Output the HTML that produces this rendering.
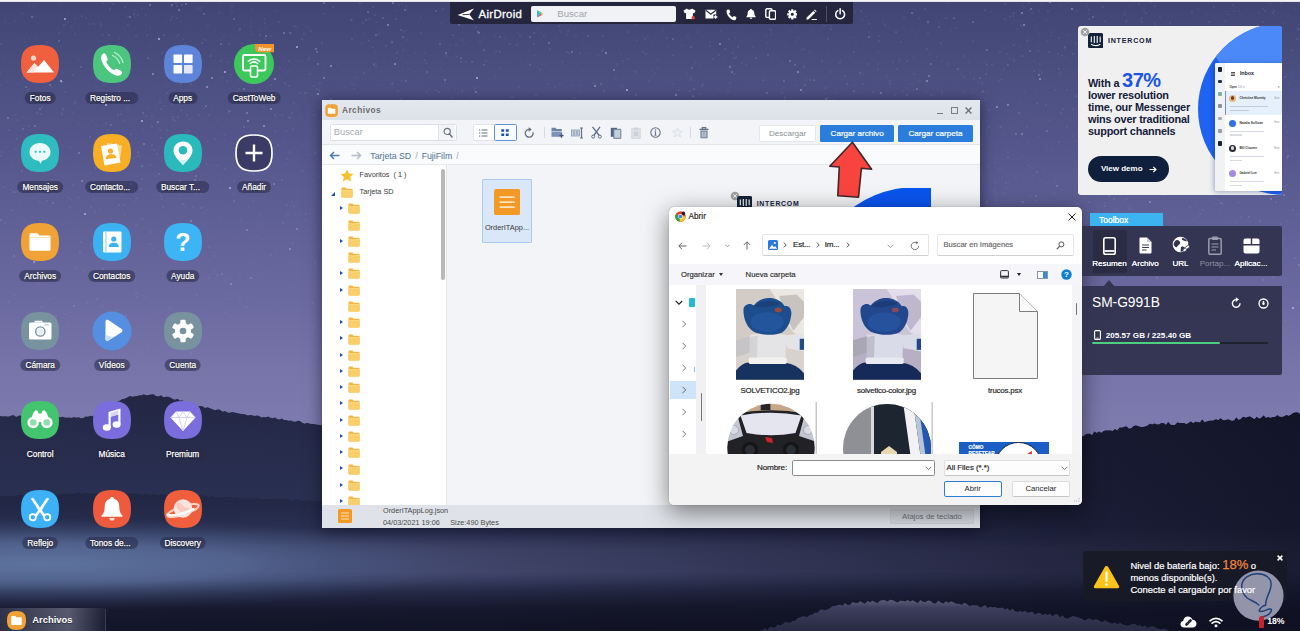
<!DOCTYPE html>
<html lang="es">
<head>
<meta charset="utf-8">
<title>AirDroid Web</title>
<style>
*{box-sizing:border-box;margin:0;padding:0}
html,body{width:1300px;height:631px;overflow:hidden;background:#3f4270}
body{position:relative;font-family:"Liberation Sans",sans-serif;color:#fff;font-size:8.1px}
.abs{position:absolute}
#bg{position:absolute;left:0;top:0;width:1300px;height:631px;
background:linear-gradient(to bottom,#41457400,#414574 0px,#494d7e 60px,#54568b 140px,#5f6096 220px,#6b6aa0 300px,#7573a8 360px,#7b79ad 410px,#7f7cb0 450px)}
#bgsvg{position:absolute;left:0;top:0}
/* desktop icons */
.ic{position:absolute;width:38px;height:38px}
.ic svg{display:block}
.lb{position:absolute;height:12.5px;line-height:12.5px;padding:0 5px;border-radius:6px;background:rgba(40,42,74,.55);color:#fff;font-size:8.3px;white-space:nowrap;transform:translateX(-50%);text-shadow:0 0 1.500px rgba(0,0,10,.9),0 .5px 1px rgba(0,0,10,.7);-webkit-text-stroke:.25px #fff}
</style>
</head>
<body>
<div id="bg"></div>
<svg id="bgsvg" width="1300" height="631" viewBox="0 0 1300 631">
<defs>
<linearGradient id="mg" gradientUnits="userSpaceOnUse" x1="0" y1="395" x2="0" y2="631">
<stop offset="0" stop-color="#212440"/><stop offset=".2" stop-color="#262a4a"/><stop offset=".45" stop-color="#293051"/><stop offset=".56" stop-color="#2d3457"/><stop offset=".65" stop-color="#42476c"/><stop offset=".75" stop-color="#464b72"/><stop offset=".83" stop-color="#2b3252"/><stop offset=".9" stop-color="#1d2138"/><stop offset="1" stop-color="#131425"/></linearGradient>
<linearGradient id="mgx" gradientUnits="userSpaceOnUse" x1="0" y1="0" x2="1300" y2="0">
<stop offset="0" stop-color="#2a3152" stop-opacity=".3"/><stop offset=".3" stop-color="#2a3152" stop-opacity=".1"/><stop offset=".45" stop-color="#121326" stop-opacity=".2"/><stop offset=".6" stop-color="#111225" stop-opacity=".38"/><stop offset=".8" stop-color="#101124" stop-opacity=".6"/><stop offset="1" stop-color="#0e0f20" stop-opacity=".78"/></linearGradient>
<linearGradient id="rgx" gradientUnits="userSpaceOnUse" x1="0" y1="0" x2="1100" y2="0">
<stop offset="0" stop-color="#1a1e38" stop-opacity=".55"/><stop offset=".5" stop-color="#1a1e38" stop-opacity=".4"/><stop offset="1" stop-color="#1a1e38" stop-opacity="0"/></linearGradient>
<linearGradient id="rmg" gradientUnits="userSpaceOnUse" x1="0" y1="492" x2="0" y2="548">
<stop offset="0" stop-color="#fff"/><stop offset=".35" stop-color="#bbb"/><stop offset="1" stop-color="#000"/></linearGradient>
<mask id="rm"><rect x="0" y="480" width="1300" height="90" fill="url(#rmg)"/></mask>
<radialGradient id="lm" gradientUnits="userSpaceOnUse" cx="0" cy="0" r="1" gradientTransform="translate(40 564) scale(440 46)">
<stop offset="0" stop-color="#5f76a2" stop-opacity=".95"/><stop offset=".45" stop-color="#586d99" stop-opacity=".75"/><stop offset=".75" stop-color="#4c5f8c" stop-opacity=".35"/><stop offset="1" stop-color="#45557f" stop-opacity="0"/></radialGradient>
<linearGradient id="hg" gradientUnits="userSpaceOnUse" x1="0" y1="600" x2="0" y2="631">
<stop offset="0" stop-color="#6a6b88"/><stop offset=".25" stop-color="#48496a"/><stop offset="1" stop-color="#2e2f4a"/></linearGradient>
<linearGradient id="tk" gradientUnits="userSpaceOnUse" x1="0" y1="580" x2="0" y2="631"><stop offset="0" stop-color="#0f1022" stop-opacity="0"/><stop offset=".5" stop-color="#0f1022" stop-opacity=".4"/><stop offset=".6" stop-color="#0f1022" stop-opacity=".55"/><stop offset="1" stop-color="#0f1022" stop-opacity=".6"/></linearGradient>
</defs>
<rect x="0" y="0" width="1300" height="1.900" fill="#fff" opacity=".95"/>
<g fill="#cdd0f2"><g opacity=".17"><circle cx="109" cy="226" r="0.7"/><circle cx="169" cy="75" r="0.6"/><circle cx="806" cy="343" r="0.8"/><circle cx="548" cy="196" r="0.7"/><circle cx="1002" cy="80" r="0.7"/><circle cx="744" cy="252" r="0.5"/><circle cx="1059" cy="69" r="0.8"/><circle cx="878" cy="64" r="0.7"/><circle cx="875" cy="199" r="0.5"/><circle cx="128" cy="17" r="0.7"/><circle cx="1067" cy="127" r="0.7"/><circle cx="284" cy="59" r="0.5"/><circle cx="919" cy="315" r="0.6"/><circle cx="541" cy="11" r="0.5"/><circle cx="251" cy="31" r="0.6"/><circle cx="981" cy="175" r="0.5"/><circle cx="135" cy="202" r="0.6"/><circle cx="329" cy="161" r="0.8"/><circle cx="991" cy="250" r="0.6"/><circle cx="1164" cy="262" r="0.6"/><circle cx="710" cy="163" r="0.5"/><circle cx="1075" cy="43" r="0.7"/><circle cx="215" cy="252" r="0.5"/><circle cx="306" cy="214" r="0.8"/><circle cx="1285" cy="105" r="0.5"/><circle cx="1021" cy="56" r="0.6"/><circle cx="1032" cy="13" r="0.8"/><circle cx="1241" cy="161" r="0.6"/><circle cx="684" cy="115" r="0.5"/><circle cx="294" cy="26" r="0.8"/><circle cx="379" cy="123" r="0.7"/><circle cx="898" cy="147" r="0.6"/><circle cx="653" cy="44" r="0.5"/><circle cx="361" cy="293" r="0.5"/><circle cx="1277" cy="242" r="0.5"/><circle cx="358" cy="139" r="0.5"/><circle cx="234" cy="194" r="0.7"/><circle cx="381" cy="32" r="0.6"/><circle cx="53" cy="47" r="0.5"/><circle cx="1033" cy="20" r="0.5"/><circle cx="425" cy="53" r="0.6"/><circle cx="268" cy="163" r="0.6"/><circle cx="1203" cy="120" r="0.6"/><circle cx="1199" cy="188" r="0.6"/><circle cx="986" cy="204" r="0.8"/><circle cx="550" cy="17" r="0.8"/><circle cx="1070" cy="225" r="0.6"/><circle cx="1242" cy="15" r="0.6"/><circle cx="518" cy="141" r="0.5"/><circle cx="697" cy="238" r="0.6"/><circle cx="559" cy="26" r="0.8"/><circle cx="828" cy="98" r="0.8"/><circle cx="921" cy="255" r="0.6"/><circle cx="1055" cy="177" r="0.5"/><circle cx="1038" cy="46" r="0.6"/><circle cx="691" cy="77" r="0.7"/><circle cx="349" cy="109" r="0.7"/><circle cx="440" cy="281" r="0.6"/><circle cx="82" cy="297" r="0.5"/><circle cx="906" cy="119" r="0.5"/><circle cx="1078" cy="366" r="0.8"/><circle cx="1244" cy="241" r="0.7"/><circle cx="708" cy="161" r="0.5"/><circle cx="1138" cy="77" r="0.5"/><circle cx="854" cy="52" r="0.8"/><circle cx="80" cy="252" r="0.5"/><circle cx="780" cy="148" r="0.8"/><circle cx="1037" cy="243" r="0.5"/><circle cx="460" cy="223" r="0.8"/><circle cx="11" cy="190" r="0.7"/><circle cx="186" cy="55" r="0.5"/><circle cx="798" cy="164" r="0.6"/><circle cx="679" cy="205" r="0.6"/><circle cx="1091" cy="103" r="0.6"/><circle cx="150" cy="165" r="0.8"/><circle cx="1279" cy="292" r="0.6"/><circle cx="192" cy="240" r="0.6"/><circle cx="207" cy="210" r="0.5"/><circle cx="169" cy="329" r="0.7"/><circle cx="960" cy="177" r="0.7"/><circle cx="1027" cy="41" r="0.8"/><circle cx="489" cy="279" r="0.5"/><circle cx="901" cy="42" r="0.7"/><circle cx="187" cy="115" r="0.8"/><circle cx="878" cy="69" r="0.7"/><circle cx="624" cy="273" r="0.8"/><circle cx="151" cy="232" r="0.7"/><circle cx="951" cy="130" r="0.8"/><circle cx="1105" cy="21" r="0.7"/><circle cx="769" cy="280" r="0.6"/><circle cx="150" cy="46" r="0.6"/><circle cx="462" cy="40" r="0.7"/><circle cx="735" cy="152" r="0.7"/><circle cx="1288" cy="16" r="0.6"/><circle cx="703" cy="244" r="0.8"/><circle cx="17" cy="139" r="0.8"/><circle cx="1013" cy="207" r="0.6"/><circle cx="915" cy="108" r="0.6"/><circle cx="986" cy="307" r="0.8"/><circle cx="224" cy="233" r="0.6"/><circle cx="151" cy="80" r="0.5"/><circle cx="1129" cy="48" r="0.7"/><circle cx="234" cy="316" r="0.6"/><circle cx="1170" cy="29" r="0.6"/><circle cx="483" cy="281" r="0.8"/><circle cx="79" cy="344" r="0.5"/><circle cx="252" cy="34" r="0.6"/><circle cx="1104" cy="265" r="0.7"/><circle cx="60" cy="19" r="0.5"/><circle cx="1068" cy="218" r="0.5"/><circle cx="1212" cy="69" r="0.6"/><circle cx="406" cy="299" r="0.6"/><circle cx="847" cy="15" r="0.7"/><circle cx="1173" cy="85" r="0.6"/><circle cx="291" cy="162" r="0.5"/><circle cx="583" cy="253" r="0.5"/><circle cx="505" cy="38" r="0.6"/><circle cx="42" cy="307" r="0.8"/><circle cx="337" cy="64" r="0.6"/><circle cx="1014" cy="61" r="0.8"/><circle cx="206" cy="277" r="0.6"/><circle cx="1160" cy="164" r="0.7"/><circle cx="191" cy="353" r="0.8"/><circle cx="1059" cy="172" r="0.5"/><circle cx="131" cy="134" r="0.8"/><circle cx="1250" cy="259" r="0.6"/><circle cx="21" cy="217" r="0.6"/><circle cx="261" cy="65" r="0.5"/><circle cx="1018" cy="143" r="0.5"/><circle cx="254" cy="201" r="0.7"/><circle cx="786" cy="46" r="0.6"/><circle cx="398" cy="105" r="0.8"/><circle cx="1182" cy="91" r="0.8"/><circle cx="696" cy="103" r="0.6"/><circle cx="513" cy="286" r="0.6"/><circle cx="510" cy="181" r="0.5"/><circle cx="778" cy="309" r="0.6"/><circle cx="946" cy="149" r="0.7"/><circle cx="1002" cy="99" r="0.6"/><circle cx="900" cy="59" r="0.7"/><circle cx="500" cy="52" r="0.8"/><circle cx="184" cy="136" r="0.8"/><circle cx="813" cy="32" r="0.6"/><circle cx="915" cy="10" r="0.6"/><circle cx="735" cy="58" r="0.7"/><circle cx="471" cy="285" r="0.7"/><circle cx="540" cy="179" r="0.6"/><circle cx="866" cy="139" r="0.5"/><circle cx="296" cy="263" r="0.5"/><circle cx="940" cy="103" r="0.5"/><circle cx="936" cy="81" r="0.6"/><circle cx="1143" cy="49" r="0.7"/><circle cx="1087" cy="6" r="0.5"/><circle cx="209" cy="247" r="0.8"/><circle cx="442" cy="223" r="0.7"/><circle cx="158" cy="194" r="0.6"/><circle cx="303" cy="171" r="0.7"/><circle cx="637" cy="222" r="0.6"/><circle cx="1073" cy="320" r="0.6"/><circle cx="985" cy="210" r="0.5"/><circle cx="59" cy="33" r="0.7"/><circle cx="240" cy="298" r="0.7"/><circle cx="610" cy="4" r="0.5"/><circle cx="640" cy="137" r="0.8"/><circle cx="1017" cy="29" r="0.5"/><circle cx="1263" cy="92" r="0.6"/><circle cx="905" cy="176" r="0.5"/><circle cx="1001" cy="127" r="0.7"/><circle cx="311" cy="31" r="0.8"/><circle cx="322" cy="289" r="0.5"/><circle cx="1022" cy="156" r="0.6"/><circle cx="989" cy="127" r="0.8"/><circle cx="443" cy="109" r="0.5"/><circle cx="1020" cy="46" r="0.6"/><circle cx="814" cy="180" r="0.8"/><circle cx="634" cy="125" r="0.8"/><circle cx="89" cy="24" r="0.7"/><circle cx="365" cy="243" r="0.7"/><circle cx="202" cy="207" r="0.7"/><circle cx="416" cy="197" r="0.6"/><circle cx="899" cy="286" r="0.7"/><circle cx="628" cy="59" r="0.7"/><circle cx="827" cy="152" r="0.7"/><circle cx="1116" cy="209" r="0.6"/><circle cx="1059" cy="38" r="0.8"/><circle cx="1218" cy="62" r="0.5"/><circle cx="65" cy="92" r="0.7"/><circle cx="142" cy="8" r="0.6"/><circle cx="781" cy="297" r="0.7"/><circle cx="72" cy="111" r="0.5"/><circle cx="1259" cy="333" r="0.6"/><circle cx="149" cy="108" r="0.6"/><circle cx="662" cy="208" r="0.7"/><circle cx="104" cy="5" r="0.6"/><circle cx="343" cy="181" r="0.5"/><circle cx="807" cy="287" r="0.7"/><circle cx="473" cy="273" r="0.6"/><circle cx="701" cy="74" r="0.5"/><circle cx="265" cy="39" r="0.6"/><circle cx="695" cy="245" r="0.5"/><circle cx="407" cy="327" r="0.7"/><circle cx="213" cy="148" r="0.5"/><circle cx="1066" cy="57" r="0.6"/><circle cx="859" cy="164" r="0.6"/><circle cx="619" cy="175" r="0.8"/><circle cx="645" cy="151" r="0.7"/><circle cx="422" cy="14" r="0.5"/><circle cx="93" cy="322" r="0.7"/><circle cx="892" cy="228" r="0.6"/><circle cx="197" cy="295" r="0.8"/><circle cx="909" cy="295" r="0.5"/><circle cx="55" cy="54" r="0.6"/><circle cx="1046" cy="147" r="0.6"/><circle cx="393" cy="83" r="0.7"/><circle cx="673" cy="189" r="0.5"/><circle cx="445" cy="83" r="0.8"/><circle cx="638" cy="111" r="0.8"/><circle cx="812" cy="128" r="0.7"/><circle cx="510" cy="112" r="0.8"/><circle cx="1188" cy="93" r="0.8"/><circle cx="908" cy="12" r="0.5"/><circle cx="603" cy="209" r="0.7"/><circle cx="646" cy="4" r="0.6"/><circle cx="99" cy="41" r="0.5"/><circle cx="1061" cy="113" r="0.8"/><circle cx="412" cy="202" r="0.7"/><circle cx="93" cy="199" r="0.5"/><circle cx="136" cy="225" r="0.8"/><circle cx="1081" cy="220" r="0.8"/><circle cx="616" cy="239" r="0.5"/><circle cx="354" cy="85" r="0.8"/><circle cx="1004" cy="252" r="0.6"/><circle cx="164" cy="76" r="0.6"/><circle cx="521" cy="124" r="0.7"/><circle cx="604" cy="206" r="0.7"/><circle cx="73" cy="113" r="0.6"/><circle cx="167" cy="130" r="0.8"/><circle cx="1266" cy="128" r="0.8"/><circle cx="4" cy="187" r="0.8"/><circle cx="539" cy="172" r="0.8"/><circle cx="663" cy="146" r="0.5"/><circle cx="620" cy="168" r="0.6"/><circle cx="103" cy="3" r="0.7"/><circle cx="325" cy="200" r="0.6"/><circle cx="682" cy="126" r="0.5"/><circle cx="557" cy="38" r="0.6"/><circle cx="1124" cy="174" r="0.8"/><circle cx="1286" cy="77" r="0.8"/><circle cx="623" cy="9" r="0.5"/><circle cx="75" cy="103" r="0.7"/><circle cx="1103" cy="7" r="0.8"/><circle cx="1119" cy="303" r="0.7"/><circle cx="1079" cy="124" r="0.5"/><circle cx="559" cy="232" r="0.5"/><circle cx="1291" cy="155" r="0.5"/><circle cx="749" cy="239" r="0.6"/><circle cx="732" cy="116" r="0.7"/><circle cx="5" cy="59" r="0.6"/><circle cx="484" cy="189" r="0.7"/><circle cx="1172" cy="148" r="0.8"/><circle cx="185" cy="236" r="0.7"/><circle cx="552" cy="179" r="0.6"/><circle cx="667" cy="38" r="0.8"/><circle cx="1007" cy="111" r="0.5"/><circle cx="870" cy="197" r="0.7"/><circle cx="831" cy="72" r="0.7"/><circle cx="742" cy="138" r="0.8"/><circle cx="541" cy="338" r="0.6"/><circle cx="94" cy="77" r="0.6"/><circle cx="50" cy="324" r="0.7"/><circle cx="1162" cy="257" r="0.5"/><circle cx="601" cy="293" r="0.6"/><circle cx="757" cy="166" r="0.7"/><circle cx="230" cy="111" r="0.8"/><circle cx="684" cy="180" r="0.6"/><circle cx="1195" cy="64" r="0.5"/><circle cx="72" cy="133" r="0.5"/><circle cx="507" cy="253" r="0.6"/><circle cx="831" cy="26" r="0.7"/><circle cx="351" cy="141" r="0.5"/><circle cx="180" cy="72" r="0.7"/><circle cx="1087" cy="135" r="0.6"/><circle cx="387" cy="174" r="0.6"/><circle cx="201" cy="193" r="0.7"/><circle cx="1084" cy="335" r="0.7"/><circle cx="655" cy="172" r="0.6"/><circle cx="198" cy="260" r="0.5"/><circle cx="625" cy="300" r="0.8"/><circle cx="667" cy="183" r="0.7"/><circle cx="1272" cy="117" r="0.7"/><circle cx="564" cy="134" r="0.5"/><circle cx="337" cy="199" r="0.5"/><circle cx="664" cy="226" r="0.7"/><circle cx="1155" cy="6" r="0.8"/><circle cx="345" cy="177" r="0.8"/><circle cx="754" cy="139" r="0.6"/><circle cx="443" cy="71" r="0.5"/><circle cx="221" cy="61" r="0.8"/><circle cx="1075" cy="141" r="0.5"/><circle cx="315" cy="261" r="0.8"/><circle cx="746" cy="57" r="0.5"/><circle cx="614" cy="233" r="0.7"/><circle cx="239" cy="80" r="0.6"/><circle cx="8" cy="91" r="0.5"/><circle cx="95" cy="211" r="0.5"/><circle cx="314" cy="115" r="0.7"/><circle cx="551" cy="260" r="0.8"/><circle cx="1101" cy="165" r="0.8"/><circle cx="34" cy="6" r="0.7"/><circle cx="540" cy="143" r="0.8"/><circle cx="233" cy="100" r="0.7"/><circle cx="623" cy="61" r="0.7"/><circle cx="279" cy="174" r="0.5"/><circle cx="1141" cy="294" r="0.6"/><circle cx="843" cy="159" r="0.8"/><circle cx="954" cy="86" r="0.5"/><circle cx="1132" cy="133" r="0.8"/><circle cx="220" cy="218" r="0.5"/><circle cx="48" cy="76" r="0.5"/><circle cx="428" cy="232" r="0.8"/><circle cx="1010" cy="125" r="0.5"/><circle cx="1095" cy="189" r="0.7"/><circle cx="418" cy="188" r="0.7"/><circle cx="695" cy="64" r="0.6"/><circle cx="435" cy="202" r="0.6"/><circle cx="760" cy="257" r="0.7"/><circle cx="482" cy="150" r="0.6"/><circle cx="1200" cy="214" r="0.8"/><circle cx="333" cy="123" r="0.7"/><circle cx="877" cy="80" r="0.6"/><circle cx="146" cy="25" r="0.5"/><circle cx="210" cy="56" r="0.6"/><circle cx="323" cy="117" r="0.7"/><circle cx="965" cy="122" r="0.7"/><circle cx="430" cy="104" r="0.8"/><circle cx="239" cy="31" r="0.5"/><circle cx="31" cy="51" r="0.6"/><circle cx="1235" cy="311" r="0.8"/><circle cx="406" cy="63" r="0.5"/><circle cx="32" cy="55" r="0.7"/><circle cx="483" cy="9" r="0.7"/><circle cx="366" cy="277" r="0.6"/><circle cx="201" cy="208" r="0.7"/><circle cx="195" cy="193" r="0.8"/><circle cx="1028" cy="142" r="0.7"/><circle cx="977" cy="236" r="0.6"/><circle cx="1000" cy="171" r="0.6"/><circle cx="916" cy="354" r="0.8"/><circle cx="679" cy="17" r="0.8"/><circle cx="1176" cy="122" r="0.5"/><circle cx="1138" cy="192" r="0.7"/><circle cx="1" cy="156" r="0.7"/><circle cx="376" cy="66" r="0.8"/><circle cx="27" cy="67" r="0.7"/><circle cx="921" cy="116" r="0.7"/><circle cx="863" cy="164" r="0.5"/><circle cx="645" cy="12" r="0.8"/><circle cx="523" cy="192" r="0.5"/><circle cx="1193" cy="219" r="0.6"/><circle cx="101" cy="24" r="0.8"/><circle cx="714" cy="68" r="0.5"/><circle cx="152" cy="117" r="0.7"/><circle cx="644" cy="203" r="0.7"/><circle cx="421" cy="33" r="0.7"/><circle cx="255" cy="58" r="0.8"/><circle cx="70" cy="147" r="0.7"/><circle cx="573" cy="167" r="0.6"/><circle cx="340" cy="167" r="0.5"/><circle cx="113" cy="4" r="0.8"/><circle cx="182" cy="173" r="0.5"/><circle cx="732" cy="183" r="0.7"/><circle cx="1224" cy="80" r="0.7"/><circle cx="215" cy="128" r="0.5"/><circle cx="128" cy="109" r="0.7"/><circle cx="1226" cy="46" r="0.7"/><circle cx="175" cy="262" r="0.5"/><circle cx="645" cy="39" r="0.8"/><circle cx="265" cy="19" r="0.7"/><circle cx="137" cy="156" r="0.6"/><circle cx="471" cy="97" r="0.5"/><circle cx="890" cy="236" r="0.8"/><circle cx="1268" cy="233" r="0.7"/><circle cx="162" cy="199" r="0.8"/><circle cx="819" cy="318" r="0.5"/><circle cx="6" cy="82" r="0.6"/><circle cx="394" cy="236" r="0.8"/><circle cx="541" cy="33" r="0.6"/><circle cx="587" cy="17" r="0.6"/><circle cx="986" cy="250" r="0.8"/><circle cx="1180" cy="91" r="0.5"/><circle cx="580" cy="92" r="0.5"/><circle cx="874" cy="302" r="0.6"/><circle cx="45" cy="204" r="0.5"/><circle cx="1008" cy="46" r="0.5"/><circle cx="1144" cy="152" r="0.8"/><circle cx="125" cy="7" r="0.8"/><circle cx="1061" cy="5" r="0.5"/><circle cx="248" cy="73" r="0.7"/><circle cx="1068" cy="225" r="0.6"/><circle cx="112" cy="270" r="0.6"/><circle cx="101" cy="226" r="0.5"/><circle cx="734" cy="58" r="0.6"/><circle cx="1263" cy="22" r="0.8"/><circle cx="785" cy="212" r="0.7"/><circle cx="78" cy="123" r="0.6"/><circle cx="142" cy="179" r="0.8"/><circle cx="353" cy="155" r="0.8"/><circle cx="167" cy="21" r="0.5"/><circle cx="531" cy="284" r="0.6"/><circle cx="41" cy="52" r="0.6"/><circle cx="78" cy="183" r="0.6"/><circle cx="1133" cy="186" r="0.7"/><circle cx="462" cy="119" r="0.7"/><circle cx="250" cy="83" r="0.8"/><circle cx="572" cy="85" r="0.5"/><circle cx="383" cy="268" r="0.7"/><circle cx="1029" cy="11" r="0.6"/><circle cx="927" cy="127" r="0.5"/><circle cx="580" cy="116" r="0.5"/><circle cx="1039" cy="34" r="0.6"/><circle cx="952" cy="274" r="0.7"/><circle cx="1266" cy="65" r="0.6"/><circle cx="737" cy="138" r="0.7"/><circle cx="835" cy="206" r="0.8"/><circle cx="448" cy="26" r="0.6"/><circle cx="586" cy="185" r="0.8"/><circle cx="544" cy="144" r="0.7"/><circle cx="450" cy="57" r="0.5"/><circle cx="568" cy="174" r="0.5"/><circle cx="1093" cy="91" r="0.7"/><circle cx="328" cy="279" r="0.7"/><circle cx="806" cy="80" r="0.7"/><circle cx="438" cy="177" r="0.8"/><circle cx="326" cy="276" r="0.6"/><circle cx="703" cy="84" r="0.7"/><circle cx="481" cy="119" r="0.7"/><circle cx="1176" cy="177" r="0.6"/><circle cx="757" cy="180" r="0.6"/><circle cx="657" cy="9" r="0.8"/><circle cx="534" cy="281" r="0.5"/><circle cx="732" cy="262" r="0.7"/><circle cx="678" cy="155" r="0.8"/><circle cx="232" cy="143" r="0.5"/><circle cx="858" cy="51" r="0.5"/><circle cx="1139" cy="4" r="0.7"/><circle cx="623" cy="116" r="0.6"/><circle cx="1205" cy="59" r="0.8"/><circle cx="386" cy="213" r="0.7"/><circle cx="590" cy="167" r="0.6"/><circle cx="878" cy="52" r="0.6"/><circle cx="104" cy="85" r="0.6"/><circle cx="244" cy="25" r="0.6"/><circle cx="810" cy="80" r="0.8"/><circle cx="208" cy="165" r="0.6"/><circle cx="972" cy="115" r="0.8"/><circle cx="90" cy="173" r="0.6"/><circle cx="880" cy="159" r="0.5"/><circle cx="1264" cy="93" r="0.6"/><circle cx="260" cy="35" r="0.8"/><circle cx="968" cy="329" r="0.8"/><circle cx="1227" cy="190" r="0.5"/><circle cx="111" cy="219" r="0.5"/><circle cx="483" cy="121" r="0.5"/><circle cx="354" cy="89" r="0.7"/><circle cx="577" cy="256" r="0.7"/><circle cx="218" cy="133" r="0.5"/><circle cx="1143" cy="181" r="0.6"/><circle cx="1164" cy="195" r="0.7"/><circle cx="560" cy="30" r="0.6"/><circle cx="561" cy="156" r="0.5"/><circle cx="251" cy="263" r="0.6"/><circle cx="956" cy="223" r="0.6"/><circle cx="876" cy="310" r="0.5"/><circle cx="718" cy="240" r="0.6"/><circle cx="663" cy="29" r="0.6"/><circle cx="486" cy="61" r="0.7"/><circle cx="602" cy="138" r="0.6"/><circle cx="1160" cy="62" r="0.8"/><circle cx="796" cy="23" r="0.7"/><circle cx="151" cy="59" r="0.5"/><circle cx="1168" cy="76" r="0.5"/><circle cx="735" cy="279" r="0.7"/><circle cx="207" cy="142" r="0.6"/><circle cx="438" cy="119" r="0.6"/><circle cx="373" cy="7" r="0.8"/><circle cx="172" cy="104" r="0.8"/><circle cx="724" cy="199" r="0.8"/><circle cx="1085" cy="26" r="0.8"/><circle cx="562" cy="243" r="0.8"/><circle cx="1267" cy="34" r="0.5"/><circle cx="1018" cy="21" r="0.6"/><circle cx="103" cy="34" r="0.6"/><circle cx="1298" cy="194" r="0.5"/><circle cx="1033" cy="323" r="0.7"/><circle cx="779" cy="231" r="0.6"/><circle cx="1300" cy="158" r="0.5"/><circle cx="73" cy="185" r="0.8"/><circle cx="25" cy="42" r="0.7"/><circle cx="616" cy="78" r="0.7"/><circle cx="561" cy="32" r="0.5"/><circle cx="886" cy="182" r="0.8"/><circle cx="654" cy="218" r="0.5"/><circle cx="793" cy="53" r="0.5"/><circle cx="189" cy="131" r="0.8"/><circle cx="411" cy="316" r="0.8"/><circle cx="27" cy="282" r="0.8"/><circle cx="114" cy="164" r="0.6"/><circle cx="44" cy="65" r="0.5"/><circle cx="661" cy="149" r="0.7"/><circle cx="131" cy="95" r="0.6"/><circle cx="429" cy="123" r="0.5"/><circle cx="869" cy="142" r="0.7"/><circle cx="205" cy="221" r="0.5"/><circle cx="582" cy="43" r="0.5"/><circle cx="722" cy="167" r="0.7"/><circle cx="544" cy="36" r="0.7"/><circle cx="131" cy="54" r="0.7"/><circle cx="982" cy="83" r="0.7"/><circle cx="912" cy="107" r="0.7"/><circle cx="1163" cy="231" r="0.6"/><circle cx="423" cy="249" r="0.5"/><circle cx="193" cy="207" r="0.8"/><circle cx="1219" cy="241" r="0.8"/><circle cx="1101" cy="75" r="0.8"/><circle cx="317" cy="89" r="0.7"/><circle cx="795" cy="104" r="0.7"/><circle cx="935" cy="126" r="0.5"/><circle cx="806" cy="234" r="0.7"/><circle cx="824" cy="204" r="0.8"/><circle cx="710" cy="46" r="0.7"/><circle cx="811" cy="116" r="0.5"/><circle cx="991" cy="12" r="0.5"/><circle cx="769" cy="29" r="0.6"/><circle cx="1189" cy="145" r="0.5"/><circle cx="903" cy="209" r="0.7"/><circle cx="870" cy="171" r="0.8"/><circle cx="1005" cy="19" r="0.8"/><circle cx="96" cy="74" r="0.6"/><circle cx="240" cy="274" r="0.7"/><circle cx="1185" cy="109" r="0.6"/><circle cx="1169" cy="39" r="0.7"/><circle cx="1288" cy="116" r="0.6"/><circle cx="1246" cy="61" r="0.8"/><circle cx="664" cy="82" r="0.6"/><circle cx="987" cy="92" r="0.6"/><circle cx="58" cy="64" r="0.6"/><circle cx="866" cy="25" r="0.5"/><circle cx="86" cy="18" r="0.5"/><circle cx="448" cy="356" r="0.8"/><circle cx="1206" cy="15" r="0.5"/><circle cx="887" cy="323" r="0.8"/><circle cx="201" cy="193" r="0.6"/><circle cx="220" cy="40" r="0.6"/><circle cx="1240" cy="110" r="0.8"/><circle cx="934" cy="95" r="0.6"/><circle cx="843" cy="288" r="0.5"/><circle cx="441" cy="68" r="0.5"/><circle cx="1222" cy="138" r="0.8"/><circle cx="958" cy="202" r="0.5"/><circle cx="236" cy="40" r="0.6"/><circle cx="864" cy="190" r="0.5"/><circle cx="122" cy="78" r="0.5"/><circle cx="464" cy="131" r="0.6"/><circle cx="1019" cy="211" r="0.5"/><circle cx="663" cy="116" r="0.6"/><circle cx="69" cy="14" r="0.6"/><circle cx="729" cy="216" r="0.5"/><circle cx="352" cy="164" r="0.8"/><circle cx="1126" cy="22" r="0.8"/><circle cx="485" cy="207" r="0.8"/><circle cx="375" cy="52" r="0.5"/><circle cx="54" cy="162" r="0.5"/><circle cx="494" cy="240" r="0.5"/><circle cx="869" cy="32" r="0.7"/><circle cx="374" cy="141" r="0.5"/><circle cx="601" cy="133" r="0.5"/><circle cx="209" cy="278" r="0.8"/><circle cx="507" cy="153" r="0.7"/><circle cx="1214" cy="100" r="0.8"/><circle cx="47" cy="201" r="0.7"/><circle cx="1081" cy="37" r="0.8"/><circle cx="657" cy="129" r="0.5"/><circle cx="271" cy="185" r="0.7"/><circle cx="664" cy="131" r="0.6"/><circle cx="1270" cy="3" r="0.6"/><circle cx="974" cy="362" r="0.5"/><circle cx="346" cy="126" r="0.5"/><circle cx="728" cy="132" r="0.8"/><circle cx="568" cy="31" r="0.8"/><circle cx="928" cy="183" r="0.8"/><circle cx="510" cy="12" r="0.5"/><circle cx="837" cy="252" r="0.7"/><circle cx="702" cy="183" r="0.5"/><circle cx="1135" cy="181" r="0.8"/><circle cx="840" cy="239" r="0.6"/><circle cx="736" cy="13" r="0.8"/><circle cx="89" cy="51" r="0.5"/><circle cx="504" cy="184" r="0.5"/><circle cx="173" cy="120" r="0.8"/><circle cx="710" cy="221" r="0.6"/><circle cx="1151" cy="145" r="0.6"/><circle cx="973" cy="93" r="0.6"/><circle cx="1130" cy="6" r="0.6"/><circle cx="1002" cy="238" r="0.6"/><circle cx="1266" cy="141" r="0.7"/><circle cx="1085" cy="197" r="0.6"/><circle cx="103" cy="125" r="0.6"/><circle cx="1027" cy="127" r="0.7"/><circle cx="232" cy="11" r="0.7"/><circle cx="178" cy="35" r="0.8"/><circle cx="558" cy="85" r="0.5"/><circle cx="1233" cy="5" r="0.8"/><circle cx="181" cy="110" r="0.7"/><circle cx="763" cy="289" r="0.6"/><circle cx="676" cy="176" r="0.7"/><circle cx="1070" cy="149" r="0.5"/><circle cx="902" cy="286" r="0.8"/><circle cx="573" cy="176" r="0.5"/><circle cx="1146" cy="128" r="0.6"/><circle cx="1157" cy="302" r="0.7"/><circle cx="767" cy="208" r="0.6"/><circle cx="237" cy="25" r="0.5"/><circle cx="1046" cy="184" r="0.5"/><circle cx="52" cy="180" r="0.5"/><circle cx="302" cy="39" r="0.8"/><circle cx="1073" cy="109" r="0.7"/><circle cx="456" cy="45" r="0.8"/><circle cx="921" cy="205" r="0.5"/><circle cx="713" cy="197" r="0.5"/><circle cx="421" cy="161" r="0.5"/><circle cx="75" cy="102" r="0.7"/><circle cx="128" cy="155" r="0.5"/><circle cx="1021" cy="248" r="0.5"/><circle cx="1277" cy="308" r="0.6"/><circle cx="628" cy="32" r="0.8"/><circle cx="710" cy="181" r="0.6"/><circle cx="799" cy="222" r="0.7"/><circle cx="729" cy="107" r="0.7"/><circle cx="829" cy="52" r="0.5"/><circle cx="771" cy="34" r="0.7"/><circle cx="904" cy="18" r="0.8"/><circle cx="138" cy="15" r="0.8"/><circle cx="450" cy="194" r="0.6"/><circle cx="170" cy="154" r="0.6"/><circle cx="840" cy="63" r="0.7"/><circle cx="218" cy="121" r="0.6"/><circle cx="979" cy="21" r="0.5"/><circle cx="597" cy="174" r="0.7"/><circle cx="1223" cy="204" r="0.7"/><circle cx="368" cy="206" r="0.6"/><circle cx="887" cy="76" r="0.6"/><circle cx="1289" cy="83" r="0.6"/><circle cx="516" cy="211" r="0.5"/><circle cx="612" cy="214" r="0.8"/><circle cx="524" cy="251" r="0.8"/><circle cx="128" cy="25" r="0.8"/><circle cx="519" cy="250" r="0.6"/><circle cx="416" cy="182" r="0.6"/><circle cx="206" cy="40" r="0.7"/><circle cx="484" cy="37" r="0.5"/><circle cx="1279" cy="83" r="0.8"/><circle cx="249" cy="40" r="0.5"/><circle cx="885" cy="25" r="0.7"/><circle cx="1049" cy="290" r="0.5"/><circle cx="998" cy="239" r="0.6"/><circle cx="1043" cy="314" r="0.5"/><circle cx="987" cy="65" r="0.8"/><circle cx="1117" cy="330" r="0.6"/><circle cx="1195" cy="131" r="0.6"/><circle cx="308" cy="145" r="0.5"/><circle cx="1248" cy="143" r="0.7"/><circle cx="505" cy="21" r="0.6"/><circle cx="286" cy="131" r="0.7"/><circle cx="1086" cy="59" r="0.8"/><circle cx="1095" cy="98" r="0.6"/><circle cx="117" cy="310" r="0.7"/><circle cx="1147" cy="97" r="0.6"/><circle cx="1087" cy="210" r="0.6"/><circle cx="1226" cy="11" r="0.6"/><circle cx="448" cy="115" r="0.6"/><circle cx="1162" cy="137" r="0.5"/><circle cx="620" cy="199" r="0.6"/><circle cx="429" cy="95" r="0.5"/><circle cx="495" cy="194" r="0.8"/><circle cx="106" cy="280" r="0.7"/><circle cx="1067" cy="90" r="0.7"/><circle cx="87" cy="303" r="0.7"/><circle cx="1153" cy="179" r="0.6"/><circle cx="730" cy="66" r="0.8"/><circle cx="833" cy="132" r="0.6"/><circle cx="939" cy="143" r="0.6"/><circle cx="580" cy="14" r="0.7"/><circle cx="572" cy="143" r="0.6"/><circle cx="806" cy="209" r="0.7"/><circle cx="359" cy="107" r="0.8"/><circle cx="1101" cy="138" r="0.5"/><circle cx="264" cy="186" r="0.8"/><circle cx="1206" cy="96" r="0.6"/><circle cx="828" cy="39" r="0.8"/><circle cx="314" cy="86" r="0.8"/><circle cx="521" cy="64" r="0.5"/><circle cx="428" cy="238" r="0.7"/><circle cx="1220" cy="194" r="0.5"/><circle cx="1208" cy="227" r="0.7"/><circle cx="1014" cy="20" r="0.6"/><circle cx="568" cy="162" r="0.8"/><circle cx="846" cy="349" r="0.8"/><circle cx="454" cy="126" r="0.5"/><circle cx="807" cy="149" r="0.8"/><circle cx="809" cy="179" r="0.6"/><circle cx="63" cy="110" r="0.7"/><circle cx="56" cy="316" r="0.8"/><circle cx="742" cy="63" r="0.7"/><circle cx="626" cy="184" r="0.8"/><circle cx="645" cy="193" r="0.8"/><circle cx="555" cy="206" r="0.8"/><circle cx="424" cy="148" r="0.8"/><circle cx="686" cy="120" r="0.8"/><circle cx="412" cy="263" r="0.7"/><circle cx="840" cy="181" r="0.6"/><circle cx="1039" cy="137" r="0.6"/><circle cx="418" cy="150" r="0.7"/><circle cx="427" cy="211" r="0.7"/><circle cx="330" cy="242" r="0.7"/><circle cx="385" cy="246" r="0.7"/><circle cx="170" cy="90" r="0.5"/><circle cx="163" cy="254" r="0.5"/><circle cx="725" cy="49" r="0.8"/><circle cx="258" cy="236" r="0.6"/><circle cx="301" cy="117" r="0.6"/><circle cx="883" cy="199" r="0.8"/><circle cx="76" cy="268" r="0.8"/><circle cx="369" cy="133" r="0.5"/><circle cx="342" cy="201" r="0.8"/><circle cx="848" cy="314" r="0.5"/><circle cx="1113" cy="64" r="0.6"/><circle cx="863" cy="84" r="0.7"/><circle cx="325" cy="66" r="0.6"/><circle cx="824" cy="137" r="0.8"/><circle cx="603" cy="36" r="0.8"/><circle cx="96" cy="125" r="0.5"/><circle cx="658" cy="15" r="0.7"/><circle cx="1068" cy="2" r="0.8"/><circle cx="344" cy="201" r="0.7"/><circle cx="68" cy="198" r="0.8"/><circle cx="856" cy="25" r="0.6"/><circle cx="1104" cy="246" r="0.6"/><circle cx="21" cy="136" r="0.6"/><circle cx="1196" cy="203" r="0.5"/><circle cx="239" cy="89" r="0.8"/><circle cx="114" cy="286" r="0.5"/><circle cx="95" cy="153" r="0.6"/><circle cx="215" cy="271" r="0.5"/><circle cx="455" cy="150" r="0.5"/><circle cx="914" cy="74" r="0.8"/><circle cx="871" cy="116" r="0.6"/><circle cx="756" cy="289" r="0.7"/><circle cx="566" cy="119" r="0.6"/><circle cx="397" cy="53" r="0.8"/><circle cx="188" cy="46" r="0.8"/><circle cx="882" cy="360" r="0.7"/><circle cx="94" cy="145" r="0.6"/><circle cx="323" cy="139" r="0.7"/><circle cx="263" cy="137" r="0.5"/><circle cx="448" cy="49" r="0.6"/><circle cx="952" cy="160" r="0.8"/><circle cx="241" cy="34" r="0.5"/><circle cx="941" cy="43" r="0.8"/><circle cx="1160" cy="17" r="0.7"/><circle cx="710" cy="246" r="0.6"/><circle cx="1056" cy="250" r="0.7"/><circle cx="777" cy="186" r="0.8"/><circle cx="302" cy="146" r="0.6"/><circle cx="359" cy="211" r="0.7"/><circle cx="885" cy="141" r="0.5"/><circle cx="833" cy="100" r="0.7"/><circle cx="621" cy="55" r="0.6"/><circle cx="863" cy="262" r="0.6"/><circle cx="890" cy="84" r="0.8"/><circle cx="702" cy="102" r="0.7"/><circle cx="81" cy="242" r="0.8"/><circle cx="541" cy="274" r="0.6"/><circle cx="329" cy="121" r="0.6"/><circle cx="129" cy="37" r="0.5"/><circle cx="714" cy="95" r="0.6"/><circle cx="231" cy="75" r="0.8"/><circle cx="607" cy="226" r="0.8"/><circle cx="1023" cy="5" r="0.5"/><circle cx="585" cy="207" r="0.5"/><circle cx="1011" cy="199" r="0.5"/><circle cx="698" cy="197" r="0.7"/><circle cx="485" cy="101" r="0.5"/><circle cx="705" cy="301" r="0.5"/><circle cx="903" cy="230" r="0.5"/><circle cx="170" cy="230" r="0.6"/><circle cx="1139" cy="247" r="0.5"/><circle cx="294" cy="103" r="0.7"/><circle cx="1005" cy="4" r="0.8"/><circle cx="331" cy="171" r="0.5"/><circle cx="252" cy="10" r="0.5"/><circle cx="747" cy="182" r="0.6"/><circle cx="545" cy="163" r="0.7"/><circle cx="689" cy="221" r="0.7"/><circle cx="1144" cy="10" r="0.7"/><circle cx="902" cy="227" r="0.7"/><circle cx="802" cy="50" r="0.7"/><circle cx="671" cy="137" r="0.5"/><circle cx="425" cy="60" r="0.7"/><circle cx="1178" cy="80" r="0.7"/><circle cx="248" cy="189" r="0.8"/><circle cx="146" cy="116" r="0.8"/><circle cx="204" cy="39" r="0.7"/><circle cx="650" cy="102" r="0.6"/><circle cx="995" cy="182" r="0.7"/><circle cx="518" cy="13" r="0.5"/><circle cx="802" cy="161" r="0.7"/><circle cx="833" cy="9" r="0.7"/><circle cx="101" cy="26" r="0.8"/><circle cx="1073" cy="255" r="0.5"/><circle cx="263" cy="274" r="0.5"/><circle cx="690" cy="201" r="0.7"/><circle cx="150" cy="27" r="0.6"/><circle cx="323" cy="227" r="0.6"/><circle cx="774" cy="71" r="0.5"/><circle cx="1121" cy="81" r="0.5"/><circle cx="365" cy="33" r="0.6"/><circle cx="167" cy="93" r="0.8"/><circle cx="99" cy="273" r="0.5"/><circle cx="473" cy="132" r="0.5"/><circle cx="572" cy="217" r="0.5"/><circle cx="124" cy="121" r="0.7"/><circle cx="949" cy="64" r="0.8"/><circle cx="815" cy="103" r="0.6"/><circle cx="875" cy="221" r="0.8"/><circle cx="510" cy="44" r="0.8"/><circle cx="466" cy="62" r="0.7"/><circle cx="176" cy="3" r="0.8"/><circle cx="1172" cy="16" r="0.5"/><circle cx="423" cy="123" r="0.8"/><circle cx="597" cy="156" r="0.6"/><circle cx="726" cy="140" r="0.5"/><circle cx="930" cy="136" r="0.8"/><circle cx="1192" cy="280" r="0.5"/><circle cx="758" cy="155" r="0.7"/><circle cx="1080" cy="71" r="0.6"/><circle cx="965" cy="127" r="0.7"/><circle cx="495" cy="122" r="0.6"/><circle cx="416" cy="85" r="0.6"/><circle cx="772" cy="21" r="0.5"/><circle cx="1167" cy="144" r="0.5"/><circle cx="1109" cy="100" r="0.8"/><circle cx="80" cy="253" r="0.8"/><circle cx="462" cy="23" r="0.8"/><circle cx="980" cy="144" r="0.7"/><circle cx="1220" cy="299" r="0.6"/><circle cx="305" cy="93" r="0.7"/><circle cx="658" cy="216" r="0.6"/><circle cx="450" cy="45" r="0.5"/><circle cx="289" cy="61" r="0.8"/><circle cx="687" cy="74" r="0.6"/><circle cx="1012" cy="243" r="0.5"/><circle cx="446" cy="56" r="0.8"/><circle cx="1078" cy="204" r="0.8"/><circle cx="845" cy="76" r="0.8"/><circle cx="842" cy="17" r="0.5"/><circle cx="579" cy="85" r="0.6"/><circle cx="517" cy="157" r="0.6"/><circle cx="214" cy="168" r="0.5"/><circle cx="1300" cy="54" r="0.6"/><circle cx="893" cy="62" r="0.7"/><circle cx="1172" cy="117" r="0.8"/><circle cx="1054" cy="194" r="0.7"/><circle cx="655" cy="5" r="0.7"/><circle cx="40" cy="202" r="0.8"/><circle cx="1137" cy="124" r="0.6"/><circle cx="36" cy="145" r="0.7"/><circle cx="562" cy="192" r="0.5"/><circle cx="526" cy="131" r="0.7"/><circle cx="61" cy="112" r="0.6"/><circle cx="170" cy="308" r="0.8"/><circle cx="1006" cy="183" r="0.8"/><circle cx="1285" cy="23" r="0.5"/><circle cx="6" cy="22" r="0.6"/><circle cx="1196" cy="84" r="0.7"/><circle cx="726" cy="122" r="0.5"/><circle cx="863" cy="74" r="0.6"/><circle cx="869" cy="24" r="0.8"/><circle cx="784" cy="103" r="0.5"/><circle cx="381" cy="85" r="0.5"/><circle cx="386" cy="46" r="0.8"/><circle cx="287" cy="159" r="0.7"/><circle cx="547" cy="183" r="0.6"/><circle cx="114" cy="103" r="0.8"/><circle cx="495" cy="36" r="0.6"/><circle cx="837" cy="93" r="0.6"/><circle cx="180" cy="100" r="0.8"/><circle cx="955" cy="179" r="0.5"/><circle cx="319" cy="176" r="0.7"/><circle cx="520" cy="36" r="0.8"/><circle cx="737" cy="289" r="0.6"/><circle cx="1172" cy="115" r="0.7"/><circle cx="119" cy="170" r="0.5"/><circle cx="43" cy="225" r="0.5"/><circle cx="974" cy="79" r="0.8"/><circle cx="23" cy="78" r="0.7"/><circle cx="1222" cy="96" r="0.5"/><circle cx="1135" cy="130" r="0.8"/><circle cx="1059" cy="142" r="0.8"/><circle cx="890" cy="81" r="0.7"/><circle cx="1095" cy="267" r="0.6"/><circle cx="119" cy="322" r="0.5"/><circle cx="15" cy="21" r="0.6"/><circle cx="191" cy="157" r="0.8"/><circle cx="12" cy="164" r="0.5"/><circle cx="209" cy="115" r="0.8"/><circle cx="1000" cy="52" r="0.8"/><circle cx="211" cy="165" r="0.6"/><circle cx="245" cy="136" r="0.7"/><circle cx="1257" cy="76" r="0.5"/><circle cx="833" cy="293" r="0.8"/><circle cx="26" cy="183" r="0.8"/><circle cx="91" cy="207" r="0.8"/><circle cx="157" cy="123" r="0.7"/><circle cx="999" cy="235" r="0.8"/><circle cx="596" cy="84" r="0.5"/><circle cx="1131" cy="63" r="0.7"/><circle cx="700" cy="94" r="0.7"/><circle cx="1188" cy="74" r="0.7"/><circle cx="784" cy="65" r="0.6"/><circle cx="1256" cy="170" r="0.5"/><circle cx="58" cy="190" r="0.8"/><circle cx="169" cy="144" r="0.6"/><circle cx="683" cy="321" r="0.6"/><circle cx="787" cy="119" r="0.8"/><circle cx="258" cy="78" r="0.7"/><circle cx="1003" cy="236" r="0.7"/><circle cx="173" cy="191" r="0.5"/><circle cx="1062" cy="55" r="0.6"/><circle cx="1251" cy="73" r="0.6"/><circle cx="419" cy="97" r="0.6"/><circle cx="1165" cy="66" r="0.6"/><circle cx="1050" cy="121" r="0.7"/><circle cx="152" cy="127" r="0.6"/><circle cx="208" cy="26" r="0.7"/><circle cx="300" cy="93" r="0.8"/><circle cx="854" cy="85" r="0.6"/><circle cx="495" cy="77" r="0.6"/><circle cx="750" cy="133" r="0.5"/><circle cx="529" cy="6" r="0.6"/><circle cx="798" cy="38" r="0.7"/><circle cx="150" cy="244" r="0.8"/><circle cx="94" cy="60" r="0.6"/><circle cx="398" cy="91" r="0.8"/><circle cx="741" cy="184" r="0.5"/><circle cx="70" cy="221" r="0.6"/><circle cx="367" cy="140" r="0.7"/><circle cx="1089" cy="114" r="0.5"/><circle cx="1040" cy="64" r="0.8"/><circle cx="1031" cy="196" r="0.5"/><circle cx="1135" cy="135" r="0.7"/><circle cx="29" cy="38" r="0.5"/><circle cx="21" cy="177" r="0.5"/><circle cx="270" cy="93" r="0.6"/><circle cx="14" cy="295" r="0.7"/><circle cx="1105" cy="206" r="0.8"/><circle cx="1171" cy="210" r="0.5"/><circle cx="659" cy="22" r="0.7"/><circle cx="1102" cy="96" r="0.8"/><circle cx="1287" cy="74" r="0.6"/><circle cx="751" cy="3" r="0.8"/><circle cx="961" cy="74" r="0.6"/><circle cx="212" cy="107" r="0.5"/><circle cx="799" cy="21" r="0.5"/><circle cx="1285" cy="127" r="0.7"/><circle cx="881" cy="135" r="0.7"/><circle cx="575" cy="98" r="0.8"/><circle cx="489" cy="8" r="0.5"/><circle cx="552" cy="244" r="0.5"/><circle cx="1023" cy="56" r="0.7"/><circle cx="1248" cy="129" r="0.5"/><circle cx="1025" cy="92" r="0.6"/><circle cx="895" cy="216" r="0.6"/><circle cx="926" cy="92" r="0.7"/><circle cx="928" cy="24" r="0.7"/><circle cx="603" cy="137" r="0.5"/><circle cx="226" cy="58" r="0.5"/><circle cx="872" cy="282" r="0.7"/><circle cx="698" cy="7" r="0.5"/><circle cx="760" cy="100" r="0.5"/><circle cx="1174" cy="217" r="0.6"/><circle cx="1039" cy="11" r="0.7"/><circle cx="421" cy="251" r="0.5"/><circle cx="1118" cy="82" r="0.7"/><circle cx="21" cy="262" r="0.5"/><circle cx="886" cy="26" r="0.5"/><circle cx="143" cy="130" r="0.6"/><circle cx="719" cy="55" r="0.8"/><circle cx="861" cy="247" r="0.6"/><circle cx="153" cy="312" r="0.6"/><circle cx="394" cy="185" r="0.8"/><circle cx="857" cy="245" r="0.5"/><circle cx="541" cy="328" r="0.7"/><circle cx="771" cy="57" r="0.6"/><circle cx="455" cy="89" r="0.5"/><circle cx="996" cy="194" r="0.6"/><circle cx="261" cy="48" r="0.7"/><circle cx="480" cy="42" r="0.7"/><circle cx="203" cy="189" r="0.5"/><circle cx="784" cy="135" r="0.6"/><circle cx="1127" cy="199" r="0.7"/><circle cx="183" cy="39" r="0.6"/><circle cx="149" cy="136" r="0.6"/><circle cx="796" cy="85" r="0.6"/><circle cx="458" cy="215" r="0.5"/><circle cx="728" cy="252" r="0.5"/><circle cx="825" cy="88" r="0.8"/><circle cx="217" cy="275" r="0.7"/><circle cx="408" cy="244" r="0.5"/><circle cx="1213" cy="44" r="0.5"/><circle cx="1232" cy="226" r="0.6"/><circle cx="186" cy="102" r="0.7"/><circle cx="833" cy="181" r="0.5"/><circle cx="462" cy="32" r="0.5"/><circle cx="1226" cy="307" r="0.6"/><circle cx="710" cy="160" r="0.8"/><circle cx="1204" cy="86" r="0.7"/><circle cx="1024" cy="8" r="0.7"/><circle cx="571" cy="306" r="0.6"/><circle cx="218" cy="166" r="0.7"/><circle cx="365" cy="155" r="0.6"/><circle cx="402" cy="80" r="0.6"/><circle cx="290" cy="117" r="0.7"/><circle cx="425" cy="114" r="0.7"/><circle cx="193" cy="184" r="0.7"/><circle cx="1005" cy="48" r="0.6"/><circle cx="211" cy="56" r="0.8"/><circle cx="227" cy="207" r="0.5"/><circle cx="691" cy="80" r="0.7"/><circle cx="1054" cy="242" r="0.5"/><circle cx="1178" cy="99" r="0.5"/><circle cx="5" cy="20" r="0.6"/><circle cx="1166" cy="164" r="0.5"/><circle cx="1073" cy="260" r="0.7"/><circle cx="1203" cy="210" r="0.8"/><circle cx="122" cy="194" r="0.7"/><circle cx="1103" cy="70" r="0.6"/><circle cx="734" cy="74" r="0.8"/><circle cx="1221" cy="160" r="0.5"/><circle cx="189" cy="28" r="0.5"/><circle cx="90" cy="137" r="0.7"/><circle cx="95" cy="212" r="0.5"/><circle cx="1139" cy="48" r="0.7"/><circle cx="636" cy="25" r="0.7"/><circle cx="543" cy="185" r="0.7"/><circle cx="1142" cy="284" r="0.5"/><circle cx="359" cy="205" r="0.6"/><circle cx="1119" cy="105" r="0.5"/><circle cx="1108" cy="177" r="0.8"/><circle cx="726" cy="124" r="0.7"/><circle cx="1005" cy="252" r="0.5"/><circle cx="16" cy="156" r="0.5"/><circle cx="86" cy="125" r="0.5"/><circle cx="1090" cy="87" r="0.5"/><circle cx="371" cy="123" r="0.8"/><circle cx="888" cy="271" r="0.5"/><circle cx="872" cy="285" r="0.5"/><circle cx="110" cy="2" r="0.5"/><circle cx="659" cy="217" r="0.7"/><circle cx="762" cy="239" r="0.6"/><circle cx="61" cy="4" r="0.5"/><circle cx="821" cy="110" r="0.5"/><circle cx="388" cy="149" r="0.5"/><circle cx="932" cy="280" r="0.5"/><circle cx="1004" cy="194" r="0.7"/><circle cx="206" cy="164" r="0.7"/><circle cx="701" cy="100" r="0.7"/><circle cx="1029" cy="166" r="0.8"/><circle cx="1234" cy="11" r="0.7"/><circle cx="1186" cy="307" r="0.8"/><circle cx="1254" cy="59" r="0.6"/><circle cx="354" cy="99" r="0.6"/><circle cx="1259" cy="61" r="0.8"/><circle cx="850" cy="37" r="0.6"/><circle cx="293" cy="129" r="0.7"/><circle cx="333" cy="129" r="0.5"/><circle cx="821" cy="129" r="0.5"/><circle cx="1194" cy="233" r="0.8"/><circle cx="896" cy="153" r="0.7"/><circle cx="702" cy="139" r="0.7"/><circle cx="686" cy="184" r="0.7"/><circle cx="784" cy="121" r="0.7"/><circle cx="200" cy="342" r="0.6"/><circle cx="190" cy="119" r="0.5"/><circle cx="477" cy="7" r="0.5"/><circle cx="728" cy="91" r="0.7"/><circle cx="216" cy="165" r="0.6"/><circle cx="964" cy="92" r="0.8"/><circle cx="834" cy="201" r="0.6"/><circle cx="75" cy="34" r="0.7"/><circle cx="310" cy="74" r="0.8"/><circle cx="1285" cy="321" r="0.7"/><circle cx="13" cy="89" r="0.5"/><circle cx="1124" cy="200" r="0.6"/><circle cx="946" cy="18" r="0.8"/><circle cx="847" cy="112" r="0.8"/><circle cx="242" cy="43" r="0.8"/><circle cx="636" cy="72" r="0.8"/><circle cx="94" cy="24" r="0.8"/><circle cx="896" cy="291" r="0.6"/><circle cx="688" cy="37" r="0.7"/><circle cx="605" cy="191" r="0.8"/><circle cx="739" cy="46" r="0.5"/><circle cx="199" cy="115" r="0.8"/><circle cx="173" cy="117" r="0.8"/><circle cx="288" cy="214" r="0.7"/><circle cx="608" cy="199" r="0.5"/><circle cx="439" cy="167" r="0.7"/><circle cx="421" cy="119" r="0.8"/><circle cx="1022" cy="211" r="0.8"/><circle cx="15" cy="149" r="0.6"/><circle cx="801" cy="130" r="0.7"/><circle cx="846" cy="298" r="0.8"/><circle cx="651" cy="99" r="0.5"/><circle cx="244" cy="183" r="0.5"/><circle cx="204" cy="225" r="0.5"/><circle cx="973" cy="245" r="0.8"/><circle cx="957" cy="28" r="0.6"/><circle cx="131" cy="120" r="0.7"/><circle cx="1034" cy="71" r="0.8"/><circle cx="1154" cy="322" r="0.6"/><circle cx="172" cy="17" r="0.8"/><circle cx="402" cy="70" r="0.6"/><circle cx="59" cy="356" r="0.7"/><circle cx="405" cy="232" r="0.6"/><circle cx="617" cy="64" r="0.8"/><circle cx="16" cy="192" r="0.6"/><circle cx="814" cy="80" r="0.5"/><circle cx="177" cy="18" r="0.7"/><circle cx="1136" cy="108" r="0.8"/><circle cx="571" cy="111" r="0.5"/><circle cx="426" cy="10" r="0.5"/><circle cx="261" cy="204" r="0.6"/><circle cx="797" cy="71" r="0.5"/><circle cx="1272" cy="255" r="0.8"/><circle cx="1060" cy="74" r="0.8"/><circle cx="309" cy="247" r="0.6"/><circle cx="1038" cy="51" r="0.7"/><circle cx="338" cy="190" r="0.5"/><circle cx="597" cy="62" r="0.5"/><circle cx="233" cy="202" r="0.5"/><circle cx="227" cy="81" r="0.7"/><circle cx="49" cy="299" r="0.6"/><circle cx="964" cy="77" r="0.7"/><circle cx="1145" cy="205" r="0.5"/><circle cx="542" cy="171" r="0.5"/><circle cx="500" cy="111" r="0.7"/><circle cx="176" cy="37" r="0.5"/><circle cx="136" cy="36" r="0.8"/><circle cx="515" cy="171" r="0.5"/><circle cx="1148" cy="105" r="0.8"/><circle cx="12" cy="210" r="0.8"/><circle cx="1297" cy="302" r="0.5"/><circle cx="47" cy="221" r="0.6"/><circle cx="948" cy="160" r="0.7"/><circle cx="1225" cy="113" r="0.7"/><circle cx="929" cy="122" r="0.7"/><circle cx="1100" cy="85" r="0.7"/><circle cx="404" cy="31" r="0.5"/><circle cx="886" cy="186" r="0.7"/><circle cx="1218" cy="200" r="0.6"/><circle cx="964" cy="56" r="0.8"/><circle cx="1033" cy="175" r="0.6"/><circle cx="864" cy="319" r="0.6"/><circle cx="180" cy="198" r="0.6"/><circle cx="942" cy="92" r="0.7"/><circle cx="729" cy="135" r="0.5"/><circle cx="639" cy="203" r="0.5"/><circle cx="508" cy="238" r="0.5"/><circle cx="1093" cy="325" r="0.7"/><circle cx="1034" cy="61" r="0.6"/><circle cx="123" cy="288" r="0.5"/><circle cx="1167" cy="123" r="0.7"/><circle cx="943" cy="153" r="0.6"/><circle cx="973" cy="41" r="0.7"/><circle cx="9" cy="302" r="0.8"/><circle cx="579" cy="222" r="0.6"/><circle cx="1013" cy="16" r="0.8"/><circle cx="1217" cy="62" r="0.8"/><circle cx="726" cy="130" r="0.8"/><circle cx="1170" cy="304" r="0.6"/><circle cx="1078" cy="44" r="0.8"/><circle cx="216" cy="304" r="0.6"/><circle cx="64" cy="73" r="0.6"/><circle cx="919" cy="102" r="0.6"/><circle cx="977" cy="175" r="0.5"/><circle cx="913" cy="57" r="0.5"/><circle cx="1190" cy="207" r="0.7"/><circle cx="58" cy="152" r="0.8"/><circle cx="1032" cy="168" r="0.7"/><circle cx="480" cy="224" r="0.6"/><circle cx="925" cy="204" r="0.6"/><circle cx="267" cy="169" r="0.7"/><circle cx="1169" cy="80" r="0.7"/><circle cx="1188" cy="89" r="0.6"/><circle cx="541" cy="70" r="0.6"/><circle cx="459" cy="94" r="0.5"/><circle cx="538" cy="67" r="0.5"/><circle cx="100" cy="71" r="0.6"/><circle cx="643" cy="52" r="0.8"/><circle cx="895" cy="313" r="0.5"/><circle cx="534" cy="33" r="0.8"/><circle cx="507" cy="244" r="0.7"/><circle cx="520" cy="58" r="0.6"/><circle cx="1125" cy="13" r="0.7"/><circle cx="950" cy="126" r="0.7"/><circle cx="1046" cy="20" r="0.7"/><circle cx="1263" cy="9" r="0.8"/><circle cx="112" cy="357" r="0.8"/><circle cx="494" cy="274" r="0.7"/><circle cx="660" cy="108" r="0.7"/><circle cx="1104" cy="88" r="0.8"/><circle cx="97" cy="79" r="0.8"/><circle cx="672" cy="17" r="0.7"/><circle cx="403" cy="273" r="0.6"/><circle cx="1028" cy="321" r="0.6"/><circle cx="937" cy="233" r="0.8"/><circle cx="154" cy="150" r="0.7"/><circle cx="746" cy="65" r="0.7"/><circle cx="1104" cy="237" r="0.5"/><circle cx="64" cy="88" r="0.8"/><circle cx="331" cy="260" r="0.6"/><circle cx="19" cy="204" r="0.6"/><circle cx="925" cy="265" r="0.8"/><circle cx="1229" cy="179" r="0.8"/><circle cx="1119" cy="362" r="0.6"/><circle cx="192" cy="165" r="0.6"/><circle cx="575" cy="109" r="0.7"/><circle cx="409" cy="128" r="0.7"/><circle cx="78" cy="215" r="0.5"/><circle cx="395" cy="230" r="0.7"/><circle cx="1281" cy="224" r="0.7"/><circle cx="293" cy="288" r="0.5"/><circle cx="834" cy="217" r="0.7"/><circle cx="1099" cy="99" r="0.5"/><circle cx="858" cy="93" r="0.5"/><circle cx="1086" cy="223" r="0.7"/><circle cx="1293" cy="210" r="0.8"/><circle cx="713" cy="299" r="0.7"/><circle cx="662" cy="31" r="0.6"/><circle cx="529" cy="208" r="0.7"/><circle cx="767" cy="265" r="0.8"/><circle cx="879" cy="36" r="0.8"/><circle cx="883" cy="24" r="0.5"/><circle cx="124" cy="46" r="0.5"/><circle cx="377" cy="22" r="0.6"/><circle cx="495" cy="167" r="0.5"/><circle cx="219" cy="13" r="0.7"/><circle cx="37" cy="39" r="0.5"/><circle cx="679" cy="90" r="0.7"/><circle cx="955" cy="28" r="0.7"/><circle cx="1108" cy="213" r="0.5"/><circle cx="407" cy="40" r="0.6"/><circle cx="1099" cy="271" r="0.7"/><circle cx="876" cy="302" r="0.8"/><circle cx="182" cy="110" r="0.6"/><circle cx="210" cy="275" r="0.7"/><circle cx="352" cy="20" r="0.7"/><circle cx="429" cy="186" r="0.6"/><circle cx="575" cy="301" r="0.5"/><circle cx="1229" cy="301" r="0.7"/><circle cx="426" cy="63" r="0.7"/><circle cx="66" cy="314" r="0.8"/><circle cx="515" cy="103" r="0.5"/><circle cx="1099" cy="147" r="0.7"/><circle cx="584" cy="48" r="0.5"/><circle cx="708" cy="236" r="0.7"/><circle cx="782" cy="195" r="0.5"/><circle cx="1225" cy="21" r="0.7"/><circle cx="899" cy="61" r="0.7"/><circle cx="1171" cy="232" r="0.8"/><circle cx="25" cy="220" r="0.5"/><circle cx="863" cy="200" r="0.5"/><circle cx="517" cy="45" r="0.8"/><circle cx="1109" cy="242" r="0.5"/><circle cx="163" cy="207" r="0.8"/><circle cx="823" cy="80" r="0.5"/><circle cx="1229" cy="46" r="0.5"/><circle cx="404" cy="142" r="0.6"/><circle cx="730" cy="83" r="0.8"/><circle cx="942" cy="95" r="0.6"/><circle cx="36" cy="255" r="0.7"/><circle cx="1058" cy="54" r="0.8"/><circle cx="1242" cy="348" r="0.7"/><circle cx="1105" cy="177" r="0.8"/><circle cx="814" cy="127" r="0.8"/><circle cx="1000" cy="208" r="0.8"/><circle cx="627" cy="214" r="0.5"/><circle cx="1128" cy="205" r="0.6"/><circle cx="146" cy="15" r="0.8"/><circle cx="1032" cy="218" r="0.5"/><circle cx="1208" cy="335" r="0.5"/><circle cx="1105" cy="203" r="0.7"/><circle cx="121" cy="114" r="0.7"/><circle cx="555" cy="87" r="0.7"/><circle cx="402" cy="4" r="0.5"/><circle cx="700" cy="65" r="0.5"/><circle cx="1092" cy="98" r="0.6"/><circle cx="1293" cy="73" r="0.6"/><circle cx="157" cy="108" r="0.5"/><circle cx="1170" cy="23" r="0.8"/><circle cx="1008" cy="152" r="0.7"/><circle cx="1091" cy="121" r="0.5"/><circle cx="0" cy="73" r="0.7"/><circle cx="1022" cy="21" r="0.5"/><circle cx="302" cy="61" r="0.6"/><circle cx="1078" cy="222" r="0.5"/><circle cx="1029" cy="40" r="0.7"/><circle cx="1051" cy="151" r="0.6"/><circle cx="119" cy="92" r="0.7"/><circle cx="44" cy="248" r="0.6"/><circle cx="1254" cy="28" r="0.5"/><circle cx="146" cy="211" r="0.5"/><circle cx="936" cy="196" r="0.5"/><circle cx="718" cy="8" r="0.6"/><circle cx="482" cy="172" r="0.7"/><circle cx="1094" cy="71" r="0.8"/><circle cx="1234" cy="289" r="0.6"/><circle cx="1112" cy="16" r="0.6"/><circle cx="488" cy="221" r="0.7"/><circle cx="112" cy="25" r="0.5"/><circle cx="483" cy="167" r="0.6"/><circle cx="542" cy="227" r="0.6"/><circle cx="580" cy="53" r="0.7"/><circle cx="1036" cy="201" r="0.7"/><circle cx="749" cy="40" r="0.5"/><circle cx="1227" cy="188" r="0.5"/><circle cx="1147" cy="133" r="0.7"/><circle cx="164" cy="321" r="0.5"/><circle cx="979" cy="165" r="0.6"/><circle cx="549" cy="89" r="0.6"/><circle cx="877" cy="225" r="0.7"/><circle cx="309" cy="130" r="0.6"/><circle cx="70" cy="61" r="0.5"/><circle cx="536" cy="202" r="0.5"/><circle cx="845" cy="215" r="0.7"/><circle cx="542" cy="24" r="0.7"/><circle cx="136" cy="99" r="0.8"/><circle cx="567" cy="188" r="0.8"/><circle cx="1172" cy="139" r="0.8"/><circle cx="790" cy="30" r="0.6"/><circle cx="1031" cy="216" r="0.6"/><circle cx="591" cy="133" r="0.8"/><circle cx="1036" cy="28" r="0.5"/><circle cx="505" cy="173" r="0.7"/><circle cx="1146" cy="251" r="0.6"/><circle cx="289" cy="86" r="0.8"/><circle cx="349" cy="193" r="0.8"/><circle cx="355" cy="27" r="0.5"/><circle cx="670" cy="175" r="0.5"/><circle cx="320" cy="83" r="0.8"/><circle cx="736" cy="57" r="0.7"/><circle cx="1287" cy="221" r="0.7"/><circle cx="1" cy="44" r="0.8"/><circle cx="292" cy="202" r="0.6"/><circle cx="895" cy="95" r="0.7"/><circle cx="582" cy="173" r="0.6"/><circle cx="820" cy="156" r="0.6"/><circle cx="314" cy="326" r="0.8"/><circle cx="831" cy="260" r="0.8"/><circle cx="797" cy="243" r="0.8"/><circle cx="427" cy="92" r="0.7"/><circle cx="9" cy="130" r="0.8"/><circle cx="19" cy="102" r="0.6"/><circle cx="62" cy="120" r="0.6"/><circle cx="653" cy="77" r="0.5"/><circle cx="295" cy="214" r="0.5"/><circle cx="767" cy="141" r="0.5"/><circle cx="1223" cy="28" r="0.8"/><circle cx="38" cy="284" r="0.7"/><circle cx="183" cy="188" r="0.7"/><circle cx="1214" cy="7" r="0.8"/><circle cx="814" cy="100" r="0.5"/><circle cx="302" cy="171" r="0.5"/><circle cx="1246" cy="161" r="0.6"/><circle cx="17" cy="244" r="0.5"/><circle cx="1229" cy="222" r="0.5"/><circle cx="517" cy="255" r="0.5"/><circle cx="794" cy="165" r="0.6"/><circle cx="61" cy="46" r="0.5"/><circle cx="967" cy="129" r="0.7"/><circle cx="2" cy="152" r="0.8"/><circle cx="506" cy="321" r="0.6"/><circle cx="369" cy="19" r="0.7"/><circle cx="994" cy="190" r="0.7"/><circle cx="201" cy="10" r="0.6"/><circle cx="24" cy="39" r="0.6"/><circle cx="1129" cy="329" r="0.6"/><circle cx="1082" cy="94" r="0.6"/><circle cx="338" cy="207" r="0.5"/><circle cx="253" cy="158" r="0.5"/></g><g opacity="0.22"><circle cx="605" cy="204" r="0.7"/><circle cx="618" cy="246" r="0.5"/><circle cx="850" cy="247" r="0.7"/><circle cx="424" cy="237" r="0.55"/><circle cx="1092" cy="284" r="0.55"/><circle cx="39" cy="226" r="0.55"/><circle cx="1" cy="85" r="0.6"/><circle cx="985" cy="49" r="0.45"/><circle cx="1000" cy="169" r="0.5"/><circle cx="750" cy="19" r="0.45"/><circle cx="1004" cy="133" r="0.45"/><circle cx="271" cy="255" r="0.7"/><circle cx="893" cy="157" r="0.45"/><circle cx="135" cy="17" r="0.6"/><circle cx="381" cy="72" r="0.5"/><circle cx="350" cy="179" r="0.55"/><circle cx="760" cy="58" r="0.55"/><circle cx="1228" cy="14" r="0.6"/><circle cx="493" cy="7" r="0.45"/><circle cx="1209" cy="200" r="0.55"/><circle cx="758" cy="128" r="0.45"/><circle cx="220" cy="181" r="0.6"/><circle cx="790" cy="272" r="0.7"/><circle cx="25" cy="56" r="0.55"/><circle cx="634" cy="13" r="0.45"/><circle cx="225" cy="135" r="0.5"/><circle cx="396" cy="58" r="0.6"/><circle cx="350" cy="190" r="0.6"/><circle cx="682" cy="45" r="0.55"/><circle cx="168" cy="312" r="0.5"/><circle cx="15" cy="115" r="0.6"/><circle cx="411" cy="127" r="0.5"/><circle cx="654" cy="275" r="0.45"/><circle cx="1177" cy="194" r="0.5"/><circle cx="124" cy="27" r="0.45"/><circle cx="425" cy="188" r="0.7"/><circle cx="485" cy="254" r="0.6"/><circle cx="254" cy="68" r="0.45"/><circle cx="995" cy="163" r="0.55"/><circle cx="842" cy="6" r="0.55"/><circle cx="776" cy="173" r="0.6"/><circle cx="823" cy="165" r="0.55"/><circle cx="1037" cy="91" r="0.5"/><circle cx="265" cy="23" r="0.6"/><circle cx="178" cy="117" r="0.7"/><circle cx="1142" cy="18" r="0.6"/><circle cx="35" cy="17" r="0.45"/><circle cx="972" cy="157" r="0.7"/><circle cx="1197" cy="172" r="0.55"/><circle cx="102" cy="35" r="0.6"/><circle cx="389" cy="311" r="0.7"/><circle cx="1146" cy="89" r="0.45"/><circle cx="1163" cy="101" r="0.55"/><circle cx="960" cy="149" r="0.7"/><circle cx="1055" cy="90" r="0.55"/><circle cx="1043" cy="170" r="0.5"/><circle cx="1288" cy="151" r="0.6"/><circle cx="688" cy="111" r="0.45"/><circle cx="932" cy="239" r="0.55"/><circle cx="1177" cy="181" r="0.5"/><circle cx="695" cy="62" r="0.5"/><circle cx="1115" cy="123" r="0.45"/><circle cx="1016" cy="177" r="0.6"/><circle cx="404" cy="32" r="0.45"/><circle cx="468" cy="275" r="0.6"/><circle cx="971" cy="314" r="0.6"/><circle cx="925" cy="191" r="0.45"/><circle cx="113" cy="77" r="0.55"/><circle cx="431" cy="331" r="0.45"/><circle cx="171" cy="253" r="0.45"/><circle cx="1088" cy="238" r="0.5"/><circle cx="431" cy="166" r="0.55"/><circle cx="791" cy="9" r="0.6"/><circle cx="602" cy="51" r="0.7"/><circle cx="891" cy="147" r="0.5"/><circle cx="241" cy="220" r="0.5"/><circle cx="992" cy="65" r="0.7"/><circle cx="524" cy="200" r="0.7"/><circle cx="1187" cy="227" r="0.6"/><circle cx="1179" cy="120" r="0.6"/><circle cx="771" cy="30" r="0.7"/><circle cx="479" cy="219" r="0.6"/><circle cx="385" cy="292" r="0.6"/><circle cx="463" cy="235" r="0.55"/><circle cx="1270" cy="190" r="0.45"/><circle cx="540" cy="69" r="0.5"/><circle cx="1192" cy="31" r="0.7"/><circle cx="370" cy="102" r="0.55"/><circle cx="197" cy="9" r="0.6"/><circle cx="940" cy="343" r="0.5"/><circle cx="309" cy="60" r="0.55"/><circle cx="79" cy="165" r="0.45"/><circle cx="511" cy="121" r="0.45"/><circle cx="52" cy="162" r="0.55"/><circle cx="495" cy="313" r="0.5"/><circle cx="614" cy="197" r="0.6"/><circle cx="178" cy="98" r="0.55"/><circle cx="512" cy="97" r="0.7"/><circle cx="166" cy="85" r="0.5"/><circle cx="672" cy="220" r="0.6"/><circle cx="178" cy="208" r="0.55"/><circle cx="448" cy="88" r="0.6"/><circle cx="822" cy="38" r="0.45"/><circle cx="914" cy="90" r="0.5"/><circle cx="622" cy="104" r="0.45"/><circle cx="71" cy="199" r="0.55"/><circle cx="1152" cy="31" r="0.55"/><circle cx="735" cy="106" r="0.6"/><circle cx="500" cy="138" r="0.5"/><circle cx="496" cy="364" r="0.7"/><circle cx="355" cy="199" r="0.7"/><circle cx="250" cy="93" r="0.45"/><circle cx="135" cy="10" r="0.6"/><circle cx="52" cy="249" r="0.55"/><circle cx="163" cy="152" r="0.5"/><circle cx="927" cy="49" r="0.7"/><circle cx="1292" cy="50" r="0.7"/><circle cx="1112" cy="70" r="0.55"/><circle cx="282" cy="115" r="0.45"/><circle cx="562" cy="62" r="0.7"/><circle cx="187" cy="251" r="0.6"/><circle cx="261" cy="221" r="0.45"/><circle cx="1160" cy="125" r="0.6"/><circle cx="1235" cy="162" r="0.7"/><circle cx="31" cy="232" r="0.55"/><circle cx="460" cy="113" r="0.45"/><circle cx="344" cy="87" r="0.5"/><circle cx="710" cy="273" r="0.5"/><circle cx="485" cy="75" r="0.45"/><circle cx="286" cy="164" r="0.55"/><circle cx="1184" cy="24" r="0.6"/><circle cx="652" cy="151" r="0.45"/><circle cx="687" cy="182" r="0.45"/><circle cx="245" cy="189" r="0.5"/><circle cx="185" cy="48" r="0.55"/><circle cx="1140" cy="31" r="0.7"/><circle cx="1172" cy="31" r="0.55"/><circle cx="271" cy="85" r="0.7"/><circle cx="399" cy="5" r="0.55"/><circle cx="1132" cy="308" r="0.55"/><circle cx="102" cy="260" r="0.5"/><circle cx="966" cy="241" r="0.6"/><circle cx="535" cy="55" r="0.6"/><circle cx="710" cy="42" r="0.55"/><circle cx="868" cy="64" r="0.7"/><circle cx="601" cy="162" r="0.7"/><circle cx="272" cy="149" r="0.45"/><circle cx="563" cy="64" r="0.45"/><circle cx="862" cy="205" r="0.5"/><circle cx="321" cy="167" r="0.6"/><circle cx="204" cy="213" r="0.55"/><circle cx="1008" cy="157" r="0.7"/><circle cx="813" cy="108" r="0.45"/><circle cx="558" cy="192" r="0.6"/><circle cx="152" cy="126" r="0.6"/><circle cx="712" cy="161" r="0.55"/><circle cx="1249" cy="148" r="0.55"/><circle cx="273" cy="306" r="0.45"/><circle cx="671" cy="302" r="0.55"/><circle cx="754" cy="4" r="0.45"/><circle cx="224" cy="35" r="0.6"/><circle cx="148" cy="347" r="0.5"/><circle cx="1091" cy="51" r="0.45"/><circle cx="739" cy="221" r="0.55"/><circle cx="1047" cy="41" r="0.5"/><circle cx="372" cy="225" r="0.45"/><circle cx="1068" cy="219" r="0.5"/><circle cx="1285" cy="125" r="0.45"/><circle cx="649" cy="81" r="0.6"/><circle cx="1116" cy="374" r="0.7"/><circle cx="411" cy="69" r="0.45"/><circle cx="1083" cy="164" r="0.45"/><circle cx="1168" cy="98" r="0.55"/><circle cx="228" cy="62" r="0.55"/><circle cx="102" cy="306" r="0.6"/><circle cx="724" cy="57" r="0.45"/><circle cx="619" cy="328" r="0.6"/><circle cx="1240" cy="171" r="0.5"/><circle cx="160" cy="130" r="0.7"/><circle cx="635" cy="18" r="0.45"/><circle cx="796" cy="27" r="0.5"/><circle cx="894" cy="102" r="0.5"/><circle cx="1214" cy="127" r="0.55"/><circle cx="369" cy="41" r="0.7"/><circle cx="576" cy="36" r="0.6"/><circle cx="1042" cy="72" r="0.5"/><circle cx="338" cy="117" r="0.7"/><circle cx="810" cy="52" r="0.6"/><circle cx="640" cy="155" r="0.5"/><circle cx="804" cy="49" r="0.6"/><circle cx="363" cy="210" r="0.7"/><circle cx="539" cy="164" r="0.45"/><circle cx="1232" cy="235" r="0.45"/><circle cx="246" cy="307" r="0.7"/><circle cx="1215" cy="109" r="0.45"/><circle cx="594" cy="174" r="0.55"/><circle cx="1155" cy="24" r="0.7"/><circle cx="800" cy="20" r="0.45"/><circle cx="583" cy="148" r="0.55"/><circle cx="869" cy="175" r="0.45"/><circle cx="564" cy="200" r="0.6"/><circle cx="442" cy="147" r="0.7"/><circle cx="357" cy="228" r="0.5"/><circle cx="879" cy="41" r="0.7"/><circle cx="458" cy="304" r="0.5"/><circle cx="356" cy="145" r="0.55"/><circle cx="325" cy="73" r="0.45"/><circle cx="909" cy="136" r="0.6"/><circle cx="1134" cy="92" r="0.45"/><circle cx="884" cy="377" r="0.7"/><circle cx="1121" cy="27" r="0.7"/><circle cx="70" cy="312" r="0.5"/><circle cx="468" cy="101" r="0.45"/><circle cx="474" cy="168" r="0.5"/><circle cx="1100" cy="189" r="0.7"/><circle cx="1040" cy="179" r="0.6"/><circle cx="723" cy="17" r="0.45"/><circle cx="282" cy="180" r="0.7"/><circle cx="785" cy="99" r="0.7"/><circle cx="768" cy="110" r="0.55"/><circle cx="815" cy="180" r="0.7"/><circle cx="1124" cy="15" r="0.6"/><circle cx="939" cy="23" r="0.5"/><circle cx="841" cy="60" r="0.55"/><circle cx="782" cy="367" r="0.55"/><circle cx="234" cy="181" r="0.7"/><circle cx="219" cy="69" r="0.5"/><circle cx="492" cy="299" r="0.55"/><circle cx="52" cy="247" r="0.45"/><circle cx="377" cy="116" r="0.55"/><circle cx="1202" cy="45" r="0.55"/><circle cx="752" cy="85" r="0.55"/><circle cx="341" cy="148" r="0.55"/><circle cx="258" cy="224" r="0.45"/><circle cx="610" cy="204" r="0.5"/><circle cx="1042" cy="73" r="0.6"/><circle cx="1258" cy="25" r="0.6"/><circle cx="879" cy="104" r="0.55"/><circle cx="1223" cy="25" r="0.45"/><circle cx="1194" cy="150" r="0.6"/><circle cx="204" cy="108" r="0.55"/><circle cx="887" cy="342" r="0.6"/><circle cx="577" cy="228" r="0.5"/><circle cx="947" cy="3" r="0.5"/><circle cx="84" cy="271" r="0.7"/><circle cx="545" cy="65" r="0.45"/><circle cx="1124" cy="101" r="0.5"/><circle cx="603" cy="49" r="0.6"/><circle cx="645" cy="258" r="0.5"/><circle cx="293" cy="243" r="0.7"/><circle cx="529" cy="260" r="0.55"/><circle cx="502" cy="258" r="0.45"/><circle cx="645" cy="7" r="0.7"/><circle cx="720" cy="98" r="0.55"/><circle cx="160" cy="138" r="0.45"/><circle cx="655" cy="73" r="0.55"/><circle cx="601" cy="104" r="0.5"/><circle cx="775" cy="228" r="0.5"/><circle cx="1218" cy="85" r="0.5"/><circle cx="568" cy="184" r="0.6"/><circle cx="467" cy="15" r="0.5"/><circle cx="1089" cy="14" r="0.55"/><circle cx="260" cy="153" r="0.55"/><circle cx="57" cy="197" r="0.55"/><circle cx="1214" cy="27" r="0.7"/><circle cx="1219" cy="70" r="0.5"/><circle cx="663" cy="22" r="0.6"/><circle cx="518" cy="33" r="0.6"/><circle cx="296" cy="27" r="0.7"/><circle cx="149" cy="14" r="0.45"/><circle cx="468" cy="179" r="0.45"/><circle cx="126" cy="156" r="0.5"/><circle cx="956" cy="124" r="0.5"/><circle cx="765" cy="281" r="0.5"/><circle cx="434" cy="165" r="0.7"/><circle cx="920" cy="81" r="0.55"/><circle cx="853" cy="119" r="0.5"/><circle cx="856" cy="42" r="0.55"/><circle cx="911" cy="297" r="0.5"/><circle cx="226" cy="298" r="0.6"/><circle cx="1111" cy="81" r="0.45"/><circle cx="226" cy="124" r="0.45"/><circle cx="714" cy="23" r="0.45"/><circle cx="476" cy="27" r="0.6"/><circle cx="1166" cy="160" r="0.55"/><circle cx="79" cy="229" r="0.45"/><circle cx="119" cy="205" r="0.7"/><circle cx="1271" cy="80" r="0.45"/><circle cx="681" cy="168" r="0.7"/><circle cx="173" cy="126" r="0.5"/><circle cx="124" cy="70" r="0.7"/><circle cx="1114" cy="199" r="0.7"/><circle cx="1123" cy="276" r="0.6"/><circle cx="110" cy="9" r="0.7"/><circle cx="1127" cy="20" r="0.5"/><circle cx="125" cy="215" r="0.55"/><circle cx="903" cy="91" r="0.55"/><circle cx="1048" cy="88" r="0.6"/><circle cx="658" cy="60" r="0.6"/><circle cx="1127" cy="222" r="0.7"/><circle cx="1098" cy="206" r="0.6"/><circle cx="200" cy="8" r="0.7"/><circle cx="946" cy="226" r="0.5"/><circle cx="757" cy="104" r="0.45"/><circle cx="1003" cy="234" r="0.5"/><circle cx="1010" cy="59" r="0.55"/><circle cx="882" cy="224" r="0.45"/><circle cx="747" cy="208" r="0.7"/><circle cx="111" cy="93" r="0.5"/><circle cx="1118" cy="220" r="0.6"/><circle cx="968" cy="158" r="0.45"/><circle cx="1155" cy="73" r="0.7"/><circle cx="289" cy="118" r="0.7"/><circle cx="829" cy="185" r="0.6"/><circle cx="374" cy="65" r="0.6"/><circle cx="889" cy="104" r="0.6"/><circle cx="1251" cy="132" r="0.6"/><circle cx="875" cy="98" r="0.45"/><circle cx="539" cy="172" r="0.6"/><circle cx="355" cy="236" r="0.5"/><circle cx="430" cy="160" r="0.7"/><circle cx="342" cy="353" r="0.6"/><circle cx="592" cy="205" r="0.45"/><circle cx="1112" cy="46" r="0.55"/><circle cx="1033" cy="236" r="0.7"/><circle cx="1021" cy="101" r="0.5"/><circle cx="107" cy="91" r="0.45"/><circle cx="894" cy="128" r="0.6"/><circle cx="285" cy="143" r="0.5"/><circle cx="137" cy="198" r="0.7"/><circle cx="862" cy="20" r="0.5"/><circle cx="606" cy="9" r="0.7"/><circle cx="322" cy="43" r="0.7"/><circle cx="414" cy="127" r="0.45"/><circle cx="473" cy="6" r="0.5"/><circle cx="883" cy="21" r="0.5"/><circle cx="332" cy="189" r="0.7"/><circle cx="544" cy="300" r="0.7"/><circle cx="967" cy="284" r="0.6"/><circle cx="232" cy="293" r="0.6"/><circle cx="320" cy="123" r="0.45"/><circle cx="136" cy="199" r="0.6"/><circle cx="537" cy="238" r="0.55"/><circle cx="822" cy="61" r="0.7"/><circle cx="809" cy="252" r="0.6"/><circle cx="693" cy="271" r="0.7"/><circle cx="658" cy="210" r="0.45"/><circle cx="506" cy="331" r="0.7"/><circle cx="1101" cy="107" r="0.55"/><circle cx="136" cy="176" r="0.55"/><circle cx="800" cy="197" r="0.5"/><circle cx="73" cy="75" r="0.7"/><circle cx="912" cy="84" r="0.5"/><circle cx="961" cy="151" r="0.5"/><circle cx="987" cy="69" r="0.5"/><circle cx="1022" cy="27" r="0.55"/><circle cx="466" cy="108" r="0.5"/><circle cx="1274" cy="153" r="0.45"/><circle cx="464" cy="118" r="0.5"/><circle cx="824" cy="227" r="0.45"/><circle cx="307" cy="231" r="0.5"/><circle cx="726" cy="377" r="0.45"/><circle cx="758" cy="126" r="0.7"/><circle cx="814" cy="222" r="0.45"/><circle cx="624" cy="4" r="0.6"/><circle cx="308" cy="27" r="0.55"/><circle cx="813" cy="28" r="0.45"/><circle cx="943" cy="113" r="0.55"/><circle cx="883" cy="245" r="0.6"/><circle cx="119" cy="38" r="0.55"/><circle cx="747" cy="235" r="0.7"/><circle cx="1195" cy="52" r="0.7"/><circle cx="545" cy="231" r="0.6"/><circle cx="581" cy="102" r="0.45"/><circle cx="987" cy="64" r="0.45"/><circle cx="23" cy="13" r="0.45"/><circle cx="414" cy="72" r="0.6"/><circle cx="411" cy="301" r="0.55"/><circle cx="1255" cy="255" r="0.7"/><circle cx="861" cy="11" r="0.7"/><circle cx="454" cy="130" r="0.45"/><circle cx="1073" cy="136" r="0.55"/><circle cx="954" cy="295" r="0.6"/><circle cx="124" cy="356" r="0.55"/><circle cx="1233" cy="254" r="0.45"/><circle cx="103" cy="136" r="0.5"/><circle cx="534" cy="363" r="0.55"/><circle cx="461" cy="250" r="0.7"/><circle cx="819" cy="138" r="0.5"/><circle cx="162" cy="216" r="0.55"/><circle cx="1283" cy="240" r="0.7"/><circle cx="574" cy="36" r="0.45"/><circle cx="1183" cy="47" r="0.6"/><circle cx="643" cy="259" r="0.7"/><circle cx="536" cy="95" r="0.7"/><circle cx="418" cy="237" r="0.6"/><circle cx="642" cy="321" r="0.5"/><circle cx="38" cy="66" r="0.45"/><circle cx="996" cy="265" r="0.6"/><circle cx="872" cy="105" r="0.7"/><circle cx="616" cy="26" r="0.45"/><circle cx="1117" cy="202" r="0.45"/><circle cx="635" cy="13" r="0.55"/><circle cx="655" cy="102" r="0.7"/><circle cx="456" cy="56" r="0.6"/><circle cx="1265" cy="11" r="0.7"/><circle cx="794" cy="205" r="0.6"/><circle cx="717" cy="319" r="0.55"/><circle cx="508" cy="172" r="0.7"/><circle cx="379" cy="34" r="0.7"/><circle cx="493" cy="231" r="0.55"/><circle cx="1276" cy="202" r="0.7"/><circle cx="351" cy="20" r="0.7"/><circle cx="634" cy="157" r="0.5"/><circle cx="472" cy="212" r="0.6"/><circle cx="1142" cy="22" r="0.7"/><circle cx="1262" cy="26" r="0.5"/><circle cx="1010" cy="17" r="0.7"/><circle cx="855" cy="113" r="0.55"/><circle cx="618" cy="184" r="0.5"/><circle cx="406" cy="9" r="0.45"/><circle cx="867" cy="75" r="0.45"/><circle cx="282" cy="115" r="0.6"/><circle cx="204" cy="385" r="0.45"/><circle cx="731" cy="215" r="0.55"/><circle cx="684" cy="133" r="0.7"/><circle cx="986" cy="62" r="0.5"/><circle cx="966" cy="229" r="0.7"/><circle cx="812" cy="203" r="0.6"/><circle cx="232" cy="220" r="0.45"/><circle cx="408" cy="69" r="0.5"/><circle cx="715" cy="123" r="0.55"/><circle cx="1054" cy="182" r="0.55"/><circle cx="319" cy="245" r="0.5"/><circle cx="264" cy="107" r="0.7"/><circle cx="319" cy="108" r="0.55"/><circle cx="489" cy="20" r="0.5"/><circle cx="1216" cy="68" r="0.55"/><circle cx="108" cy="130" r="0.6"/><circle cx="348" cy="240" r="0.45"/><circle cx="1237" cy="223" r="0.55"/><circle cx="442" cy="23" r="0.5"/><circle cx="494" cy="54" r="0.5"/><circle cx="1150" cy="203" r="0.45"/><circle cx="434" cy="137" r="0.7"/><circle cx="270" cy="269" r="0.6"/><circle cx="1207" cy="81" r="0.7"/><circle cx="482" cy="163" r="0.55"/><circle cx="139" cy="354" r="0.5"/><circle cx="1007" cy="188" r="0.55"/><circle cx="866" cy="16" r="0.55"/><circle cx="1113" cy="109" r="0.5"/><circle cx="173" cy="175" r="0.5"/><circle cx="350" cy="104" r="0.6"/><circle cx="569" cy="121" r="0.5"/><circle cx="571" cy="177" r="0.45"/><circle cx="300" cy="214" r="0.45"/><circle cx="23" cy="117" r="0.5"/><circle cx="589" cy="53" r="0.5"/><circle cx="958" cy="60" r="0.45"/><circle cx="461" cy="62" r="0.7"/><circle cx="266" cy="27" r="0.5"/><circle cx="214" cy="256" r="0.7"/><circle cx="803" cy="92" r="0.55"/><circle cx="936" cy="157" r="0.5"/><circle cx="537" cy="74" r="0.45"/><circle cx="948" cy="222" r="0.55"/><circle cx="506" cy="125" r="0.55"/><circle cx="912" cy="29" r="0.6"/><circle cx="949" cy="199" r="0.6"/><circle cx="342" cy="124" r="0.7"/><circle cx="345" cy="143" r="0.7"/><circle cx="1122" cy="301" r="0.55"/><circle cx="109" cy="44" r="0.7"/><circle cx="105" cy="190" r="0.7"/><circle cx="398" cy="125" r="0.55"/><circle cx="694" cy="217" r="0.5"/><circle cx="535" cy="262" r="0.7"/><circle cx="306" cy="121" r="0.45"/><circle cx="146" cy="297" r="0.55"/><circle cx="720" cy="132" r="0.55"/><circle cx="456" cy="165" r="0.7"/><circle cx="397" cy="11" r="0.55"/><circle cx="31" cy="171" r="0.6"/><circle cx="769" cy="157" r="0.45"/><circle cx="352" cy="83" r="0.55"/><circle cx="203" cy="189" r="0.7"/><circle cx="942" cy="61" r="0.6"/><circle cx="1060" cy="284" r="0.45"/><circle cx="468" cy="195" r="0.7"/><circle cx="1241" cy="48" r="0.6"/><circle cx="1004" cy="70" r="0.6"/><circle cx="161" cy="138" r="0.7"/><circle cx="712" cy="110" r="0.45"/><circle cx="317" cy="89" r="0.55"/><circle cx="79" cy="197" r="0.5"/><circle cx="288" cy="72" r="0.7"/><circle cx="491" cy="105" r="0.7"/><circle cx="75" cy="18" r="0.6"/><circle cx="43" cy="318" r="0.6"/><circle cx="724" cy="121" r="0.6"/><circle cx="220" cy="323" r="0.45"/><circle cx="68" cy="22" r="0.7"/><circle cx="1146" cy="286" r="0.7"/><circle cx="1238" cy="26" r="0.55"/><circle cx="1015" cy="303" r="0.5"/><circle cx="1269" cy="137" r="0.6"/><circle cx="898" cy="227" r="0.45"/><circle cx="1259" cy="13" r="0.6"/><circle cx="983" cy="161" r="0.45"/><circle cx="1274" cy="153" r="0.5"/><circle cx="270" cy="142" r="0.55"/><circle cx="591" cy="109" r="0.5"/><circle cx="403" cy="50" r="0.6"/><circle cx="980" cy="100" r="0.6"/><circle cx="291" cy="33" r="0.5"/><circle cx="858" cy="104" r="0.7"/><circle cx="952" cy="185" r="0.55"/><circle cx="989" cy="110" r="0.7"/><circle cx="251" cy="26" r="0.55"/><circle cx="783" cy="63" r="0.45"/><circle cx="918" cy="82" r="0.45"/><circle cx="888" cy="117" r="0.7"/><circle cx="275" cy="115" r="0.7"/><circle cx="976" cy="76" r="0.45"/><circle cx="566" cy="35" r="0.5"/><circle cx="824" cy="26" r="0.7"/><circle cx="701" cy="114" r="0.45"/><circle cx="824" cy="117" r="0.6"/><circle cx="603" cy="18" r="0.45"/><circle cx="895" cy="200" r="0.6"/><circle cx="177" cy="6" r="0.7"/><circle cx="820" cy="129" r="0.6"/><circle cx="1228" cy="83" r="0.6"/><circle cx="331" cy="143" r="0.7"/><circle cx="663" cy="119" r="0.7"/><circle cx="421" cy="17" r="0.55"/><circle cx="1173" cy="65" r="0.6"/><circle cx="1258" cy="241" r="0.7"/><circle cx="415" cy="53" r="0.5"/><circle cx="350" cy="102" r="0.5"/><circle cx="827" cy="136" r="0.5"/><circle cx="1089" cy="100" r="0.6"/><circle cx="220" cy="3" r="0.45"/><circle cx="653" cy="166" r="0.55"/><circle cx="252" cy="55" r="0.55"/><circle cx="208" cy="86" r="0.6"/><circle cx="800" cy="146" r="0.5"/><circle cx="394" cy="199" r="0.45"/><circle cx="809" cy="146" r="0.45"/><circle cx="1112" cy="157" r="0.45"/><circle cx="364" cy="73" r="0.7"/><circle cx="1065" cy="49" r="0.5"/><circle cx="404" cy="128" r="0.6"/><circle cx="67" cy="326" r="0.6"/><circle cx="970" cy="73" r="0.6"/><circle cx="843" cy="100" r="0.7"/><circle cx="751" cy="221" r="0.6"/><circle cx="699" cy="207" r="0.7"/><circle cx="224" cy="140" r="0.5"/><circle cx="646" cy="54" r="0.7"/><circle cx="916" cy="36" r="0.45"/><circle cx="1258" cy="219" r="0.45"/><circle cx="567" cy="33" r="0.45"/><circle cx="1256" cy="151" r="0.5"/><circle cx="729" cy="39" r="0.7"/><circle cx="702" cy="86" r="0.7"/><circle cx="560" cy="84" r="0.6"/><circle cx="930" cy="54" r="0.55"/><circle cx="673" cy="84" r="0.55"/><circle cx="884" cy="138" r="0.7"/><circle cx="815" cy="114" r="0.7"/><circle cx="744" cy="157" r="0.55"/><circle cx="1077" cy="11" r="0.6"/><circle cx="870" cy="262" r="0.45"/><circle cx="1001" cy="79" r="0.5"/><circle cx="245" cy="235" r="0.45"/><circle cx="529" cy="50" r="0.5"/><circle cx="837" cy="242" r="0.6"/><circle cx="824" cy="172" r="0.5"/><circle cx="154" cy="88" r="0.45"/><circle cx="777" cy="84" r="0.45"/><circle cx="825" cy="220" r="0.7"/><circle cx="833" cy="50" r="0.45"/><circle cx="567" cy="52" r="0.7"/><circle cx="988" cy="245" r="0.55"/><circle cx="977" cy="172" r="0.55"/><circle cx="1295" cy="258" r="0.7"/><circle cx="1173" cy="156" r="0.6"/><circle cx="160" cy="99" r="0.6"/><circle cx="1212" cy="233" r="0.45"/><circle cx="827" cy="24" r="0.5"/><circle cx="978" cy="82" r="0.5"/><circle cx="650" cy="138" r="0.5"/><circle cx="462" cy="91" r="0.7"/><circle cx="1012" cy="23" r="0.45"/><circle cx="721" cy="31" r="0.55"/><circle cx="313" cy="303" r="0.7"/><circle cx="736" cy="95" r="0.45"/><circle cx="592" cy="100" r="0.55"/><circle cx="93" cy="279" r="0.6"/><circle cx="1239" cy="11" r="0.6"/><circle cx="671" cy="252" r="0.7"/><circle cx="272" cy="157" r="0.6"/><circle cx="673" cy="25" r="0.45"/><circle cx="1132" cy="93" r="0.7"/><circle cx="280" cy="68" r="0.7"/><circle cx="919" cy="18" r="0.6"/><circle cx="1136" cy="67" r="0.5"/><circle cx="985" cy="99" r="0.6"/><circle cx="856" cy="181" r="0.45"/><circle cx="1198" cy="9" r="0.55"/><circle cx="1040" cy="70" r="0.5"/><circle cx="940" cy="283" r="0.7"/><circle cx="1007" cy="54" r="0.6"/><circle cx="746" cy="110" r="0.45"/><circle cx="900" cy="228" r="0.55"/><circle cx="753" cy="47" r="0.6"/><circle cx="37" cy="113" r="0.7"/><circle cx="94" cy="153" r="0.5"/><circle cx="1061" cy="56" r="0.55"/><circle cx="384" cy="61" r="0.55"/><circle cx="18" cy="84" r="0.55"/><circle cx="241" cy="137" r="0.55"/><circle cx="178" cy="2" r="0.55"/><circle cx="928" cy="73" r="0.45"/><circle cx="230" cy="36" r="0.45"/><circle cx="1243" cy="156" r="0.7"/><circle cx="439" cy="92" r="0.7"/><circle cx="265" cy="22" r="0.45"/><circle cx="297" cy="60" r="0.45"/><circle cx="404" cy="31" r="0.45"/><circle cx="880" cy="158" r="0.55"/><circle cx="766" cy="36" r="0.6"/><circle cx="1013" cy="59" r="0.6"/><circle cx="788" cy="17" r="0.45"/><circle cx="133" cy="158" r="0.55"/><circle cx="1244" cy="246" r="0.45"/><circle cx="1280" cy="292" r="0.6"/><circle cx="116" cy="168" r="0.45"/><circle cx="951" cy="30" r="0.55"/><circle cx="668" cy="80" r="0.55"/><circle cx="181" cy="57" r="0.7"/><circle cx="585" cy="351" r="0.6"/><circle cx="574" cy="108" r="0.45"/><circle cx="74" cy="105" r="0.45"/><circle cx="34" cy="198" r="0.55"/><circle cx="969" cy="62" r="0.55"/><circle cx="1223" cy="279" r="0.5"/><circle cx="129" cy="192" r="0.5"/><circle cx="646" cy="215" r="0.6"/><circle cx="653" cy="249" r="0.45"/><circle cx="647" cy="173" r="0.6"/><circle cx="1042" cy="4" r="0.55"/><circle cx="884" cy="191" r="0.6"/><circle cx="550" cy="49" r="0.7"/><circle cx="782" cy="93" r="0.7"/><circle cx="1181" cy="85" r="0.45"/><circle cx="126" cy="316" r="0.7"/><circle cx="53" cy="158" r="0.5"/><circle cx="593" cy="83" r="0.5"/><circle cx="177" cy="144" r="0.45"/><circle cx="973" cy="148" r="0.45"/><circle cx="668" cy="46" r="0.6"/><circle cx="501" cy="68" r="0.55"/><circle cx="142" cy="219" r="0.7"/><circle cx="358" cy="201" r="0.5"/><circle cx="915" cy="196" r="0.5"/><circle cx="941" cy="110" r="0.45"/><circle cx="368" cy="153" r="0.55"/><circle cx="598" cy="103" r="0.55"/><circle cx="28" cy="90" r="0.5"/><circle cx="1000" cy="127" r="0.6"/><circle cx="401" cy="194" r="0.45"/><circle cx="1109" cy="138" r="0.5"/><circle cx="253" cy="97" r="0.45"/><circle cx="1141" cy="20" r="0.55"/><circle cx="181" cy="21" r="0.5"/><circle cx="606" cy="340" r="0.55"/><circle cx="490" cy="231" r="0.5"/><circle cx="658" cy="68" r="0.55"/><circle cx="843" cy="34" r="0.45"/><circle cx="652" cy="70" r="0.6"/><circle cx="767" cy="43" r="0.5"/><circle cx="534" cy="44" r="0.7"/><circle cx="896" cy="131" r="0.55"/><circle cx="519" cy="87" r="0.6"/><circle cx="464" cy="44" r="0.55"/><circle cx="283" cy="40" r="0.5"/><circle cx="185" cy="206" r="0.55"/><circle cx="928" cy="34" r="0.7"/><circle cx="612" cy="220" r="0.7"/><circle cx="1043" cy="355" r="0.5"/><circle cx="457" cy="57" r="0.5"/><circle cx="709" cy="101" r="0.5"/><circle cx="347" cy="163" r="0.45"/><circle cx="433" cy="135" r="0.6"/><circle cx="713" cy="59" r="0.7"/><circle cx="676" cy="24" r="0.55"/><circle cx="462" cy="61" r="0.45"/><circle cx="832" cy="209" r="0.5"/><circle cx="573" cy="21" r="0.6"/><circle cx="523" cy="175" r="0.55"/><circle cx="58" cy="150" r="0.6"/><circle cx="222" cy="77" r="0.6"/><circle cx="756" cy="100" r="0.6"/><circle cx="797" cy="41" r="0.5"/><circle cx="1210" cy="168" r="0.55"/><circle cx="164" cy="106" r="0.6"/><circle cx="245" cy="182" r="0.6"/><circle cx="251" cy="22" r="0.6"/><circle cx="823" cy="4" r="0.45"/><circle cx="1219" cy="211" r="0.55"/><circle cx="1095" cy="169" r="0.7"/><circle cx="1260" cy="167" r="0.45"/><circle cx="404" cy="295" r="0.5"/><circle cx="222" cy="46" r="0.45"/><circle cx="1248" cy="353" r="0.7"/><circle cx="36" cy="228" r="0.55"/><circle cx="1295" cy="8" r="0.55"/><circle cx="63" cy="109" r="0.7"/><circle cx="54" cy="290" r="0.45"/><circle cx="814" cy="59" r="0.45"/><circle cx="1028" cy="161" r="0.45"/><circle cx="484" cy="282" r="0.7"/><circle cx="275" cy="147" r="0.45"/><circle cx="785" cy="192" r="0.45"/><circle cx="1287" cy="132" r="0.55"/><circle cx="261" cy="30" r="0.5"/><circle cx="572" cy="99" r="0.6"/><circle cx="1014" cy="13" r="0.7"/><circle cx="735" cy="38" r="0.6"/><circle cx="176" cy="177" r="0.45"/><circle cx="1109" cy="254" r="0.55"/><circle cx="309" cy="154" r="0.6"/><circle cx="276" cy="117" r="0.45"/><circle cx="1198" cy="31" r="0.55"/><circle cx="1111" cy="99" r="0.7"/><circle cx="237" cy="92" r="0.7"/><circle cx="732" cy="136" r="0.45"/><circle cx="171" cy="6" r="0.6"/><circle cx="1030" cy="114" r="0.45"/><circle cx="78" cy="59" r="0.5"/><circle cx="1165" cy="118" r="0.55"/><circle cx="139" cy="156" r="0.7"/><circle cx="604" cy="91" r="0.7"/><circle cx="192" cy="78" r="0.5"/><circle cx="1061" cy="190" r="0.45"/><circle cx="796" cy="24" r="0.45"/><circle cx="470" cy="282" r="0.45"/><circle cx="1273" cy="13" r="0.7"/><circle cx="851" cy="216" r="0.45"/><circle cx="582" cy="125" r="0.55"/><circle cx="41" cy="114" r="0.7"/><circle cx="598" cy="55" r="0.55"/><circle cx="849" cy="57" r="0.45"/><circle cx="778" cy="170" r="0.7"/><circle cx="1061" cy="72" r="0.45"/><circle cx="653" cy="8" r="0.45"/><circle cx="1273" cy="293" r="0.6"/><circle cx="1089" cy="10" r="0.7"/></g><g opacity="0.38"><circle cx="82" cy="16" r="0.6"/><circle cx="546" cy="227" r="0.55"/><circle cx="96" cy="87" r="0.45"/><circle cx="180" cy="181" r="0.7"/><circle cx="573" cy="336" r="0.45"/><circle cx="333" cy="7" r="0.5"/><circle cx="309" cy="58" r="0.6"/><circle cx="232" cy="6" r="0.5"/><circle cx="453" cy="35" r="0.55"/><circle cx="261" cy="215" r="0.45"/><circle cx="700" cy="19" r="0.7"/><circle cx="136" cy="293" r="0.55"/><circle cx="694" cy="89" r="0.7"/><circle cx="1154" cy="55" r="0.55"/><circle cx="706" cy="283" r="0.45"/><circle cx="818" cy="163" r="0.55"/><circle cx="1046" cy="105" r="0.5"/><circle cx="1274" cy="11" r="0.55"/><circle cx="1052" cy="32" r="0.45"/><circle cx="777" cy="147" r="0.7"/><circle cx="182" cy="168" r="0.6"/><circle cx="467" cy="110" r="0.7"/><circle cx="622" cy="86" r="0.45"/><circle cx="106" cy="123" r="0.55"/><circle cx="319" cy="90" r="0.6"/><circle cx="874" cy="198" r="0.7"/><circle cx="406" cy="81" r="0.7"/><circle cx="1069" cy="35" r="0.45"/><circle cx="1157" cy="278" r="0.7"/><circle cx="181" cy="84" r="0.6"/><circle cx="458" cy="201" r="0.7"/><circle cx="738" cy="13" r="0.5"/><circle cx="502" cy="229" r="0.55"/><circle cx="384" cy="111" r="0.45"/><circle cx="1285" cy="77" r="0.45"/><circle cx="226" cy="312" r="0.5"/><circle cx="869" cy="220" r="0.5"/><circle cx="995" cy="200" r="0.6"/><circle cx="1281" cy="3" r="0.45"/><circle cx="266" cy="154" r="0.55"/><circle cx="964" cy="206" r="0.5"/><circle cx="496" cy="104" r="0.55"/><circle cx="191" cy="84" r="0.6"/><circle cx="733" cy="149" r="0.7"/><circle cx="648" cy="259" r="0.7"/><circle cx="510" cy="287" r="0.55"/><circle cx="733" cy="53" r="0.5"/><circle cx="348" cy="110" r="0.6"/><circle cx="531" cy="15" r="0.7"/><circle cx="877" cy="110" r="0.45"/><circle cx="658" cy="112" r="0.6"/><circle cx="27" cy="71" r="0.7"/><circle cx="738" cy="47" r="0.6"/><circle cx="364" cy="258" r="0.6"/><circle cx="1140" cy="292" r="0.6"/><circle cx="450" cy="282" r="0.55"/><circle cx="348" cy="265" r="0.45"/><circle cx="362" cy="43" r="0.45"/><circle cx="21" cy="14" r="0.45"/><circle cx="392" cy="204" r="0.5"/><circle cx="187" cy="227" r="0.45"/><circle cx="485" cy="238" r="0.55"/><circle cx="841" cy="151" r="0.45"/><circle cx="74" cy="306" r="0.7"/><circle cx="180" cy="137" r="0.5"/><circle cx="1244" cy="144" r="0.45"/><circle cx="137" cy="297" r="0.5"/><circle cx="589" cy="236" r="0.5"/><circle cx="907" cy="95" r="0.7"/><circle cx="593" cy="196" r="0.45"/><circle cx="934" cy="118" r="0.55"/><circle cx="847" cy="218" r="0.55"/><circle cx="568" cy="272" r="0.7"/><circle cx="175" cy="121" r="0.5"/><circle cx="29" cy="126" r="0.5"/><circle cx="290" cy="33" r="0.7"/><circle cx="396" cy="19" r="0.55"/><circle cx="1149" cy="233" r="0.6"/><circle cx="739" cy="24" r="0.45"/><circle cx="1037" cy="103" r="0.6"/><circle cx="855" cy="189" r="0.6"/><circle cx="1212" cy="258" r="0.45"/><circle cx="355" cy="77" r="0.45"/><circle cx="159" cy="174" r="0.7"/><circle cx="569" cy="53" r="0.5"/><circle cx="741" cy="162" r="0.6"/><circle cx="805" cy="85" r="0.7"/><circle cx="436" cy="11" r="0.7"/><circle cx="275" cy="11" r="0.45"/><circle cx="925" cy="9" r="0.55"/><circle cx="530" cy="65" r="0.7"/><circle cx="517" cy="163" r="0.7"/><circle cx="961" cy="107" r="0.45"/><circle cx="865" cy="118" r="0.55"/><circle cx="615" cy="243" r="0.55"/><circle cx="229" cy="111" r="0.55"/><circle cx="471" cy="108" r="0.5"/><circle cx="371" cy="120" r="0.45"/><circle cx="97" cy="100" r="0.7"/><circle cx="769" cy="220" r="0.45"/><circle cx="1198" cy="247" r="0.5"/><circle cx="215" cy="139" r="0.5"/><circle cx="77" cy="198" r="0.45"/><circle cx="152" cy="145" r="0.6"/><circle cx="234" cy="201" r="0.7"/><circle cx="1248" cy="59" r="0.5"/><circle cx="349" cy="226" r="0.6"/><circle cx="1098" cy="219" r="0.55"/><circle cx="39" cy="66" r="0.5"/><circle cx="14" cy="192" r="0.7"/><circle cx="1275" cy="114" r="0.6"/><circle cx="1014" cy="45" r="0.6"/><circle cx="643" cy="124" r="0.45"/><circle cx="53" cy="203" r="0.7"/><circle cx="773" cy="106" r="0.5"/><circle cx="160" cy="102" r="0.55"/><circle cx="1260" cy="71" r="0.45"/><circle cx="637" cy="40" r="0.5"/><circle cx="397" cy="193" r="0.55"/><circle cx="1011" cy="268" r="0.6"/><circle cx="148" cy="58" r="0.7"/><circle cx="986" cy="74" r="0.6"/><circle cx="118" cy="115" r="0.55"/><circle cx="1263" cy="280" r="0.7"/><circle cx="1021" cy="25" r="0.55"/><circle cx="229" cy="44" r="0.5"/><circle cx="480" cy="184" r="0.6"/><circle cx="121" cy="250" r="0.5"/><circle cx="876" cy="186" r="0.7"/><circle cx="1162" cy="153" r="0.45"/><circle cx="1049" cy="52" r="0.5"/><circle cx="1089" cy="19" r="0.6"/><circle cx="831" cy="29" r="0.6"/><circle cx="601" cy="84" r="0.7"/><circle cx="768" cy="55" r="0.7"/><circle cx="597" cy="8" r="0.7"/><circle cx="1008" cy="65" r="0.7"/><circle cx="1275" cy="155" r="0.55"/><circle cx="329" cy="330" r="0.45"/><circle cx="1073" cy="54" r="0.6"/><circle cx="427" cy="72" r="0.7"/><circle cx="81" cy="67" r="0.7"/><circle cx="5" cy="223" r="0.5"/><circle cx="164" cy="35" r="0.6"/><circle cx="761" cy="182" r="0.5"/><circle cx="353" cy="247" r="0.7"/><circle cx="271" cy="36" r="0.45"/><circle cx="937" cy="57" r="0.45"/><circle cx="768" cy="105" r="0.6"/><circle cx="1151" cy="2" r="0.5"/><circle cx="757" cy="131" r="0.5"/><circle cx="860" cy="73" r="0.7"/><circle cx="183" cy="204" r="0.55"/><circle cx="375" cy="150" r="0.7"/><circle cx="500" cy="37" r="0.7"/><circle cx="1278" cy="327" r="0.6"/><circle cx="809" cy="179" r="0.6"/><circle cx="640" cy="161" r="0.55"/><circle cx="23" cy="129" r="0.7"/><circle cx="624" cy="296" r="0.45"/><circle cx="178" cy="224" r="0.6"/><circle cx="240" cy="29" r="0.7"/><circle cx="643" cy="168" r="0.6"/><circle cx="1263" cy="181" r="0.55"/><circle cx="982" cy="92" r="0.5"/><circle cx="623" cy="153" r="0.5"/><circle cx="1130" cy="208" r="0.55"/><circle cx="182" cy="151" r="0.55"/><circle cx="635" cy="318" r="0.45"/><circle cx="432" cy="131" r="0.45"/><circle cx="373" cy="47" r="0.5"/><circle cx="782" cy="192" r="0.6"/><circle cx="1298" cy="214" r="0.6"/><circle cx="623" cy="116" r="0.55"/><circle cx="440" cy="188" r="0.6"/><circle cx="636" cy="95" r="0.7"/><circle cx="1259" cy="156" r="0.45"/><circle cx="897" cy="69" r="0.5"/><circle cx="401" cy="30" r="0.7"/><circle cx="496" cy="51" r="0.55"/><circle cx="1181" cy="227" r="0.7"/><circle cx="1270" cy="186" r="0.55"/><circle cx="467" cy="176" r="0.7"/><circle cx="786" cy="218" r="0.7"/><circle cx="113" cy="53" r="0.55"/><circle cx="359" cy="244" r="0.5"/><circle cx="1221" cy="203" r="0.7"/><circle cx="315" cy="153" r="0.6"/><circle cx="956" cy="187" r="0.7"/><circle cx="510" cy="161" r="0.6"/><circle cx="111" cy="251" r="0.6"/><circle cx="256" cy="184" r="0.45"/><circle cx="411" cy="160" r="0.6"/><circle cx="584" cy="71" r="0.45"/><circle cx="1192" cy="103" r="0.45"/><circle cx="785" cy="97" r="0.55"/><circle cx="330" cy="115" r="0.5"/><circle cx="1247" cy="60" r="0.45"/><circle cx="551" cy="172" r="0.5"/><circle cx="225" cy="169" r="0.55"/><circle cx="621" cy="319" r="0.45"/><circle cx="827" cy="3" r="0.6"/><circle cx="1211" cy="157" r="0.6"/><circle cx="1269" cy="39" r="0.7"/><circle cx="891" cy="326" r="0.55"/><circle cx="47" cy="97" r="0.7"/><circle cx="153" cy="249" r="0.45"/><circle cx="378" cy="137" r="0.45"/><circle cx="418" cy="246" r="0.6"/><circle cx="143" cy="113" r="0.7"/><circle cx="648" cy="37" r="0.45"/><circle cx="763" cy="80" r="0.55"/><circle cx="156" cy="176" r="0.55"/><circle cx="531" cy="118" r="0.7"/><circle cx="1051" cy="36" r="0.45"/><circle cx="363" cy="23" r="0.5"/><circle cx="1279" cy="42" r="0.6"/><circle cx="335" cy="263" r="0.5"/><circle cx="24" cy="281" r="0.55"/><circle cx="1079" cy="184" r="0.45"/><circle cx="718" cy="3" r="0.6"/><circle cx="416" cy="123" r="0.45"/><circle cx="45" cy="356" r="0.45"/><circle cx="1238" cy="202" r="0.5"/><circle cx="1118" cy="85" r="0.5"/><circle cx="692" cy="68" r="0.7"/><circle cx="325" cy="234" r="0.7"/><circle cx="537" cy="4" r="0.7"/><circle cx="985" cy="10" r="0.55"/><circle cx="548" cy="285" r="0.6"/><circle cx="1083" cy="73" r="0.55"/><circle cx="124" cy="205" r="0.5"/><circle cx="147" cy="35" r="0.5"/><circle cx="187" cy="52" r="0.45"/><circle cx="988" cy="166" r="0.45"/><circle cx="1192" cy="171" r="0.5"/><circle cx="1177" cy="108" r="0.55"/><circle cx="392" cy="122" r="0.45"/><circle cx="375" cy="15" r="0.5"/><circle cx="342" cy="258" r="0.55"/><circle cx="340" cy="152" r="0.45"/><circle cx="1219" cy="107" r="0.7"/><circle cx="551" cy="108" r="0.6"/><circle cx="1297" cy="39" r="0.55"/><circle cx="616" cy="300" r="0.6"/><circle cx="961" cy="144" r="0.55"/><circle cx="155" cy="106" r="0.45"/><circle cx="62" cy="114" r="0.55"/><circle cx="907" cy="312" r="0.5"/><circle cx="1236" cy="128" r="0.7"/><circle cx="52" cy="331" r="0.5"/><circle cx="185" cy="44" r="0.5"/><circle cx="199" cy="167" r="0.5"/><circle cx="42" cy="107" r="0.5"/><circle cx="1120" cy="316" r="0.7"/><circle cx="527" cy="20" r="0.45"/><circle cx="100" cy="210" r="0.45"/><circle cx="352" cy="39" r="0.6"/><circle cx="1210" cy="173" r="0.45"/><circle cx="508" cy="109" r="0.55"/><circle cx="52" cy="87" r="0.5"/><circle cx="429" cy="315" r="0.5"/><circle cx="1048" cy="11" r="0.6"/><circle cx="1099" cy="212" r="0.45"/><circle cx="1204" cy="76" r="0.7"/><circle cx="72" cy="27" r="0.45"/><circle cx="171" cy="20" r="0.5"/><circle cx="1023" cy="202" r="0.7"/><circle cx="1135" cy="177" r="0.6"/><circle cx="1209" cy="22" r="0.6"/><circle cx="996" cy="278" r="0.45"/><circle cx="710" cy="175" r="0.45"/><circle cx="226" cy="280" r="0.6"/><circle cx="70" cy="207" r="0.5"/><circle cx="283" cy="223" r="0.55"/><circle cx="285" cy="83" r="0.55"/><circle cx="1071" cy="225" r="0.45"/><circle cx="1079" cy="161" r="0.45"/><circle cx="451" cy="98" r="0.5"/><circle cx="1223" cy="124" r="0.6"/><circle cx="1019" cy="113" r="0.7"/><circle cx="969" cy="136" r="0.6"/><circle cx="1063" cy="109" r="0.55"/><circle cx="1076" cy="96" r="0.6"/><circle cx="572" cy="244" r="0.45"/><circle cx="274" cy="178" r="0.45"/><circle cx="290" cy="152" r="0.6"/><circle cx="1095" cy="165" r="0.55"/><circle cx="1153" cy="107" r="0.6"/><circle cx="472" cy="62" r="0.7"/><circle cx="174" cy="66" r="0.55"/><circle cx="840" cy="199" r="0.45"/><circle cx="705" cy="216" r="0.55"/><circle cx="354" cy="192" r="0.6"/><circle cx="331" cy="332" r="0.55"/><circle cx="161" cy="109" r="0.6"/><circle cx="697" cy="213" r="0.7"/><circle cx="958" cy="69" r="0.7"/><circle cx="475" cy="88" r="0.6"/><circle cx="1093" cy="54" r="0.5"/><circle cx="443" cy="9" r="0.5"/><circle cx="1134" cy="77" r="0.5"/><circle cx="575" cy="295" r="0.5"/><circle cx="1262" cy="160" r="0.55"/><circle cx="249" cy="207" r="0.45"/><circle cx="427" cy="151" r="0.45"/><circle cx="791" cy="121" r="0.7"/><circle cx="1298" cy="29" r="0.7"/><circle cx="907" cy="61" r="0.5"/><circle cx="92" cy="120" r="0.45"/><circle cx="876" cy="304" r="0.6"/><circle cx="771" cy="220" r="0.55"/><circle cx="352" cy="183" r="0.45"/><circle cx="1180" cy="243" r="0.5"/><circle cx="1192" cy="12" r="0.55"/><circle cx="1241" cy="217" r="0.45"/><circle cx="182" cy="5" r="0.7"/><circle cx="174" cy="165" r="0.7"/><circle cx="786" cy="5" r="0.5"/><circle cx="183" cy="159" r="0.5"/><circle cx="1223" cy="28" r="0.6"/><circle cx="484" cy="65" r="0.7"/><circle cx="1197" cy="35" r="0.6"/><circle cx="934" cy="141" r="0.45"/><circle cx="253" cy="174" r="0.5"/><circle cx="389" cy="110" r="0.55"/><circle cx="673" cy="55" r="0.6"/><circle cx="161" cy="196" r="0.6"/><circle cx="351" cy="209" r="0.55"/><circle cx="1036" cy="195" r="0.45"/><circle cx="41" cy="147" r="0.5"/><circle cx="873" cy="92" r="0.6"/><circle cx="563" cy="147" r="0.6"/><circle cx="157" cy="154" r="0.5"/><circle cx="1249" cy="217" r="0.7"/><circle cx="245" cy="56" r="0.55"/><circle cx="186" cy="132" r="0.55"/><circle cx="275" cy="131" r="0.5"/><circle cx="931" cy="95" r="0.6"/><circle cx="493" cy="7" r="0.55"/><circle cx="324" cy="14" r="0.5"/><circle cx="95" cy="168" r="0.55"/><circle cx="125" cy="96" r="0.5"/><circle cx="1273" cy="277" r="0.5"/><circle cx="1124" cy="157" r="0.45"/><circle cx="869" cy="231" r="0.5"/><circle cx="334" cy="187" r="0.6"/><circle cx="362" cy="109" r="0.55"/><circle cx="854" cy="91" r="0.7"/><circle cx="1112" cy="163" r="0.7"/><circle cx="279" cy="22" r="0.55"/><circle cx="202" cy="43" r="0.6"/><circle cx="294" cy="206" r="0.5"/><circle cx="806" cy="232" r="0.5"/><circle cx="765" cy="146" r="0.55"/><circle cx="350" cy="208" r="0.45"/><circle cx="1079" cy="40" r="0.5"/><circle cx="634" cy="71" r="0.45"/><circle cx="1231" cy="166" r="0.55"/><circle cx="1089" cy="202" r="0.55"/><circle cx="315" cy="264" r="0.55"/><circle cx="1285" cy="186" r="0.6"/><circle cx="1121" cy="134" r="0.7"/><circle cx="583" cy="223" r="0.7"/><circle cx="804" cy="67" r="0.6"/><circle cx="597" cy="17" r="0.5"/><circle cx="141" cy="189" r="0.6"/><circle cx="177" cy="170" r="0.45"/><circle cx="406" cy="6" r="0.5"/><circle cx="671" cy="256" r="0.45"/><circle cx="1146" cy="13" r="0.55"/><circle cx="542" cy="65" r="0.45"/><circle cx="444" cy="255" r="0.5"/><circle cx="643" cy="300" r="0.7"/><circle cx="379" cy="163" r="0.55"/><circle cx="18" cy="120" r="0.6"/><circle cx="304" cy="34" r="0.55"/><circle cx="103" cy="269" r="0.6"/><circle cx="737" cy="211" r="0.6"/><circle cx="855" cy="12" r="0.45"/><circle cx="690" cy="91" r="0.6"/><circle cx="1181" cy="46" r="0.6"/><circle cx="1091" cy="63" r="0.45"/><circle cx="306" cy="220" r="0.45"/><circle cx="275" cy="251" r="0.45"/><circle cx="306" cy="93" r="0.5"/><circle cx="1089" cy="180" r="0.45"/><circle cx="906" cy="88" r="0.45"/><circle cx="633" cy="207" r="0.55"/><circle cx="449" cy="115" r="0.6"/><circle cx="557" cy="147" r="0.5"/><circle cx="417" cy="315" r="0.55"/><circle cx="444" cy="117" r="0.5"/><circle cx="575" cy="144" r="0.5"/><circle cx="466" cy="16" r="0.7"/><circle cx="47" cy="42" r="0.5"/><circle cx="1142" cy="108" r="0.5"/><circle cx="392" cy="84" r="0.55"/><circle cx="401" cy="99" r="0.55"/><circle cx="1167" cy="94" r="0.5"/><circle cx="14" cy="256" r="0.7"/><circle cx="886" cy="145" r="0.55"/><circle cx="436" cy="90" r="0.55"/><circle cx="999" cy="81" r="0.5"/><circle cx="1029" cy="3" r="0.5"/><circle cx="1001" cy="257" r="0.55"/><circle cx="500" cy="8" r="0.45"/><circle cx="1022" cy="202" r="0.6"/><circle cx="292" cy="113" r="0.55"/><circle cx="696" cy="182" r="0.6"/><circle cx="375" cy="135" r="0.5"/><circle cx="588" cy="36" r="0.7"/><circle cx="229" cy="112" r="0.55"/><circle cx="97" cy="299" r="0.6"/><circle cx="360" cy="3" r="0.55"/><circle cx="35" cy="261" r="0.6"/><circle cx="547" cy="84" r="0.45"/><circle cx="736" cy="113" r="0.5"/><circle cx="29" cy="5" r="0.45"/><circle cx="796" cy="13" r="0.5"/><circle cx="1115" cy="97" r="0.7"/><circle cx="1165" cy="161" r="0.55"/><circle cx="1262" cy="94" r="0.5"/><circle cx="287" cy="205" r="0.5"/><circle cx="278" cy="145" r="0.6"/><circle cx="697" cy="32" r="0.45"/><circle cx="162" cy="53" r="0.5"/><circle cx="1036" cy="196" r="0.7"/><circle cx="1000" cy="302" r="0.55"/><circle cx="42" cy="45" r="0.6"/><circle cx="383" cy="18" r="0.7"/><circle cx="1131" cy="79" r="0.6"/><circle cx="877" cy="288" r="0.5"/><circle cx="91" cy="244" r="0.6"/><circle cx="64" cy="25" r="0.6"/><circle cx="809" cy="251" r="0.45"/><circle cx="1063" cy="303" r="0.45"/></g><g opacity="0.55"><circle cx="1190" cy="142" r="0.95"/><circle cx="479" cy="33" r="0.8"/><circle cx="504" cy="181" r="0.55"/><circle cx="847" cy="84" r="0.55"/><circle cx="730" cy="67" r="0.8"/><circle cx="405" cy="154" r="0.65"/><circle cx="1114" cy="95" r="0.65"/><circle cx="125" cy="229" r="0.8"/><circle cx="59" cy="41" r="0.65"/><circle cx="419" cy="178" r="0.8"/><circle cx="732" cy="72" r="0.8"/><circle cx="109" cy="35" r="0.55"/><circle cx="34" cy="262" r="0.95"/><circle cx="395" cy="64" r="0.95"/><circle cx="1024" cy="25" r="0.95"/><circle cx="541" cy="309" r="0.65"/><circle cx="138" cy="152" r="0.55"/><circle cx="795" cy="65" r="0.65"/><circle cx="1063" cy="241" r="0.8"/><circle cx="684" cy="211" r="0.8"/><circle cx="767" cy="93" r="0.65"/><circle cx="331" cy="66" r="0.95"/><circle cx="796" cy="120" r="0.95"/><circle cx="1173" cy="50" r="0.8"/><circle cx="534" cy="167" r="0.95"/><circle cx="1266" cy="190" r="0.65"/><circle cx="810" cy="112" r="0.95"/><circle cx="997" cy="107" r="0.95"/><circle cx="1265" cy="28" r="0.65"/><circle cx="130" cy="17" r="0.8"/><circle cx="153" cy="74" r="0.95"/><circle cx="221" cy="44" r="0.65"/><circle cx="537" cy="6" r="0.95"/><circle cx="1230" cy="228" r="0.95"/><circle cx="427" cy="128" r="0.8"/><circle cx="914" cy="199" r="0.95"/><circle cx="331" cy="99" r="0.55"/><circle cx="144" cy="144" r="0.8"/><circle cx="371" cy="112" r="0.65"/><circle cx="183" cy="166" r="0.55"/><circle cx="1050" cy="2" r="0.95"/><circle cx="1288" cy="156" r="0.65"/><circle cx="366" cy="20" r="0.55"/><circle cx="855" cy="188" r="0.65"/><circle cx="459" cy="25" r="0.65"/><circle cx="445" cy="80" r="0.8"/><circle cx="912" cy="13" r="0.8"/><circle cx="806" cy="116" r="0.95"/><circle cx="691" cy="47" r="0.55"/><circle cx="150" cy="5" r="0.8"/><circle cx="242" cy="96" r="0.55"/><circle cx="377" cy="183" r="0.95"/><circle cx="578" cy="119" r="0.65"/><circle cx="1" cy="220" r="0.55"/><circle cx="1086" cy="153" r="0.95"/><circle cx="1184" cy="38" r="0.8"/><circle cx="158" cy="122" r="0.8"/><circle cx="172" cy="5" r="0.8"/><circle cx="405" cy="10" r="0.65"/><circle cx="713" cy="179" r="0.95"/><circle cx="931" cy="64" r="0.65"/><circle cx="134" cy="14" r="0.55"/><circle cx="317" cy="52" r="0.65"/><circle cx="318" cy="64" r="0.65"/><circle cx="703" cy="22" r="0.55"/><circle cx="222" cy="274" r="0.55"/><circle cx="572" cy="52" r="0.8"/><circle cx="368" cy="12" r="0.65"/><circle cx="1231" cy="51" r="0.95"/><circle cx="62" cy="82" r="0.65"/><circle cx="1287" cy="158" r="0.55"/><circle cx="316" cy="49" r="0.8"/><circle cx="512" cy="170" r="0.95"/><circle cx="38" cy="72" r="0.55"/><circle cx="196" cy="176" r="0.65"/><circle cx="271" cy="109" r="0.95"/><circle cx="678" cy="300" r="0.8"/><circle cx="274" cy="184" r="0.8"/><circle cx="376" cy="35" r="0.65"/><circle cx="987" cy="50" r="0.65"/><circle cx="276" cy="94" r="0.65"/><circle cx="979" cy="119" r="0.65"/><circle cx="987" cy="202" r="0.55"/><circle cx="275" cy="79" r="0.95"/><circle cx="801" cy="90" r="0.95"/><circle cx="244" cy="127" r="0.55"/><circle cx="50" cy="85" r="0.8"/><circle cx="917" cy="89" r="0.8"/><circle cx="927" cy="134" r="0.55"/><circle cx="1039" cy="75" r="0.8"/><circle cx="913" cy="170" r="0.55"/><circle cx="983" cy="91" r="0.55"/><circle cx="204" cy="14" r="0.65"/><circle cx="1197" cy="353" r="0.65"/><circle cx="471" cy="139" r="0.95"/><circle cx="391" cy="153" r="0.65"/><circle cx="468" cy="180" r="0.65"/><circle cx="420" cy="157" r="0.55"/><circle cx="297" cy="229" r="0.8"/><circle cx="500" cy="238" r="0.8"/><circle cx="22" cy="171" r="0.55"/><circle cx="131" cy="184" r="0.8"/><circle cx="653" cy="167" r="0.65"/><circle cx="374" cy="64" r="0.55"/><circle cx="1188" cy="66" r="0.55"/><circle cx="527" cy="133" r="0.65"/><circle cx="980" cy="78" r="0.55"/><circle cx="478" cy="32" r="0.65"/><circle cx="1106" cy="145" r="0.65"/><circle cx="664" cy="104" r="0.65"/><circle cx="1040" cy="79" r="0.95"/><circle cx="32" cy="17" r="0.8"/><circle cx="463" cy="253" r="0.55"/><circle cx="1159" cy="44" r="0.95"/><circle cx="830" cy="11" r="0.8"/><circle cx="731" cy="181" r="0.95"/><circle cx="567" cy="12" r="0.55"/><circle cx="1260" cy="221" r="0.55"/><circle cx="1064" cy="263" r="0.8"/><circle cx="471" cy="141" r="0.65"/><circle cx="1098" cy="74" r="0.65"/><circle cx="1271" cy="199" r="0.8"/><circle cx="206" cy="106" r="0.65"/><circle cx="1161" cy="179" r="0.55"/><circle cx="168" cy="76" r="0.55"/><circle cx="478" cy="216" r="0.95"/><circle cx="244" cy="89" r="0.8"/><circle cx="1120" cy="123" r="0.95"/><circle cx="1111" cy="70" r="0.95"/><circle cx="79" cy="153" r="0.8"/><circle cx="957" cy="110" r="0.65"/><circle cx="903" cy="224" r="0.55"/><circle cx="976" cy="201" r="0.95"/><circle cx="875" cy="195" r="0.8"/><circle cx="195" cy="180" r="0.65"/><circle cx="553" cy="228" r="0.55"/><circle cx="335" cy="148" r="0.65"/><circle cx="1016" cy="134" r="0.65"/><circle cx="237" cy="152" r="0.55"/><circle cx="688" cy="101" r="0.65"/><circle cx="234" cy="19" r="0.65"/><circle cx="839" cy="179" r="0.95"/><circle cx="832" cy="117" r="0.8"/><circle cx="1093" cy="17" r="0.65"/><circle cx="614" cy="175" r="0.95"/><circle cx="264" cy="126" r="0.95"/><circle cx="814" cy="80" r="0.55"/><circle cx="798" cy="72" r="0.95"/><circle cx="664" cy="175" r="0.55"/><circle cx="35" cy="126" r="0.65"/><circle cx="186" cy="4" r="0.8"/><circle cx="811" cy="13" r="0.55"/><circle cx="479" cy="115" r="0.55"/><circle cx="446" cy="53" r="0.8"/><circle cx="247" cy="230" r="0.8"/><circle cx="790" cy="61" r="0.8"/><circle cx="1057" cy="186" r="0.65"/><circle cx="826" cy="99" r="0.8"/><circle cx="1065" cy="47" r="0.55"/><circle cx="266" cy="36" r="0.8"/><circle cx="815" cy="308" r="0.55"/><circle cx="743" cy="239" r="0.65"/><circle cx="580" cy="109" r="0.95"/><circle cx="928" cy="22" r="0.65"/><circle cx="8" cy="118" r="0.8"/><circle cx="838" cy="328" r="0.65"/><circle cx="1037" cy="172" r="0.55"/><circle cx="1218" cy="161" r="0.8"/><circle cx="549" cy="43" r="0.8"/><circle cx="1152" cy="90" r="0.8"/><circle cx="939" cy="27" r="0.55"/><circle cx="111" cy="125" r="0.65"/><circle cx="1114" cy="302" r="0.55"/><circle cx="40" cy="109" r="0.65"/><circle cx="318" cy="94" r="0.95"/><circle cx="703" cy="261" r="0.8"/><circle cx="756" cy="58" r="0.55"/><circle cx="191" cy="221" r="0.8"/><circle cx="705" cy="223" r="0.65"/><circle cx="433" cy="141" r="0.55"/><circle cx="896" cy="32" r="0.55"/><circle cx="384" cy="125" r="0.55"/><circle cx="869" cy="37" r="0.65"/><circle cx="93" cy="182" r="0.55"/><circle cx="1284" cy="195" r="0.8"/><circle cx="519" cy="245" r="0.55"/><circle cx="117" cy="68" r="0.55"/><circle cx="946" cy="132" r="0.65"/><circle cx="908" cy="151" r="0.8"/><circle cx="504" cy="152" r="0.95"/><circle cx="595" cy="86" r="0.95"/><circle cx="324" cy="3" r="0.8"/><circle cx="207" cy="87" r="0.95"/><circle cx="184" cy="71" r="0.95"/><circle cx="876" cy="219" r="0.55"/><circle cx="667" cy="341" r="0.65"/><circle cx="46" cy="183" r="0.8"/><circle cx="1031" cy="9" r="0.8"/><circle cx="927" cy="81" r="0.95"/></g><g opacity="0.8"><circle cx="324" cy="78" r="0.65"/><circle cx="403" cy="37" r="0.55"/><circle cx="159" cy="39" r="0.95"/><circle cx="392" cy="42" r="0.55"/><circle cx="973" cy="22" r="0.55"/><circle cx="247" cy="113" r="0.65"/><circle cx="1187" cy="66" r="0.95"/><circle cx="1109" cy="195" r="0.55"/><circle cx="627" cy="90" r="0.95"/><circle cx="1172" cy="63" r="0.8"/><circle cx="1030" cy="51" r="0.55"/><circle cx="614" cy="70" r="0.65"/><circle cx="693" cy="96" r="0.55"/><circle cx="360" cy="257" r="0.95"/><circle cx="784" cy="106" r="0.55"/><circle cx="1201" cy="73" r="0.65"/><circle cx="349" cy="146" r="0.8"/><circle cx="669" cy="6" r="0.55"/><circle cx="524" cy="130" r="0.65"/><circle cx="1211" cy="62" r="0.8"/><circle cx="606" cy="53" r="0.8"/><circle cx="142" cy="166" r="0.55"/><circle cx="883" cy="201" r="0.8"/><circle cx="212" cy="78" r="0.8"/><circle cx="1008" cy="105" r="0.8"/><circle cx="736" cy="141" r="0.55"/><circle cx="393" cy="3" r="0.65"/><circle cx="251" cy="278" r="0.55"/><circle cx="142" cy="121" r="0.95"/><circle cx="677" cy="142" r="0.95"/><circle cx="484" cy="50" r="0.55"/><circle cx="564" cy="161" r="0.8"/><circle cx="290" cy="249" r="0.8"/><circle cx="929" cy="76" r="0.65"/><circle cx="1126" cy="146" r="0.8"/><circle cx="45" cy="170" r="0.8"/><circle cx="440" cy="44" r="0.55"/><circle cx="603" cy="155" r="0.55"/><circle cx="477" cy="78" r="0.95"/><circle cx="82" cy="181" r="0.65"/><circle cx="748" cy="126" r="0.55"/><circle cx="920" cy="146" r="0.95"/><circle cx="388" cy="25" r="0.8"/><circle cx="837" cy="173" r="0.95"/><circle cx="859" cy="221" r="0.8"/><circle cx="957" cy="139" r="0.55"/><circle cx="881" cy="93" r="0.65"/><circle cx="476" cy="92" r="0.65"/><circle cx="1103" cy="109" r="0.8"/><circle cx="284" cy="33" r="0.65"/><circle cx="1098" cy="128" r="0.55"/><circle cx="1022" cy="13" r="0.8"/><circle cx="427" cy="127" r="0.8"/><circle cx="724" cy="102" r="0.95"/><circle cx="85" cy="214" r="0.95"/><circle cx="596" cy="267" r="0.95"/><circle cx="1047" cy="131" r="0.55"/><circle cx="445" cy="245" r="0.65"/><circle cx="973" cy="161" r="0.55"/><circle cx="231" cy="284" r="0.65"/><circle cx="26" cy="87" r="0.55"/><circle cx="931" cy="145" r="0.55"/><circle cx="277" cy="97" r="0.55"/><circle cx="99" cy="50" r="0.65"/><circle cx="570" cy="182" r="0.55"/><circle cx="1150" cy="202" r="0.65"/><circle cx="530" cy="37" r="0.55"/><circle cx="1299" cy="265" r="0.55"/><circle cx="677" cy="177" r="0.55"/><circle cx="297" cy="47" r="0.95"/><circle cx="61" cy="81" r="0.95"/><circle cx="230" cy="188" r="0.95"/><circle cx="810" cy="17" r="0.8"/><circle cx="671" cy="138" r="0.55"/><circle cx="478" cy="2" r="0.95"/><circle cx="1072" cy="9" r="0.8"/><circle cx="354" cy="308" r="0.65"/><circle cx="248" cy="121" r="0.8"/><circle cx="945" cy="264" r="0.65"/><circle cx="1293" cy="308" r="0.95"/><circle cx="179" cy="10" r="0.65"/><circle cx="106" cy="105" r="0.95"/><circle cx="673" cy="39" r="0.55"/><circle cx="521" cy="145" r="0.65"/><circle cx="676" cy="95" r="0.8"/><circle cx="721" cy="183" r="0.65"/><circle cx="485" cy="175" r="0.95"/><circle cx="954" cy="18" r="0.55"/><circle cx="461" cy="58" r="0.55"/><circle cx="724" cy="169" r="0.65"/><circle cx="243" cy="79" r="0.55"/><circle cx="101" cy="144" r="0.55"/><circle cx="225" cy="72" r="0.95"/><circle cx="576" cy="206" r="0.8"/><circle cx="1072" cy="222" r="0.8"/><circle cx="1022" cy="134" r="0.65"/><circle cx="720" cy="44" r="0.8"/><circle cx="1177" cy="79" r="0.65"/><circle cx="784" cy="81" r="0.55"/><circle cx="1262" cy="42" r="0.8"/><circle cx="1250" cy="120" r="0.95"/><circle cx="65" cy="19" r="0.95"/><circle cx="689" cy="109" r="0.55"/></g></g>
<path d="M0,631 L0.0,416.0 2.3,416.5 4.6,416.2 6.9,416.6 9.2,416.6 11.5,415.4 13.8,415.3 16.2,416.9 18.5,415.7 20.8,415.6 23.1,417.1 25.4,416.0 27.7,416.7 30.0,416.0 32.3,416.3 34.6,415.4 36.9,416.5 39.2,417.0 41.5,416.4 43.8,416.9 46.2,416.8 48.5,415.6 50.8,417.1 53.1,416.8 55.4,416.3 57.7,415.8 60.0,417.5 62.3,416.8 64.7,417.4 67.0,417.7 69.3,417.5 71.7,417.9 74.0,416.9 76.3,417.8 78.7,417.2 81.0,418.2 83.3,418.1 85.7,416.6 88.0,416.8 90.4,415.8 92.8,416.2 95.2,414.1 97.6,413.4 100.0,411.6 102.4,410.4 104.8,408.6 107.2,406.9 109.6,405.8 112.0,404.2 114.5,403.4 117.0,401.6 119.5,400.7 122.0,399.2 124.6,398.8 127.2,397.6 129.8,395.9 132.4,396.7 135.0,396.2 137.2,396.0 139.4,395.2 141.6,395.3 143.8,394.2 146.0,395.3 148.5,394.9 151.0,394.5 153.5,394.2 156.0,395.9 158.5,396.6 161.0,395.3 163.5,397.2 166.0,396.8 168.2,396.8 170.5,397.6 172.8,399.0 175.0,399.7 177.5,398.8 180.0,400.7 182.5,400.3 185.0,402.4 187.5,402.4 190.0,404.3 192.5,405.2 195.0,405.0 197.5,406.7 200.0,406.1 202.5,406.2 205.0,407.9 207.5,407.3 210.0,408.2 212.5,409.2 215.0,410.2 217.5,409.6 220.0,409.8 222.5,411.7 225.0,411.0 227.5,412.6 230.0,412.8 232.2,412.1 234.4,412.6 236.7,413.0 238.9,413.6 241.1,413.9 243.3,414.1 245.6,414.6 247.8,415.5 250.0,415.0 252.3,415.2 254.5,416.1 256.8,415.4 259.1,415.9 261.4,417.5 263.6,417.0 265.9,417.3 268.2,416.6 270.5,417.7 272.7,418.3 275.0,417.5 277.3,419.0 279.5,419.4 281.8,418.6 284.1,420.0 286.4,420.0 288.6,420.8 290.9,420.4 293.2,421.5 295.5,421.8 297.7,420.7 300.0,421.1 302.3,422.7 304.6,423.7 306.9,422.7 309.2,423.5 311.5,424.1 313.8,423.9 316.2,424.4 318.5,424.7 320.8,425.2 323.1,426.0 325.4,425.8 327.7,426.4 330.0,427.5 332.3,426.3 334.5,427.6 336.8,428.1 339.0,427.5 341.3,427.6 343.5,429.0 345.8,428.1 348.1,428.2 350.3,428.9 352.6,429.7 354.8,428.7 357.1,429.4 359.4,429.6 361.6,430.8 363.9,430.3 366.1,431.3 368.4,430.2 370.6,430.7 372.9,431.6 375.2,432.3 377.4,431.6 379.7,431.4 381.9,431.4 384.2,432.5 386.5,432.0 388.7,433.5 391.0,433.8 393.2,432.7 395.5,433.1 397.7,434.4 400.0,434.3 402.2,434.8 404.4,434.0 406.7,433.8 408.9,434.3 411.1,435.4 413.3,434.5 415.6,434.9 417.8,435.2 420.0,435.3 422.2,435.5 424.4,436.7 426.7,435.3 428.9,435.2 431.1,437.2 433.3,437.3 435.6,437.6 437.8,436.7 440.0,437.9 442.2,438.0 444.4,436.8 446.7,438.0 448.9,438.3 451.1,438.2 453.3,438.0 455.6,437.7 457.8,438.0 460.0,438.0 462.2,437.8 464.4,439.0 466.7,438.6 468.9,439.8 471.1,438.4 473.3,440.3 475.6,440.1 477.8,440.7 480.0,440.8 482.2,440.9 484.4,440.4 486.7,439.4 488.9,441.0 491.1,440.0 493.3,440.4 495.6,441.3 497.8,441.2 500.0,441.1 502.2,442.3 504.4,441.8 506.7,441.3 508.9,441.3 511.1,442.7 513.3,442.0 515.6,442.8 517.8,442.1 520.0,441.9 522.2,442.7 524.4,443.4 526.7,442.3 528.9,443.6 531.1,444.0 533.3,443.9 535.6,444.1 537.8,442.6 540.0,444.0 542.2,444.6 544.4,443.1 546.7,443.7 548.9,443.8 551.1,444.5 553.3,444.4 555.6,444.7 557.8,445.4 560.0,444.0 562.2,444.2 564.4,444.5 566.7,444.6 568.9,444.6 571.1,446.5 573.3,446.4 575.6,445.0 577.8,445.9 580.0,445.6 582.2,445.7 584.4,445.9 586.7,446.6 588.9,446.6 591.1,446.3 593.3,446.0 595.6,446.4 597.8,446.1 600.0,447.1 602.2,447.5 604.4,447.0 606.7,446.5 608.9,446.8 611.1,447.3 613.3,447.9 615.6,448.3 617.8,447.6 620.0,448.6 622.2,448.4 624.4,448.1 626.7,448.1 628.9,448.4 631.1,449.0 633.3,448.5 635.6,449.2 637.8,448.8 640.0,448.5 642.2,449.2 644.4,449.6 646.7,448.4 648.9,449.2 651.1,449.3 653.3,450.3 655.6,450.5 657.8,449.4 660.0,450.5 662.2,450.4 664.4,449.4 666.7,449.9 668.9,449.3 671.1,450.8 673.3,450.6 675.6,451.1 677.8,451.0 680.0,450.8 682.2,451.1 684.4,450.8 686.7,450.0 688.9,451.0 691.1,449.9 693.3,450.3 695.6,451.6 697.8,450.3 700.0,450.4 702.2,450.5 704.4,452.2 706.7,450.9 708.9,450.6 711.1,452.3 713.3,451.0 715.6,452.5 717.8,452.3 720.0,452.7 722.2,452.9 724.4,452.2 726.7,452.6 728.9,451.1 731.1,452.5 733.3,452.0 735.6,452.4 737.8,451.2 740.0,452.5 742.2,452.9 744.4,451.1 746.7,451.6 748.9,452.1 751.1,452.7 753.3,451.5 755.6,451.4 757.8,451.5 760.0,452.2 762.2,452.5 764.4,451.8 766.7,451.7 768.9,451.8 771.1,451.7 773.3,451.8 775.6,451.2 777.8,452.0 780.0,452.9 782.2,451.8 784.4,452.5 786.7,451.3 788.9,452.4 791.1,452.5 793.3,452.3 795.6,452.0 797.8,452.0 800.0,452.3 802.2,452.7 804.4,451.2 806.7,451.0 808.9,452.3 811.1,452.6 813.3,451.7 815.6,451.5 817.8,452.0 820.0,450.9 822.2,451.0 824.4,450.8 826.7,451.5 828.9,450.9 831.1,450.7 833.3,451.5 835.6,452.0 837.8,450.6 840.0,451.4 842.2,450.8 844.4,451.6 846.7,451.0 848.9,450.3 851.1,450.2 853.3,449.7 855.6,450.6 857.8,450.3 860.0,449.8 862.2,450.2 864.4,450.0 866.7,450.9 868.9,449.6 871.1,451.2 873.3,450.1 875.6,450.3 877.8,450.0 880.0,450.7 882.2,450.6 884.4,449.9 886.7,449.7 888.9,450.1 891.1,450.3 893.3,449.3 895.6,449.9 897.8,450.3 900.0,449.1 902.2,448.1 904.4,448.1 906.7,449.8 908.9,449.6 911.1,450.6 913.3,450.1 915.6,447.7 917.8,447.4 920.0,447.6 922.2,447.2 924.4,449.1 926.7,449.6 928.9,449.7 931.1,447.2 933.3,449.4 935.6,447.2 937.8,447.5 940.0,448.6 942.2,446.1 944.4,446.0 946.7,448.8 948.9,446.6 951.1,446.8 953.3,447.6 955.6,447.8 957.8,445.2 960.0,446.4 962.3,446.6 964.5,446.6 966.8,445.4 969.0,446.7 971.3,447.9 973.5,445.6 975.8,446.0 978.1,444.3 980.3,444.7 982.6,446.0 984.8,443.8 987.1,446.5 989.4,446.5 991.6,443.2 993.9,446.3 996.1,443.9 998.4,445.3 1000.6,445.1 1002.9,443.2 1005.2,444.4 1007.4,444.2 1009.7,444.6 1011.9,442.4 1014.2,444.1 1016.5,444.7 1018.7,443.5 1021.0,442.8 1023.2,441.0 1025.5,442.3 1027.7,441.6 1030.0,442.8 1032.2,442.4 1034.4,441.7 1036.6,440.0 1038.8,441.5 1041.0,441.1 1043.2,439.2 1045.5,441.6 1047.7,440.4 1049.9,438.1 1052.1,440.9 1054.3,437.7 1056.5,438.1 1058.7,439.3 1060.9,438.6 1063.1,438.1 1065.3,438.2 1067.5,437.2 1069.8,436.4 1072.0,435.6 1074.2,434.9 1076.4,437.1 1078.6,437.0 1080.8,435.9 1083.0,436.4 1085.3,434.5 1087.6,433.8 1089.9,433.8 1092.1,435.2 1094.4,431.6 1096.7,432.9 1099.0,431.5 1101.3,433.1 1103.6,431.1 1105.9,430.6 1108.1,430.4 1110.4,430.5 1112.7,431.0 1115.0,428.9 1117.3,430.5 1119.7,427.4 1122.0,427.7 1124.3,426.8 1126.7,426.5 1129.0,428.8 1131.3,428.3 1133.7,425.9 1136.0,425.6 1138.3,426.2 1140.7,427.1 1143.0,427.1 1145.3,426.5 1147.7,425.6 1150.0,423.7 1152.3,424.5 1154.5,423.5 1156.8,424.6 1159.1,424.6 1161.4,423.1 1163.6,423.1 1165.9,425.0 1168.2,421.9 1170.5,424.7 1172.7,424.9 1175.0,425.0 1177.3,422.6 1179.5,423.1 1181.8,423.1 1184.1,423.1 1186.4,424.3 1188.6,423.0 1190.9,421.4 1193.2,423.3 1195.5,421.8 1197.7,422.0 1200.0,422.4 1202.3,419.4 1204.5,422.2 1206.8,421.6 1209.1,420.8 1211.4,420.8 1213.6,420.4 1215.9,419.2 1218.2,420.3 1220.5,418.3 1222.7,419.9 1225.0,420.3 1227.3,419.4 1229.5,419.7 1231.8,421.0 1234.1,420.6 1236.4,417.6 1238.6,419.9 1240.9,419.1 1243.2,416.8 1245.5,417.8 1247.7,417.1 1250.0,416.4 1252.3,418.0 1254.5,419.3 1256.8,416.8 1259.1,418.7 1261.4,417.8 1263.6,415.5 1265.9,418.1 1268.2,416.9 1270.5,418.0 1272.7,417.0 1275.0,416.9 1277.3,415.2 1279.5,416.8 1281.8,417.1 1284.1,416.6 1286.4,414.9 1288.6,415.9 1290.9,414.7 1293.2,413.1 1295.5,412.6 1297.7,412.6 1300.0,414.0 L1300,631 Z" fill="url(#mg)"/>
<path d="M0,631 L0.0,416.0 2.3,416.5 4.6,416.2 6.9,416.6 9.2,416.6 11.5,415.4 13.8,415.3 16.2,416.9 18.5,415.7 20.8,415.6 23.1,417.1 25.4,416.0 27.7,416.7 30.0,416.0 32.3,416.3 34.6,415.4 36.9,416.5 39.2,417.0 41.5,416.4 43.8,416.9 46.2,416.8 48.5,415.6 50.8,417.1 53.1,416.8 55.4,416.3 57.7,415.8 60.0,417.5 62.3,416.8 64.7,417.4 67.0,417.7 69.3,417.5 71.7,417.9 74.0,416.9 76.3,417.8 78.7,417.2 81.0,418.2 83.3,418.1 85.7,416.6 88.0,416.8 90.4,415.8 92.8,416.2 95.2,414.1 97.6,413.4 100.0,411.6 102.4,410.4 104.8,408.6 107.2,406.9 109.6,405.8 112.0,404.2 114.5,403.4 117.0,401.6 119.5,400.7 122.0,399.2 124.6,398.8 127.2,397.6 129.8,395.9 132.4,396.7 135.0,396.2 137.2,396.0 139.4,395.2 141.6,395.3 143.8,394.2 146.0,395.3 148.5,394.9 151.0,394.5 153.5,394.2 156.0,395.9 158.5,396.6 161.0,395.3 163.5,397.2 166.0,396.8 168.2,396.8 170.5,397.6 172.8,399.0 175.0,399.7 177.5,398.8 180.0,400.7 182.5,400.3 185.0,402.4 187.5,402.4 190.0,404.3 192.5,405.2 195.0,405.0 197.5,406.7 200.0,406.1 202.5,406.2 205.0,407.9 207.5,407.3 210.0,408.2 212.5,409.2 215.0,410.2 217.5,409.6 220.0,409.8 222.5,411.7 225.0,411.0 227.5,412.6 230.0,412.8 232.2,412.1 234.4,412.6 236.7,413.0 238.9,413.6 241.1,413.9 243.3,414.1 245.6,414.6 247.8,415.5 250.0,415.0 252.3,415.2 254.5,416.1 256.8,415.4 259.1,415.9 261.4,417.5 263.6,417.0 265.9,417.3 268.2,416.6 270.5,417.7 272.7,418.3 275.0,417.5 277.3,419.0 279.5,419.4 281.8,418.6 284.1,420.0 286.4,420.0 288.6,420.8 290.9,420.4 293.2,421.5 295.5,421.8 297.7,420.7 300.0,421.1 302.3,422.7 304.6,423.7 306.9,422.7 309.2,423.5 311.5,424.1 313.8,423.9 316.2,424.4 318.5,424.7 320.8,425.2 323.1,426.0 325.4,425.8 327.7,426.4 330.0,427.5 332.3,426.3 334.5,427.6 336.8,428.1 339.0,427.5 341.3,427.6 343.5,429.0 345.8,428.1 348.1,428.2 350.3,428.9 352.6,429.7 354.8,428.7 357.1,429.4 359.4,429.6 361.6,430.8 363.9,430.3 366.1,431.3 368.4,430.2 370.6,430.7 372.9,431.6 375.2,432.3 377.4,431.6 379.7,431.4 381.9,431.4 384.2,432.5 386.5,432.0 388.7,433.5 391.0,433.8 393.2,432.7 395.5,433.1 397.7,434.4 400.0,434.3 402.2,434.8 404.4,434.0 406.7,433.8 408.9,434.3 411.1,435.4 413.3,434.5 415.6,434.9 417.8,435.2 420.0,435.3 422.2,435.5 424.4,436.7 426.7,435.3 428.9,435.2 431.1,437.2 433.3,437.3 435.6,437.6 437.8,436.7 440.0,437.9 442.2,438.0 444.4,436.8 446.7,438.0 448.9,438.3 451.1,438.2 453.3,438.0 455.6,437.7 457.8,438.0 460.0,438.0 462.2,437.8 464.4,439.0 466.7,438.6 468.9,439.8 471.1,438.4 473.3,440.3 475.6,440.1 477.8,440.7 480.0,440.8 482.2,440.9 484.4,440.4 486.7,439.4 488.9,441.0 491.1,440.0 493.3,440.4 495.6,441.3 497.8,441.2 500.0,441.1 502.2,442.3 504.4,441.8 506.7,441.3 508.9,441.3 511.1,442.7 513.3,442.0 515.6,442.8 517.8,442.1 520.0,441.9 522.2,442.7 524.4,443.4 526.7,442.3 528.9,443.6 531.1,444.0 533.3,443.9 535.6,444.1 537.8,442.6 540.0,444.0 542.2,444.6 544.4,443.1 546.7,443.7 548.9,443.8 551.1,444.5 553.3,444.4 555.6,444.7 557.8,445.4 560.0,444.0 562.2,444.2 564.4,444.5 566.7,444.6 568.9,444.6 571.1,446.5 573.3,446.4 575.6,445.0 577.8,445.9 580.0,445.6 582.2,445.7 584.4,445.9 586.7,446.6 588.9,446.6 591.1,446.3 593.3,446.0 595.6,446.4 597.8,446.1 600.0,447.1 602.2,447.5 604.4,447.0 606.7,446.5 608.9,446.8 611.1,447.3 613.3,447.9 615.6,448.3 617.8,447.6 620.0,448.6 622.2,448.4 624.4,448.1 626.7,448.1 628.9,448.4 631.1,449.0 633.3,448.5 635.6,449.2 637.8,448.8 640.0,448.5 642.2,449.2 644.4,449.6 646.7,448.4 648.9,449.2 651.1,449.3 653.3,450.3 655.6,450.5 657.8,449.4 660.0,450.5 662.2,450.4 664.4,449.4 666.7,449.9 668.9,449.3 671.1,450.8 673.3,450.6 675.6,451.1 677.8,451.0 680.0,450.8 682.2,451.1 684.4,450.8 686.7,450.0 688.9,451.0 691.1,449.9 693.3,450.3 695.6,451.6 697.8,450.3 700.0,450.4 702.2,450.5 704.4,452.2 706.7,450.9 708.9,450.6 711.1,452.3 713.3,451.0 715.6,452.5 717.8,452.3 720.0,452.7 722.2,452.9 724.4,452.2 726.7,452.6 728.9,451.1 731.1,452.5 733.3,452.0 735.6,452.4 737.8,451.2 740.0,452.5 742.2,452.9 744.4,451.1 746.7,451.6 748.9,452.1 751.1,452.7 753.3,451.5 755.6,451.4 757.8,451.5 760.0,452.2 762.2,452.5 764.4,451.8 766.7,451.7 768.9,451.8 771.1,451.7 773.3,451.8 775.6,451.2 777.8,452.0 780.0,452.9 782.2,451.8 784.4,452.5 786.7,451.3 788.9,452.4 791.1,452.5 793.3,452.3 795.6,452.0 797.8,452.0 800.0,452.3 802.2,452.7 804.4,451.2 806.7,451.0 808.9,452.3 811.1,452.6 813.3,451.7 815.6,451.5 817.8,452.0 820.0,450.9 822.2,451.0 824.4,450.8 826.7,451.5 828.9,450.9 831.1,450.7 833.3,451.5 835.6,452.0 837.8,450.6 840.0,451.4 842.2,450.8 844.4,451.6 846.7,451.0 848.9,450.3 851.1,450.2 853.3,449.7 855.6,450.6 857.8,450.3 860.0,449.8 862.2,450.2 864.4,450.0 866.7,450.9 868.9,449.6 871.1,451.2 873.3,450.1 875.6,450.3 877.8,450.0 880.0,450.7 882.2,450.6 884.4,449.9 886.7,449.7 888.9,450.1 891.1,450.3 893.3,449.3 895.6,449.9 897.8,450.3 900.0,449.1 902.2,448.1 904.4,448.1 906.7,449.8 908.9,449.6 911.1,450.6 913.3,450.1 915.6,447.7 917.8,447.4 920.0,447.6 922.2,447.2 924.4,449.1 926.7,449.6 928.9,449.7 931.1,447.2 933.3,449.4 935.6,447.2 937.8,447.5 940.0,448.6 942.2,446.1 944.4,446.0 946.7,448.8 948.9,446.6 951.1,446.8 953.3,447.6 955.6,447.8 957.8,445.2 960.0,446.4 962.3,446.6 964.5,446.6 966.8,445.4 969.0,446.7 971.3,447.9 973.5,445.6 975.8,446.0 978.1,444.3 980.3,444.7 982.6,446.0 984.8,443.8 987.1,446.5 989.4,446.5 991.6,443.2 993.9,446.3 996.1,443.9 998.4,445.3 1000.6,445.1 1002.9,443.2 1005.2,444.4 1007.4,444.2 1009.7,444.6 1011.9,442.4 1014.2,444.1 1016.5,444.7 1018.7,443.5 1021.0,442.8 1023.2,441.0 1025.5,442.3 1027.7,441.6 1030.0,442.8 1032.2,442.4 1034.4,441.7 1036.6,440.0 1038.8,441.5 1041.0,441.1 1043.2,439.2 1045.5,441.6 1047.7,440.4 1049.9,438.1 1052.1,440.9 1054.3,437.7 1056.5,438.1 1058.7,439.3 1060.9,438.6 1063.1,438.1 1065.3,438.2 1067.5,437.2 1069.8,436.4 1072.0,435.6 1074.2,434.9 1076.4,437.1 1078.6,437.0 1080.8,435.9 1083.0,436.4 1085.3,434.5 1087.6,433.8 1089.9,433.8 1092.1,435.2 1094.4,431.6 1096.7,432.9 1099.0,431.5 1101.3,433.1 1103.6,431.1 1105.9,430.6 1108.1,430.4 1110.4,430.5 1112.7,431.0 1115.0,428.9 1117.3,430.5 1119.7,427.4 1122.0,427.7 1124.3,426.8 1126.7,426.5 1129.0,428.8 1131.3,428.3 1133.7,425.9 1136.0,425.6 1138.3,426.2 1140.7,427.1 1143.0,427.1 1145.3,426.5 1147.7,425.6 1150.0,423.7 1152.3,424.5 1154.5,423.5 1156.8,424.6 1159.1,424.6 1161.4,423.1 1163.6,423.1 1165.9,425.0 1168.2,421.9 1170.5,424.7 1172.7,424.9 1175.0,425.0 1177.3,422.6 1179.5,423.1 1181.8,423.1 1184.1,423.1 1186.4,424.3 1188.6,423.0 1190.9,421.4 1193.2,423.3 1195.5,421.8 1197.7,422.0 1200.0,422.4 1202.3,419.4 1204.5,422.2 1206.8,421.6 1209.1,420.8 1211.4,420.8 1213.6,420.4 1215.9,419.2 1218.2,420.3 1220.5,418.3 1222.7,419.9 1225.0,420.3 1227.3,419.4 1229.5,419.7 1231.8,421.0 1234.1,420.6 1236.4,417.6 1238.6,419.9 1240.9,419.1 1243.2,416.8 1245.5,417.8 1247.7,417.1 1250.0,416.4 1252.3,418.0 1254.5,419.3 1256.8,416.8 1259.1,418.7 1261.4,417.8 1263.6,415.5 1265.9,418.1 1268.2,416.9 1270.5,418.0 1272.7,417.0 1275.0,416.9 1277.3,415.2 1279.5,416.8 1281.8,417.1 1284.1,416.6 1286.4,414.9 1288.6,415.9 1290.9,414.7 1293.2,413.1 1295.5,412.6 1297.7,412.6 1300.0,414.0 L1300,631 Z" fill="url(#mgx)"/>
<path d="M0,560 L0.0,496.2 3.0,496.3 6.1,496.3 9.1,496.4 12.1,496.0 15.2,496.2 18.2,494.7 21.2,495.3 24.2,496.0 27.3,495.4 30.3,495.7 33.3,494.4 36.4,494.9 39.4,494.4 42.4,494.8 45.5,494.8 48.5,493.8 51.5,494.0 54.5,494.0 57.6,494.9 60.6,494.6 63.6,493.5 66.7,494.5 69.7,493.3 72.7,494.0 75.8,493.1 78.8,492.8 81.8,494.1 84.8,493.0 87.9,492.9 90.9,494.0 93.9,493.8 97.0,492.8 100.0,493.7 103.0,493.2 106.1,493.5 109.1,492.8 112.1,494.1 115.2,493.8 118.2,494.3 121.2,494.3 124.2,493.4 127.3,493.6 130.3,493.4 133.3,493.4 136.4,493.4 139.4,493.9 142.4,494.4 145.5,493.6 148.5,494.7 151.5,494.3 154.5,494.3 157.6,495.2 160.6,494.8 163.6,494.6 166.7,495.0 169.7,495.4 172.7,494.5 175.8,496.0 178.8,494.6 181.8,495.9 184.8,496.1 187.9,494.9 190.9,496.2 193.9,495.6 197.0,496.0 200.0,495.2 203.0,495.4 206.0,495.7 209.0,497.1 212.0,496.0 215.0,497.0 218.0,497.4 221.0,497.6 224.0,496.8 227.0,496.9 230.0,497.3 233.0,497.8 236.0,496.9 239.0,498.0 242.0,498.2 245.0,498.5 248.0,497.3 251.0,498.8 254.0,497.6 257.0,498.1 260.0,498.7 263.0,499.3 266.0,498.5 269.0,499.6 272.0,499.1 275.0,498.8 278.0,499.0 281.0,498.9 284.0,498.8 287.0,499.1 290.0,500.1 293.0,500.7 296.0,499.5 299.0,499.4 302.0,501.0 305.0,500.4 308.0,500.3 311.0,500.2 314.0,500.9 317.0,501.4 320.0,500.9 323.0,501.0 326.0,500.5 329.0,502.0 332.0,500.7 335.0,501.6 338.0,502.2 341.0,501.2 344.0,502.3 347.0,502.8 350.0,502.4 353.0,502.7 356.0,501.8 359.0,502.4 362.0,502.1 365.0,503.3 368.0,502.5 371.0,502.9 374.0,503.9 377.0,503.8 380.0,504.1 383.0,503.4 386.0,503.5 389.0,504.1 392.0,503.8 395.0,503.6 398.0,503.9 401.0,503.6 404.0,504.1 407.0,505.2 410.0,505.2 413.0,504.8 416.0,504.7 419.0,504.6 422.0,504.3 425.0,504.7 428.0,505.7 431.0,505.9 434.0,505.2 437.0,506.0 440.0,506.1 443.0,506.1 446.0,506.2 449.0,506.4 452.0,505.9 455.0,506.6 458.0,506.0 461.0,506.5 464.0,507.0 467.0,507.0 470.0,506.5 473.0,507.7 476.0,507.3 479.0,507.3 482.0,506.5 485.0,507.5 488.0,507.1 491.0,507.9 494.0,507.7 497.0,508.4 500.0,508.2 503.0,508.6 506.1,507.9 509.1,508.5 512.1,508.7 515.2,508.9 518.2,508.2 521.2,509.1 524.2,509.2 527.3,509.0 530.3,509.5 533.3,509.6 536.4,508.9 539.4,509.0 542.4,508.5 545.5,509.7 548.5,509.9 551.5,509.3 554.5,509.7 557.6,509.8 560.6,509.9 563.6,509.1 566.7,510.1 569.7,509.9 572.7,510.1 575.8,509.8 578.8,510.2 581.8,510.5 584.8,510.3 587.9,510.5 590.9,509.5 593.9,509.8 597.0,510.3 600.0,510.7 603.0,510.1 606.1,510.9 609.1,510.9 612.1,510.1 615.2,510.8 618.2,510.5 621.2,510.3 624.2,510.5 627.3,510.9 630.3,510.7 633.3,510.8 636.4,510.7 639.4,511.4 642.4,511.4 645.5,511.8 648.5,511.9 651.5,511.4 654.5,512.5 657.6,511.1 660.6,511.9 663.6,511.7 666.7,512.0 669.7,511.6 672.7,512.8 675.8,512.2 678.8,511.7 681.8,512.7 684.8,512.0 687.9,512.8 690.9,512.5 693.9,513.0 697.0,513.7 700.0,513.5 703.0,512.8 706.1,513.4 709.1,513.1 712.1,512.6 715.2,512.2 718.2,512.9 721.2,512.8 724.2,513.4 727.3,513.3 730.3,512.7 733.3,512.3 736.4,513.1 739.4,511.6 742.4,511.7 745.5,512.4 748.5,512.5 751.5,511.7 754.5,512.4 757.6,512.8 760.6,511.9 763.6,511.9 766.7,511.6 769.7,511.6 772.7,512.7 775.8,511.7 778.8,512.6 781.8,512.4 784.8,511.9 787.9,511.3 790.9,512.4 793.9,511.6 797.0,511.4 800.0,511.2 803.0,512.2 806.1,511.4 809.1,511.0 812.1,511.3 815.2,510.7 818.2,511.4 821.2,511.1 824.2,510.8 827.3,511.5 830.3,511.6 833.3,510.2 836.4,511.0 839.4,510.5 842.4,511.6 845.5,511.3 848.5,510.4 851.5,510.4 854.5,510.1 857.6,511.4 860.6,510.3 863.6,510.7 866.7,510.5 869.7,510.7 872.7,510.6 875.8,510.8 878.8,509.7 881.8,510.7 884.8,509.9 887.9,510.2 890.9,509.9 893.9,509.8 897.0,510.1 900.0,509.9 903.0,509.7 906.1,510.3 909.1,510.0 912.1,509.0 915.2,509.3 918.2,509.6 921.2,510.2 924.2,510.1 927.3,509.5 930.3,508.6 933.3,509.8 936.4,509.2 939.4,509.3 942.4,509.5 945.5,509.3 948.5,509.0 951.5,509.6 954.5,508.7 957.6,508.7 960.6,509.4 963.6,508.2 966.7,508.3 969.7,509.1 972.7,507.9 975.8,509.0 978.8,508.7 981.8,508.3 984.8,508.0 987.9,508.7 990.9,508.8 993.9,507.5 997.0,508.0 1000.0,508.1 1003.0,507.9 1006.1,507.6 1009.1,507.3 1012.1,507.9 1015.2,508.2 1018.2,506.9 1021.2,507.1 1024.2,508.0 1027.3,507.9 1030.3,507.7 1033.3,506.6 1036.4,507.6 1039.4,508.0 1042.4,507.9 1045.5,507.4 1048.5,506.3 1051.5,507.5 1054.5,506.5 1057.6,507.1 1060.6,507.5 1063.6,507.1 1066.7,506.1 1069.7,506.3 1072.7,507.2 1075.8,505.9 1078.8,506.6 1081.8,506.2 1084.8,505.8 1087.9,506.4 1090.9,505.5 1093.9,505.5 1097.0,505.9 1100.0,505.3 1103.0,505.2 1106.1,506.0 1109.1,506.3 1112.1,506.4 1115.2,505.2 1118.2,505.6 1121.2,505.4 1124.2,505.8 1127.3,505.6 1130.3,506.2 1133.3,505.3 1136.4,504.7 1139.4,505.7 1142.4,504.8 1145.5,505.5 1148.5,505.3 1151.5,505.9 1154.5,505.3 1157.6,505.3 1160.6,504.7 1163.6,505.1 1166.7,504.6 1169.7,505.4 1172.7,504.9 1175.8,504.3 1178.8,504.4 1181.8,504.6 1184.8,505.1 1187.9,504.2 1190.9,505.0 1193.9,504.8 1197.0,503.9 1200.0,504.8 1203.0,503.8 1206.1,503.8 1209.1,504.5 1212.1,503.9 1215.2,504.9 1218.2,504.2 1221.2,503.9 1224.2,504.6 1227.3,503.3 1230.3,504.4 1233.3,503.3 1236.4,503.4 1239.4,504.6 1242.4,504.2 1245.5,503.4 1248.5,503.2 1251.5,504.5 1254.5,503.9 1257.6,504.1 1260.6,503.0 1263.6,503.7 1266.7,503.3 1269.7,503.0 1272.7,503.1 1275.8,503.5 1278.8,503.1 1281.8,503.1 1284.8,502.6 1287.9,503.7 1290.9,503.4 1293.9,503.6 1297.0,502.9 1300.0,503.0 L1300,560 Z" fill="url(#rgx)" mask="url(#rm)"/>
<rect x="0" y="515" width="500" height="116" fill="url(#lm)"/>
<rect x="0" y="580" width="1300" height="51" fill="url(#tk)"/>
<path opacity=".8" d="M760,631 L760.0,630.9 762.5,629.8 765.0,628.3 767.5,629.9 770.0,626.4 772.5,627.3 775.0,627.8 777.5,624.4 780.0,625.2 782.5,624.6 785.0,622.0 787.5,622.4 790.0,622.7 792.5,620.9 795.0,620.9 797.5,618.2 800.0,617.5 802.5,616.2 805.0,616.5 807.5,616.9 810.0,615.0 812.5,614.6 815.0,612.5 817.5,612.7 820.0,609.7 822.5,609.6 825.0,610.2 827.5,609.6 830.0,607.9 832.5,606.2 835.0,606.1 837.5,605.2 840.0,604.7 842.5,605.7 845.0,603.0 847.5,605.0 850.0,604.8 852.5,602.0 855.0,602.8 857.5,603.0 860.0,601.3 862.5,602.4 865.0,603.7 867.5,601.0 870.0,602.3 872.5,600.7 875.0,602.1 877.5,603.0 880.0,600.7 882.5,600.0 885.0,600.2 887.5,601.5 890.0,599.8 892.5,599.9 895.0,601.2 897.5,602.4 900.0,600.7 902.6,600.7 905.1,601.6 907.7,599.9 910.2,601.5 912.8,600.2 915.3,601.7 917.9,602.9 920.4,600.0 923.0,601.7 925.6,601.9 928.1,600.5 930.7,600.9 933.2,603.3 935.8,603.4 938.3,600.6 940.9,602.5 943.4,603.4 946.0,601.2 948.6,602.7 951.2,601.2 953.8,602.5 956.5,603.8 959.1,603.8 961.7,604.7 964.3,602.8 966.9,604.0 969.5,605.9 972.2,605.3 974.8,605.2 977.4,605.4 980.0,607.6 982.5,606.6 985.0,605.1 987.5,607.9 990.0,606.7 992.5,607.3 995.0,607.0 997.5,608.0 1000.0,607.9 1002.5,607.5 1005.0,609.5 1007.5,608.2 1010.0,610.7 1012.5,608.5 1015.0,611.3 1017.5,611.7 1020.0,611.0 1022.5,612.0 1025.0,610.8 1027.5,612.7 1030.0,612.0 1032.5,611.7 1035.0,614.4 1037.5,612.9 1040.0,613.1 1042.5,615.0 1045.0,613.7 1047.5,615.0 1050.0,613.7 1052.5,616.2 1055.0,614.6 1057.5,614.2 1060.0,617.5 1062.5,615.3 1065.0,618.1 1067.5,618.5 1070.0,617.6 1072.5,616.0 1075.0,616.5 1077.5,617.3 1080.0,618.1 1082.5,619.2 1085.0,620.6 1087.5,619.0 1090.0,618.6 1092.5,620.3 1095.0,619.2 1097.5,619.4 1100.0,621.2 1102.5,621.9 1105.0,620.2 1107.5,621.8 1110.0,622.9 1112.5,623.4 1115.0,622.5 1117.5,624.4 1120.0,622.4 1122.5,624.5 1125.0,625.0 1127.5,625.7 1130.0,624.7 1132.5,623.8 1135.0,623.9 1137.5,625.8 1140.0,625.0 1142.5,626.8 1145.0,625.4 1147.5,628.0 1150.0,626.5 1152.5,626.2 1155.0,627.1 1157.5,628.4 1160.0,629.0 1162.5,628.9 1165.0,628.5 1167.5,629.9 1170.0,631.7 1172.5,630.8 1175.0,631.0 L1175,631 Z" fill="url(#hg)"/>

</svg>
<style>
#tb{position:absolute;left:449.500px;top:2px;width:403.500px;height:22.400px;background:#25263d;border-radius:0 0 2px 2px}
#tb .sb{position:absolute;left:81.800px;top:3.500px;width:145px;height:16.200px;background:#f1f2f6;border-radius:2px}
#tb .sb span{position:absolute;left:26px;top:0;line-height:16.200px;font-size:9.600px;color:#a2a5ad}
#tb svg.i{position:absolute;top:5.500px;margin-top:.6px}
</style>
<div id="tb">
<svg class="abs" style="left:7.300px;top:5.800px" width="18.500" height="12.800" viewBox="0 0 20 14"><path d="M0.5 7.6 L18.5 0.6 L13.2 6.9 L18.2 13.4 Z" fill="#fff"/><path d="M6 7.4 L13.2 6.9" stroke="#25263d" stroke-width="1"/></svg>
<div class="abs" style="left:29px;top:4.100px;font-size:11.400px;line-height:16px;color:#fff;letter-spacing:.33px;-webkit-text-stroke:.3px #fff">AirDroid</div>
<div class="sb"><svg class="abs" style="left:5.300px;top:4.600px" width="6.800" height="7.600" viewBox="0 0 8 9"><path d="M0 0 L4.6 4.5 L0 9Z" fill="#35b6e8"/><path d="M0 0 L6 3.2 L4.6 4.5Z" fill="#5ac878"/><path d="M0 9 L6 5.8 L4.6 4.5Z" fill="#e8465a"/><path d="M6 3.2 L8 4.5 L6 5.8 L4.6 4.5Z" fill="#f8c22a"/></svg><span>Buscar</span></div>
<!-- tshirt -->
<svg class="i" style="left:233.5px" width="13" height="12" viewBox="0 0 13 12"><path d="M4 .6 L.4 2.8 L1.9 5.4 L3.1 4.8 V11 H9.9 V4.8 L11.1 5.4 L12.6 2.8 L9 .6 C8.4 2.2 4.6 2.2 4 .6Z" fill="#fff"/><circle cx="10.2" cy="9.8" r="1.7" fill="#e5453c"/></svg>
<!-- mail -->
<svg class="i" style="left:255px;top:6.5px" width="13" height="11" viewBox="0 0 13 11"><path d="M.5 .8 H11.2 V5.5 H8.4 V9.6 H.5Z" fill="#fff"/><path d="M.8 1.2 L5.85 5.3 L10.9 1.2" stroke="#25263d" stroke-width="1.1" fill="none"/><path d="M10.6 6.2 V9.8 M8.8 8 H12.4" stroke="#fff" stroke-width="1.3"/></svg>
<!-- phone -->
<svg class="i" style="left:276.5px;top:6px" width="11" height="12" viewBox="0 0 11 12"><path d="M1.2 .8 L3.3 .5 L4.3 3.2 L3 4.2 C3.7 5.9 5 7.3 6.7 8.2 L7.8 6.9 L10.4 8.1 L10 10.3 C9.7 11.2 8.9 11.5 8 11.3 C4.2 10.3 1.4 7.2 .6 3.3 C.4 2.2 .5 1.2 1.2 .8Z" fill="#fff"/></svg>
<!-- bell -->
<svg class="i" style="left:296.300px;top:5.700px" width="10" height="11.600" viewBox="0 0 12 13"><path d="M6 .5 C6.6 .5 7 .9 7 1.5 C9 2 10 3.600 10 5.600 C10 8 10.600 9 11.600 10 V10.700 H.4 V10 C1.400 9 2 8 2 5.600 C2 3.600 3 2 5 1.5 C5 .9 5.400 .5 6 .5Z M4.600 11.300 H7.400 C7.400 12.100 6.800 12.600 6 12.600 C5.200 12.600 4.600 12.100 4.600 11.300Z" fill="#fff"/></svg>
<!-- copy -->
<svg class="i" style="left:315px;top:5.800px" width="11.500" height="12" viewBox="0 0 11.500 12"><rect x=".8" y=".8" width="6.200" height="8.600" rx="1.100" fill="none" stroke="#fff" stroke-width="1.400"/><rect x="4.400" y="2.800" width="6.200" height="8.400" rx="1.100" fill="#25263d" stroke="#fff" stroke-width="1.400"/></svg>
<!-- gear -->
<svg class="i" style="left:337px;top:6.500px" width="10.600" height="10.600" viewBox="-6 -6 12 12"><g fill="#fff"><circle r="4"/><g id="tg"><rect x="-1.300" y="-5.800" width="2.600" height="11.600" rx=".4"/></g><use href="#tg" transform="rotate(45)"/><use href="#tg" transform="rotate(90)"/><use href="#tg" transform="rotate(135)"/></g><circle r="1.700" fill="#25263d"/></svg>
<!-- pen -->
<svg class="i" style="left:356.300px;top:6.200px" width="11.300" height="11.300" viewBox="0 0 12 12"><path d="M.8 9 L7.800 2 L9.800 4 L2.800 11 L.5 11.400Z" fill="#fff"/><path d="M8.500 1.300 L9.300 .5 L11.300 2.500 L10.500 3.300Z" fill="#fff"/><path d="M6 11.200 H11.500" stroke="#fff" stroke-width="1.200"/></svg>
<div class="abs" style="left:376.800px;top:4px;width:1px;height:16px;background:#4d4f68"></div>
<!-- power -->
<svg class="i" style="left:384px;top:5.700px" width="12.300" height="12.300" viewBox="0 0 13 13"><path d="M4 2.800 A4.700 4.700 0 1 0 9 2.800" fill="none" stroke="#fff" stroke-width="1.600" stroke-linecap="round"/><path d="M6.500 .8 V6" stroke="#fff" stroke-width="1.600" stroke-linecap="round"/></svg>
</div>
<div id="desk">
<div class="ic" style="left:21.2px;top:44.7px"><svg width="38" height="38" viewBox="0 0 38 38" overflow="visible"><path d="M19 0 C5.5 0 0 5.5 0 19 S5.5 38 19 38 S38 32.5 38 19 S32.5 0 19 0Z" fill="#f0603e"/><circle cx="12.5" cy="13" r="2.6" fill="#fbd9cc"/><path d="M5.5 27.5 L13.5 18 L17 22 L23 15 L33 27.5Z" fill="#fff"/><path d="M13.5 18 L17 22 L12 27.5 H5.500Z" fill="#fde3da"/></svg></div>
<div class="lb" style="left:40.2px;top:91.5px">Fotos</div>
<div class="ic" style="left:92.7px;top:44.7px"><svg width="38" height="38" viewBox="0 0 38 38" overflow="visible"><path d="M19 0 C5.5 0 0 5.5 0 19 S5.5 38 19 38 S38 32.5 38 19 S32.5 0 19 0Z" fill="#4cc67e"/><path d="M9.500 9.300 C10.500 8 12 8 12.800 9.500 L14.600 13.500 C15 14.500 14.600 15.300 13.800 16 C13.200 16.600 13.300 17.300 13.800 18.200 C15.300 20.800 17.300 23 20 24.700 C20.800 25.200 21.500 25.200 22 24.600 C22.700 23.800 23.600 23.500 24.500 24 L28 26 C29.300 26.800 29.300 28.200 28.300 29.200 C26.500 31 24.200 31 21.800 30 C15 27 10.500 21.500 8.500 15.300 C7.800 13 8 10.800 9.500 9.300Z" fill="#fff"/><path d="M19.500 10.500 C23 12 25.500 14.800 26.600 18.300 M21.500 7.500 C26 9.500 28.800 13 30 17.500" stroke="#b9ecd0" stroke-width="1.300" fill="none" stroke-linecap="round"/></svg></div>
<div class="lb" style="left:111.7px;top:91.5px;width:53.5px;text-align:left">Registro ...</div>
<div class="ic" style="left:163.7px;top:44.7px"><svg width="38" height="38" viewBox="0 0 38 38" overflow="visible"><path d="M19 0 C5.5 0 0 5.5 0 19 S5.5 38 19 38 S38 32.5 38 19 S32.5 0 19 0Z" fill="#5d84d8"/><rect x="9.500" y="9.500" width="8.600" height="8.600" rx=".8" fill="#fff"/><rect x="20" y="9.500" width="8.600" height="8.600" rx=".8" fill="#fff"/><rect x="9.500" y="20" width="8.600" height="8.600" rx=".8" fill="#fff"/><rect x="20" y="20" width="8.600" height="8.600" rx=".8" fill="#e3e9fa"/></svg></div>
<div class="lb" style="left:182.7px;top:91.5px">Apps</div>
<div class="ic" style="left:235.0px;top:44.7px"><svg width="38" height="38" viewBox="0 0 38 38" overflow="visible"><circle cx="19" cy="19" r="20" fill="#3dc85b"/><rect x="8" y="10" width="22.500" height="15.500" rx="1.500" fill="none" stroke="#fff" stroke-width="1.800"/><rect x="15.500" y="21" width="7" height="11" rx="1.400" fill="#3dc85b" stroke="#fff" stroke-width="1.600"/><path d="M15.300 18.500 C17.500 16.600 20.500 16.600 22.700 18.500 M13.300 16.200 C16.600 13.300 21.400 13.300 24.700 16.200" stroke="#fff" stroke-width="1.500" fill="none" stroke-linecap="round"/><path d="M20 -1 H39 V7.200 H23.500 C21.500 7.200 20 5.500 20 3.500Z" fill="#f5922c"/><text x="29.700" y="5.600" font-size="6.200" font-weight="bold" font-style="italic" fill="#fff" text-anchor="middle" font-family="Liberation Sans,sans-serif">New</text></svg></div>
<div class="lb" style="left:254.0px;top:91.5px">CastToWeb</div>
<div class="ic" style="left:21.2px;top:133.7px"><svg width="38" height="38" viewBox="0 0 38 38" overflow="visible"><path d="M19 0 C5.5 0 0 5.5 0 19 S5.5 38 19 38 S38 32.5 38 19 S32.5 0 19 0Z" fill="#2fbcc0"/><path d="M19 9 C25 9 29.500 13 29.500 18 C29.500 22.500 26 26 21 26.800 L19.500 29.800 L18 26.900 C12.500 26.500 8.500 22.800 8.500 18 C8.500 13 13 9 19 9Z" fill="#e9f8f8"/><circle cx="14.700" cy="17.800" r="1.100" fill="#2fbcc0"/><circle cx="19" cy="17.800" r="1.100" fill="#2fbcc0"/><circle cx="23.300" cy="17.800" r="1.100" fill="#2fbcc0"/></svg></div>
<div class="lb" style="left:40.2px;top:180.5px">Mensajes</div>
<div class="ic" style="left:92.7px;top:133.7px"><svg width="38" height="38" viewBox="0 0 38 38" overflow="visible"><path d="M19 0 C5.5 0 0 5.5 0 19 S5.5 38 19 38 S38 32.5 38 19 S32.5 0 19 0Z" fill="#f8ae25"/><path d="M14 9 L29 11.500 L26.500 28 L11.500 25.500Z" fill="#fbd98f"/><path d="M8 12 L24 9.500 L27.500 28.500 L11.500 31.500Z" fill="#fff"/><circle cx="17.500" cy="17" r="2.600" fill="#f8ae25"/><path d="M12.800 25.300 C12.800 21.500 15 20.500 18 20.300 C21 20.100 23 21 23.600 23.800Z" fill="#f8ae25"/></svg></div>
<div class="lb" style="left:111.7px;top:180.5px;width:53.5px;text-align:left">Contacto...</div>
<div class="ic" style="left:163.7px;top:133.7px"><svg width="38" height="38" viewBox="0 0 38 38" overflow="visible"><path d="M19 0 C5.5 0 0 5.5 0 19 S5.5 38 19 38 S38 32.5 38 19 S32.5 0 19 0Z" fill="#2bbabc"/><path d="M19 7.500 C24.500 7.500 28.500 11.500 28.500 16.500 C28.500 21.500 23.500 26.500 19 31 C14.500 26.500 9.500 21.500 9.500 16.500 C9.500 11.500 13.500 7.500 19 7.500Z" fill="#fff"/><path d="M14 24.500 L19 31 L24 24.500 C21 26.500 17 26.500 14 24.500Z" fill="#cfeff0"/><circle cx="19" cy="16.300" r="4.300" fill="#2bbabc"/></svg></div>
<div class="lb" style="left:182.7px;top:180.5px;width:53.5px;text-align:left">Buscar T...</div>
<div class="ic" style="left:235.0px;top:133.7px"><svg width="38" height="38" viewBox="0 0 38 38" overflow="visible"><path d="M19 1 C6 1 1 6 1 19 S6 37 19 37 S37 32 37 19 S32 1 19 1Z" fill="#3a3c66" stroke="#fff" stroke-width="1.700"/><path d="M19 10.500 V27.500 M10.500 19 H27.500" stroke="#fff" stroke-width="2.400"/></svg></div>
<div class="lb" style="left:254.0px;top:180.5px">Añadir</div>
<div class="ic" style="left:21.2px;top:222.7px"><svg width="38" height="38" viewBox="0 0 38 38" overflow="visible"><path d="M19 0 C5.5 0 0 5.5 0 19 S5.5 38 19 38 S38 32.5 38 19 S32.5 0 19 0Z" fill="#f0a236"/><path d="M8.500 11.500 C8.500 10.700 9 10.200 9.800 10.200 H16.500 L18.500 12.500 H28.200 C29 12.500 29.500 13 29.500 13.800 V26.500 C29.500 27.300 29 27.800 28.200 27.800 H9.800 C9 27.800 8.500 27.300 8.500 26.500Z" fill="#fff"/><path d="M8.500 15 H29.500 V14 H8.500Z" fill="#fbe0b5"/></svg></div>
<div class="lb" style="left:40.2px;top:269.5px">Archivos</div>
<div class="ic" style="left:92.7px;top:222.7px"><svg width="38" height="38" viewBox="0 0 38 38" overflow="visible"><path d="M19 0 C5.5 0 0 5.5 0 19 S5.5 38 19 38 S38 32.5 38 19 S32.5 0 19 0Z" fill="#3bb3f2"/><rect x="10" y="8.500" width="18.500" height="21" rx="1.200" fill="#fff"/><rect x="12.300" y="8.500" width="1.200" height="21" fill="#9fd8f8"/><circle cx="20.800" cy="16" r="2.600" fill="#3bb3f2"/><path d="M15.800 24 C15.800 20.800 18 19.800 20.800 19.800 C23.600 19.800 25.800 20.800 25.800 24Z" fill="#3bb3f2"/></svg></div>
<div class="lb" style="left:111.7px;top:269.5px">Contactos</div>
<div class="ic" style="left:163.7px;top:222.7px"><svg width="38" height="38" viewBox="0 0 38 38" overflow="visible"><path d="M19 0 C5.5 0 0 5.5 0 19 S5.5 38 19 38 S38 32.5 38 19 S32.5 0 19 0Z" fill="#3db4f4"/><text x="19" y="27.500" font-size="25" font-weight="bold" fill="#fff" text-anchor="middle" font-family="Liberation Sans,sans-serif">?</text></svg></div>
<div class="lb" style="left:182.7px;top:269.5px">Ayuda</div>
<div class="ic" style="left:21.2px;top:311.7px"><svg width="38" height="38" viewBox="0 0 38 38" overflow="visible"><path d="M19 0 C5.5 0 0 5.5 0 19 S5.5 38 19 38 S38 32.5 38 19 S32.5 0 19 0Z" fill="#7892a0"/><path d="M13 10.500 L14 8.800 H21 L22 10.500Z" fill="#fff"/><rect x="8" y="10.500" width="22.500" height="17" rx="1.500" fill="#fff"/><circle cx="19.300" cy="19.500" r="4.600" fill="#fff" stroke="#7892a0" stroke-width="1.400"/><circle cx="19.300" cy="19.500" r="3.200" fill="#e6eff3"/><rect x="23.500" y="12" width="4.500" height="1.600" fill="#c9d5db"/></svg></div>
<div class="lb" style="left:40.2px;top:358.5px">Cámara</div>
<div class="ic" style="left:92.7px;top:311.7px"><svg width="38" height="38" viewBox="0 0 38 38" overflow="visible"><circle cx="19" cy="19" r="19.500" fill="#548fe2"/><path d="M12.500 9.500 C12.500 7.800 14 7.300 15.300 8 L28.300 16.700 C29.800 17.700 29.800 19.500 28.300 20.500 L15.300 28.500 C14 29.300 12.500 28.600 12.500 27Z" fill="#fff"/><path d="M12.500 22 C16 25 20 25.500 24 23.200 L15.300 28.500 C14 29.300 12.500 28.600 12.500 27Z" fill="#c9dcf8"/></svg></div>
<div class="lb" style="left:111.7px;top:358.5px">Vídeos</div>
<div class="ic" style="left:163.7px;top:311.7px"><svg width="38" height="38" viewBox="0 0 38 38" overflow="visible"><path d="M19 0 C5.5 0 0 5.5 0 19 S5.5 38 19 38 S38 32.5 38 19 S32.5 0 19 0Z" fill="#7892a0"/><g transform="translate(19 19)" fill="#fff"><circle r="8"/><g id="G"><rect x="-2.700" y="-11.300" width="5.400" height="22.600" rx="1.200"/></g><use href="#G" transform="rotate(60)"/><use href="#G" transform="rotate(120)"/><circle r="3.300" fill="#7892a0"/></g></svg></div>
<div class="lb" style="left:182.7px;top:358.5px">Cuenta</div>
<div class="ic" style="left:21.2px;top:400.7px"><svg width="38" height="38" viewBox="0 0 38 38" overflow="visible"><path d="M19 0 C5.5 0 0 5.5 0 19 S5.5 38 19 38 S38 32.5 38 19 S32.5 0 19 0Z" fill="#43c46f"/><path d="M12.500 11.500 L14.500 9.500 H16.500 L17.500 12.500 H20.500 L21.500 9.500 H23.500 L25.500 11.500 L28 18 H10Z" fill="#fff"/><circle cx="12.200" cy="21.500" r="5.800" fill="#fff"/><circle cx="25.800" cy="21.500" r="5.800" fill="#fff"/><circle cx="12.200" cy="21.500" r="3.300" fill="#8fdfae"/><circle cx="25.800" cy="21.500" r="3.300" fill="#8fdfae"/><rect x="17" y="16" width="4" height="5" fill="#fff"/></svg></div>
<div class="lb" style="left:40.2px;top:447.5px">Control</div>
<div class="ic" style="left:92.7px;top:400.7px"><svg width="38" height="38" viewBox="0 0 38 38" overflow="visible"><path d="M19 0 C5.5 0 0 5.5 0 19 S5.5 38 19 38 S38 32.5 38 19 S32.5 0 19 0Z" fill="#7b6ddb"/><path d="M15.500 11 L27.500 7.500 V23.500 H25.300 V13.500 L17.700 15.700 V26.500 H15.500Z" fill="#fff"/><path d="M17.700 11.700 L25.300 9.500 V13.500 L17.700 15.700Z" fill="#d9d3f6"/><ellipse cx="13.800" cy="26.500" rx="4" ry="3.200" fill="#fff"/><ellipse cx="23.600" cy="23.500" rx="4" ry="3.200" fill="#fff"/></svg></div>
<div class="lb" style="left:111.7px;top:447.5px">Música</div>
<div class="ic" style="left:163.7px;top:400.7px"><svg width="38" height="38" viewBox="0 0 38 38" overflow="visible"><path d="M19 0 C5.5 0 0 5.5 0 19 S5.5 38 19 38 S38 32.5 38 19 S32.5 0 19 0Z" fill="#7b6ddb"/><path d="M12 10.500 H26 L31.500 16.500 L19 30 L6.500 16.500Z" fill="#fff"/><path d="M6.500 16.500 H31.500 M12 10.500 L15 16.500 L19 30 L23 16.500 L26 10.500 M15 16.500 L19 10.500 L23 16.500" stroke="#d3cdf3" stroke-width=".9" fill="none"/></svg></div>
<div class="lb" style="left:182.7px;top:447.5px">Premium</div>
<div class="ic" style="left:21.2px;top:489.7px"><svg width="38" height="38" viewBox="0 0 38 38" overflow="visible"><path d="M19 0 C5.5 0 0 5.5 0 19 S5.5 38 19 38 S38 32.5 38 19 S32.5 0 19 0Z" fill="#3db1f5"/><path d="M11.500 9 L24.300 27.500 M26.500 9 L13.700 27.500" stroke="#fff" stroke-width="2.600" stroke-linecap="round"/><path d="M11.500 9 L19 20 L17.800 21.500 Z M26.500 9 L19 20 L20.200 21.500Z" fill="#fff"/><circle cx="11.800" cy="27.300" r="3.100" fill="#3db1f5" stroke="#fff" stroke-width="1.800"/><circle cx="26.200" cy="27.300" r="3.100" fill="#3db1f5" stroke="#fff" stroke-width="1.800"/></svg></div>
<div class="lb" style="left:40.2px;top:536.5px">Reflejo</div>
<div class="ic" style="left:92.7px;top:489.7px"><svg width="38" height="38" viewBox="0 0 38 38" overflow="visible"><path d="M19 0 C5.5 0 0 5.5 0 19 S5.5 38 19 38 S38 32.5 38 19 S32.5 0 19 0Z" fill="#ee5a3d"/><path d="M19 7 C20 7 20.800 7.700 20.900 8.700 C24.500 9.700 26.300 12.700 26.300 16.500 C26.300 21.500 27.300 23.500 29.500 25.500 V26.800 H8.500 V25.500 C10.700 23.500 11.700 21.500 11.700 16.500 C11.700 12.700 13.500 9.700 17.100 8.700 C17.200 7.700 18 7 19 7Z" fill="#fff"/><path d="M16.300 28 H21.700 C21.700 29.600 20.500 30.600 19 30.600 C17.500 30.600 16.300 29.600 16.300 28Z" fill="#fde0da"/></svg></div>
<div class="lb" style="left:111.7px;top:536.5px;width:53.5px;text-align:left">Tonos de...</div>
<div class="ic" style="left:163.7px;top:489.7px"><svg width="38" height="38" viewBox="0 0 38 38" overflow="visible"><path d="M19 0 C5.5 0 0 5.5 0 19 S5.5 38 19 38 S38 32.5 38 19 S32.5 0 19 0Z" fill="#ef5f3c"/><ellipse cx="19" cy="20.500" rx="16.500" ry="4.200" fill="none" stroke="#fbd3c8" stroke-width="2" transform="rotate(-18 19 20.500)"/><circle cx="19" cy="18.500" r="9.300" fill="#fbe4dd"/><path d="M12 14 C15 12 18 13 19 16 C21 18 24 17 26 19 C25 22 22 24 19 23 C16 22 13 19 12 14Z" fill="#f6c3b5" opacity=".8"/><path d="M3.500 24.500 C8 26.500 20 23.500 29.500 19" stroke="#fff" stroke-width="2" fill="none" stroke-linecap="round" transform="rotate(0)"/></svg></div>
<div class="lb" style="left:182.7px;top:536.5px">Discovery</div>
</div>
<style>
#fw{position:absolute;left:321.5px;top:100.4px;width:658.5px;height:427.6px;background:#f4f6f9;box-shadow:0 2px 14px rgba(5,5,20,.55);overflow:hidden;color:#333}
#fw .tt{position:absolute;left:0;top:0;width:100%;height:19.8px;background:linear-gradient(#e4e8ee,#dde2e9)}
#fw .tl{position:absolute;left:0;top:19.8px;width:100%;height:25px;background:#f2f4f8;border-bottom:1px solid #e2e5ea}
#fw .bc{position:absolute;left:0;top:44.8px;width:100%;height:19.5px;background:#fafbfc;border-bottom:1px solid #e6e8ec}
#fw .tree{position:absolute;left:0;top:64.3px;width:125.5px;height:340px;background:#fff;border-right:1px solid #e3e5e9;overflow:hidden}
#fw .main{position:absolute;left:126px;top:64.3px;right:0;height:340px;background:#f3f4f7}
#fw .st{position:absolute;left:0;top:404.2px;width:100%;height:23.4px;background:#dfe2e8;font-size:7.3px;color:#4a4a4a}
#fw .tr{position:absolute;left:0;height:16.26px;width:125px}
#fw .tr .fd{position:absolute;left:26px;top:2.800px}
#fw .tr .ar{position:absolute;left:18.300px;top:5.600px;width:0;height:0;border-left:3.600px solid #1f4fa8;border-top:2.900px solid transparent;border-bottom:2.900px solid transparent}
#fw .tx{position:absolute;font-size:7.3px;line-height:10px;color:#3a3a3a;white-space:nowrap}
#fw .btn{position:absolute;top:24.300px;height:17.600px;line-height:17.800px;text-align:center;font-size:8.1px;border-radius:1.5px;white-space:nowrap}
#fw .tb i.s{position:absolute;width:1px;height:11px;top:27px;background:#d4d8de}
</style>
<div id="fw">
<div class="tt">
<svg class="abs" style="left:3.700px;top:3.300px" width="13.200" height="13.200" viewBox="0 0 13 13"><rect x=".3" y=".3" width="12.400" height="12.400" rx="3.800" fill="#f0a236"/><path d="M2.800 3.800 H5.600 L6.400 4.700 H10.200 V9.600 H2.800Z" fill="#fff"/></svg>
<div class="abs" style="left:20.5px;top:4.300px;font-size:8.300px;line-height:11px;font-weight:bold;letter-spacing:.45px;color:#6d6d6d">Archivos</div>
<div class="abs" style="left:615px;top:12.500px;width:6px;height:1.300px;background:#767e8c"></div>
<div class="abs" style="left:629.500px;top:7px;width:6.500px;height:6.500px;border:1.200px solid #767e8c;border-top-width:1.700px"></div>
<svg class="abs" style="left:643.500px;top:7px" width="7" height="7" viewBox="0 0 7 7"><path d="M.6 .6 L6.400 6.400 M6.400 .6 L.6 6.400" stroke="#6a7280" stroke-width="1.400"/></svg>
</div>
<div class="tl tb">
</div>
<!-- search -->
<div class="abs" style="left:8.500px;top:23.700px;width:126.500px;height:16.800px;background:#fff;border:1px solid #dcdfe5;border-radius:1.500px"></div>
<div class="abs" style="left:116.800px;top:24.700px;width:17.200px;height:14.800px;background:#f3f4f7;border-left:1px solid #e0e3e8"></div>
<div class="abs" style="left:12.300px;top:25.600px;font-size:9.300px;line-height:13px;color:#a6aab1">Buscar</div>
<svg class="abs" style="left:121px;top:26.500px" width="10" height="11" viewBox="0 0 10 11"><circle cx="4.200" cy="4.400" r="3.100" fill="none" stroke="#6f7682" stroke-width="1.200"/><path d="M6.400 6.800 L9 10" stroke="#6f7682" stroke-width="1.500" stroke-linecap="round"/></svg>
<!-- view toggle -->
<div class="abs" style="left:151.500px;top:24px;width:21.500px;height:16.500px;background:#fff;border:1px solid #e1e4e9;border-radius:1.500px 0 0 1.500px"></div>
<div class="abs" style="left:172.600px;top:23.700px;width:22.500px;height:17.200px;background:#f8fbff;border:1px solid #5a94d8;border-radius:1.500px"></div>
<svg class="abs" style="left:157.600px;top:28.500px" width="9" height="8" viewBox="0 0 9 8"><path d="M0 1 H1.300 M2.600 1 H8.500 M0 4 H1.300 M2.600 4 H8.500 M0 7 H1.300 M2.600 7 H8.500" stroke="#5f6c80" stroke-width="1.100"/></svg>
<svg class="abs" style="left:179.600px;top:28.700px" width="8.400" height="7.400" viewBox="0 0 8 7"><path d="M.3 .3 H3 V2.700 H.3Z M4.600 .3 H7.300 V2.700 H4.600Z M.3 4.300 H3 V6.700 H.3Z M4.600 4.300 H7.300 V6.700 H4.600Z" fill="#1f4fb0"/></svg>
<!-- refresh -->
<svg class="abs" style="left:202.500px;top:26.700px" width="11" height="12" viewBox="0 0 11 12"><path d="M8.900 5.200 A3.900 3.900 0 1 1 5.300 2.400" fill="none" stroke="#66707f" stroke-width="1.300"/><path d="M4.700 .2 L7.800 2.400 L4.700 4.700Z" fill="#66707f"/></svg>
<div class="abs" style="left:222px;top:26.500px;width:1px;height:11.500px;background:#d6dae0"></div>
<!-- new folder -->
<svg class="abs" style="left:229px;top:27px" width="13" height="11" viewBox="0 0 13 11"><path d="M.5 .8 H4.500 L5.500 2 H10.800 V4 H.5Z" fill="#6a84ab"/><path d="M.5 4.500 H10.800 V9.800 H.5Z" fill="#7b93b6"/><path d="M10.500 6.500 V10.800 M8.400 8.700 H12.600" stroke="#44546c" stroke-width="1.300"/></svg>
<!-- rename -->
<svg class="abs" style="left:249.500px;top:26.500px" width="13" height="12" viewBox="0 0 13 12"><rect x=".5" y="3" width="8" height="6" fill="#c6d1e0" stroke="#8a9bb5" stroke-width=".8"/><path d="M2 5 H4 M2 7 H4 M5 5 H7 M5 7 H7" stroke="#6b7f9a" stroke-width=".8"/><path d="M10.500 1 V11 M9 1 H12 M9 11 H12" stroke="#5f708a" stroke-width="1.200"/></svg>
<!-- cut -->
<svg class="abs" style="left:269.500px;top:26px" width="11" height="13" viewBox="0 0 11 13"><path d="M1.500 .8 L8.200 9.500 M9 .8 L2.800 9.500" stroke="#5f6f88" stroke-width="1.300"/><circle cx="2.200" cy="10.600" r="1.500" fill="none" stroke="#5f6f88" stroke-width="1"/><circle cx="8.800" cy="10.600" r="1.500" fill="none" stroke="#5f6f88" stroke-width="1"/></svg>
<!-- copy -->
<svg class="abs" style="left:288.500px;top:26.500px" width="12" height="12" viewBox="0 0 12 12"><path d="M.8 .8 H7 V9.800 H.8Z" fill="#55657f"/><path d="M3.800 2.300 H10.800 V11.300 H3.800Z" fill="#c5cfdd" stroke="#6b7c96" stroke-width="1"/></svg>
<!-- paste disabled -->
<svg class="abs" style="left:309.500px;top:26.500px" width="10" height="12" viewBox="0 0 10 12"><rect x=".8" y="1.800" width="8.400" height="9.400" fill="#dfe3e9" stroke="#cfd4dc" stroke-width="1"/><rect x="3" y=".5" width="4" height="2.400" fill="#cfd4dc"/><rect x="2.800" y="4.500" width="4.400" height="4.500" fill="#cdd2da"/></svg>
<!-- info -->
<svg class="abs" style="left:328.500px;top:27px" width="11" height="11" viewBox="0 0 11 11"><circle cx="5.500" cy="5.500" r="4.700" fill="none" stroke="#68748a" stroke-width="1.100"/><path d="M5.500 4.600 V8 M4.500 8.200 H6.500 M4.600 4.700 H5.500" stroke="#68748a" stroke-width="1.100"/><circle cx="5.500" cy="3" r=".8" fill="#68748a"/></svg>
<!-- star disabled -->
<svg class="abs" style="left:350px;top:27px" width="11" height="11" viewBox="0 0 11 11"><path d="M5.500 .8 L6.900 4 L10.300 4.300 L7.700 6.600 L8.500 10 L5.500 8.200 L2.500 10 L3.300 6.600 L.7 4.300 L4.100 4Z" fill="#eceff3" stroke="#d8dde4" stroke-width=".8"/></svg>
<div class="abs" style="left:368px;top:26.500px;width:1px;height:11.500px;background:#d6dae0"></div>
<!-- trash -->
<svg class="abs" style="left:377px;top:26.500px" width="10" height="12" viewBox="0 0 10 12"><path d="M.5 2.300 H9.500 M3.300 2 V.7 H6.700 V2" stroke="#62708a" stroke-width="1.200" fill="none"/><path d="M1.300 3.400 H8.700 V11.300 H1.300Z" fill="#8393ac"/><path d="M3.300 4.800 V10 M5 4.800 V10 M6.700 4.800 V10" stroke="#dfe4ec" stroke-width=".7"/></svg>
<div class="btn" style="left:437.300px;width:57.700px;background:#fff;color:#8b8f96;border:1px solid #e3e6ea;line-height:15.800px">Descargar</div>
<div class="btn" style="left:498.300px;width:74.600px;background:#2b7ddb;color:#fff;-webkit-text-stroke:.2px #fff">Cargar archivo</div>
<div class="btn" style="left:576.200px;width:75.600px;background:#2b7ddb;color:#fff;-webkit-text-stroke:.2px #fff">Cargar carpeta</div>
<div class="bc">
<svg class="abs" style="left:7.500px;top:6.300px" width="11" height="9" viewBox="0 0 11 9"><path d="M10.500 4.500 H1.800 M5 1 L1.500 4.500 L5 8" fill="none" stroke="#4b7fb2" stroke-width="1.500"/></svg>
<svg class="abs" style="left:29.500px;top:6.300px" width="11" height="9" viewBox="0 0 11 9"><path d="M.5 4.500 H9.200 M6 1 L9.500 4.500 L6 8" fill="none" stroke="#b4bcc6" stroke-width="1.500"/></svg>
<div class="abs" style="left:48.800px;top:4.500px;font-size:8.750px;line-height:12px;color:#4f7396;white-space:nowrap">Tarjeta SD <span style="color:#9aa7b5;margin:0 1.600px">/</span> FujiFilm <span style="color:#9aa7b5;margin:0 1.600px">/</span></div>
</div>
<div class="tree">
<svg class="abs" style="left:18.500px;top:4.500px" width="14" height="13" viewBox="0 0 14 13"><path d="M7 .4 L8.900 4.500 L13.500 5 L10.100 8.100 L11.100 12.600 L7 10.300 L2.900 12.600 L3.900 8.100 L.5 5 L5.100 4.500Z" fill="#f7c02c"/></svg>
<div class="tx" style="left:38px;top:5.800px">Favoritos&nbsp; ( 1 )</div>
<div class="tr" style="top:19.400px"><i class="ar" style="left:9.800px;top:7.600px;border:0;border-right:4px solid #1f4fa8;border-top:4px solid transparent;transform:none"></i><svg class="fd" style="left:19.800px" width="12" height="11" viewBox="0 0 12 11"><path d="M.5 1.500 C.5 1 .9 .6 1.400 .6 H4.500 L5.500 1.800 H10.800 C11.300 1.800 11.600 2.100 11.600 2.600 V9.800 C11.600 10.300 11.300 10.600 10.800 10.600 H1.400 C.9 10.600 .5 10.300 .5 9.800Z" fill="#f2b63c"/><path d="M.5 3.600 H11.600 V9.800 C11.600 10.300 11.300 10.600 10.800 10.600 H1.400 C.9 10.600 .5 10.300 .5 9.800Z" fill="#f8cf6a"/><path d="M.5 3.400 H11.600" stroke="#fbe6a8" stroke-width=".6"/></svg></div>
<div class="tx" style="left:38px;top:22.100px">Tarjeta SD</div>
<div style="position:absolute;left:0;top:-64.300px"><div class="tr" style="top:100.3px"><i class="ar"></i><svg class="fd" width="12" height="11" viewBox="0 0 12 11"><path d="M.5 1.500 C.5 1 .9 .6 1.400 .6 H4.500 L5.500 1.800 H10.800 C11.300 1.800 11.600 2.100 11.600 2.600 V9.800 C11.600 10.300 11.300 10.600 10.800 10.600 H1.400 C.9 10.600 .5 10.300 .5 9.800Z" fill="#f2b63c"/><path d="M.5 3.600 H11.600 V9.800 C11.600 10.300 11.300 10.600 10.800 10.600 H1.400 C.9 10.600 .5 10.300 .5 9.800Z" fill="#f8cf6a"/><path d="M.5 3.400 H11.600" stroke="#fbe6a8" stroke-width=".6"/></svg></div><div class="tr" style="top:116.6px"><svg class="fd" width="12" height="11" viewBox="0 0 12 11"><path d="M.5 1.500 C.5 1 .9 .6 1.400 .6 H4.500 L5.500 1.800 H10.800 C11.300 1.800 11.600 2.100 11.600 2.600 V9.800 C11.600 10.300 11.300 10.600 10.800 10.600 H1.400 C.9 10.600 .5 10.300 .5 9.800Z" fill="#f2b63c"/><path d="M.5 3.600 H11.600 V9.800 C11.600 10.300 11.300 10.600 10.800 10.600 H1.400 C.9 10.600 .5 10.300 .5 9.800Z" fill="#f8cf6a"/><path d="M.5 3.400 H11.600" stroke="#fbe6a8" stroke-width=".6"/></svg></div><div class="tr" style="top:132.8px"><i class="ar"></i><svg class="fd" width="12" height="11" viewBox="0 0 12 11"><path d="M.5 1.500 C.5 1 .9 .6 1.400 .6 H4.500 L5.500 1.800 H10.800 C11.300 1.800 11.600 2.100 11.600 2.600 V9.800 C11.600 10.300 11.300 10.600 10.800 10.600 H1.400 C.9 10.600 .5 10.300 .5 9.800Z" fill="#f2b63c"/><path d="M.5 3.600 H11.600 V9.800 C11.600 10.300 11.300 10.600 10.800 10.600 H1.400 C.9 10.600 .5 10.300 .5 9.800Z" fill="#f8cf6a"/><path d="M.5 3.400 H11.600" stroke="#fbe6a8" stroke-width=".6"/></svg></div><div class="tr" style="top:149.1px"><svg class="fd" width="12" height="11" viewBox="0 0 12 11"><path d="M.5 1.500 C.5 1 .9 .6 1.400 .6 H4.500 L5.500 1.800 H10.800 C11.300 1.800 11.600 2.100 11.600 2.600 V9.800 C11.600 10.300 11.300 10.600 10.800 10.600 H1.400 C.9 10.600 .5 10.300 .5 9.800Z" fill="#f2b63c"/><path d="M.5 3.600 H11.600 V9.800 C11.600 10.300 11.300 10.600 10.800 10.600 H1.400 C.9 10.600 .5 10.300 .5 9.800Z" fill="#f8cf6a"/><path d="M.5 3.400 H11.600" stroke="#fbe6a8" stroke-width=".6"/></svg></div><div class="tr" style="top:165.3px"><i class="ar"></i><svg class="fd" width="12" height="11" viewBox="0 0 12 11"><path d="M.5 1.500 C.5 1 .9 .6 1.400 .6 H4.500 L5.500 1.800 H10.800 C11.300 1.800 11.600 2.100 11.600 2.600 V9.800 C11.600 10.300 11.300 10.600 10.800 10.600 H1.400 C.9 10.600 .5 10.300 .5 9.800Z" fill="#f2b63c"/><path d="M.5 3.600 H11.600 V9.800 C11.600 10.300 11.300 10.600 10.800 10.600 H1.400 C.9 10.600 .5 10.300 .5 9.800Z" fill="#f8cf6a"/><path d="M.5 3.400 H11.600" stroke="#fbe6a8" stroke-width=".6"/></svg></div><div class="tr" style="top:181.6px"><i class="ar"></i><svg class="fd" width="12" height="11" viewBox="0 0 12 11"><path d="M.5 1.500 C.5 1 .9 .6 1.400 .6 H4.500 L5.500 1.800 H10.800 C11.300 1.800 11.600 2.100 11.600 2.600 V9.800 C11.600 10.300 11.300 10.600 10.800 10.600 H1.400 C.9 10.600 .5 10.300 .5 9.800Z" fill="#f2b63c"/><path d="M.5 3.600 H11.600 V9.800 C11.600 10.300 11.300 10.600 10.800 10.600 H1.400 C.9 10.600 .5 10.300 .5 9.800Z" fill="#f8cf6a"/><path d="M.5 3.400 H11.600" stroke="#fbe6a8" stroke-width=".6"/></svg></div><div class="tr" style="top:197.9px"><svg class="fd" width="12" height="11" viewBox="0 0 12 11"><path d="M.5 1.500 C.5 1 .9 .6 1.400 .6 H4.500 L5.500 1.800 H10.800 C11.300 1.800 11.600 2.100 11.600 2.600 V9.800 C11.600 10.300 11.300 10.600 10.800 10.600 H1.400 C.9 10.600 .5 10.300 .5 9.800Z" fill="#f2b63c"/><path d="M.5 3.600 H11.600 V9.800 C11.600 10.300 11.300 10.600 10.800 10.600 H1.400 C.9 10.600 .5 10.300 .5 9.800Z" fill="#f8cf6a"/><path d="M.5 3.400 H11.600" stroke="#fbe6a8" stroke-width=".6"/></svg></div><div class="tr" style="top:214.1px"><i class="ar"></i><svg class="fd" width="12" height="11" viewBox="0 0 12 11"><path d="M.5 1.500 C.5 1 .9 .6 1.400 .6 H4.500 L5.500 1.800 H10.800 C11.300 1.800 11.600 2.100 11.600 2.600 V9.800 C11.600 10.300 11.300 10.600 10.800 10.600 H1.400 C.9 10.600 .5 10.300 .5 9.800Z" fill="#f2b63c"/><path d="M.5 3.600 H11.600 V9.800 C11.600 10.300 11.300 10.600 10.800 10.600 H1.400 C.9 10.600 .5 10.300 .5 9.800Z" fill="#f8cf6a"/><path d="M.5 3.400 H11.600" stroke="#fbe6a8" stroke-width=".6"/></svg></div><div class="tr" style="top:230.4px"><i class="ar"></i><svg class="fd" width="12" height="11" viewBox="0 0 12 11"><path d="M.5 1.500 C.5 1 .9 .6 1.400 .6 H4.500 L5.500 1.800 H10.800 C11.300 1.800 11.600 2.100 11.600 2.600 V9.800 C11.600 10.300 11.300 10.600 10.800 10.600 H1.400 C.9 10.600 .5 10.300 .5 9.800Z" fill="#f2b63c"/><path d="M.5 3.600 H11.600 V9.800 C11.600 10.300 11.300 10.600 10.800 10.600 H1.400 C.9 10.600 .5 10.300 .5 9.800Z" fill="#f8cf6a"/><path d="M.5 3.400 H11.600" stroke="#fbe6a8" stroke-width=".6"/></svg></div><div class="tr" style="top:246.6px"><i class="ar"></i><svg class="fd" width="12" height="11" viewBox="0 0 12 11"><path d="M.5 1.500 C.5 1 .9 .6 1.400 .6 H4.500 L5.500 1.800 H10.800 C11.300 1.800 11.600 2.100 11.600 2.600 V9.800 C11.600 10.300 11.300 10.600 10.800 10.600 H1.400 C.9 10.600 .5 10.300 .5 9.800Z" fill="#f2b63c"/><path d="M.5 3.600 H11.600 V9.800 C11.600 10.300 11.300 10.600 10.800 10.600 H1.400 C.9 10.600 .5 10.300 .5 9.800Z" fill="#f8cf6a"/><path d="M.5 3.400 H11.600" stroke="#fbe6a8" stroke-width=".6"/></svg></div><div class="tr" style="top:262.9px"><i class="ar"></i><svg class="fd" width="12" height="11" viewBox="0 0 12 11"><path d="M.5 1.500 C.5 1 .9 .6 1.400 .6 H4.500 L5.500 1.800 H10.800 C11.300 1.800 11.600 2.100 11.600 2.600 V9.800 C11.600 10.300 11.300 10.600 10.800 10.600 H1.400 C.9 10.600 .5 10.300 .5 9.800Z" fill="#f2b63c"/><path d="M.5 3.600 H11.600 V9.800 C11.600 10.300 11.300 10.600 10.800 10.600 H1.400 C.9 10.600 .5 10.300 .5 9.800Z" fill="#f8cf6a"/><path d="M.5 3.400 H11.600" stroke="#fbe6a8" stroke-width=".6"/></svg></div><div class="tr" style="top:279.2px"><i class="ar"></i><svg class="fd" width="12" height="11" viewBox="0 0 12 11"><path d="M.5 1.500 C.5 1 .9 .6 1.400 .6 H4.500 L5.500 1.800 H10.800 C11.300 1.800 11.600 2.100 11.600 2.600 V9.800 C11.600 10.300 11.300 10.600 10.800 10.600 H1.400 C.9 10.600 .5 10.300 .5 9.800Z" fill="#f2b63c"/><path d="M.5 3.600 H11.600 V9.800 C11.600 10.300 11.300 10.600 10.800 10.600 H1.400 C.9 10.600 .5 10.300 .5 9.800Z" fill="#f8cf6a"/><path d="M.5 3.400 H11.600" stroke="#fbe6a8" stroke-width=".6"/></svg></div><div class="tr" style="top:295.4px"><i class="ar"></i><svg class="fd" width="12" height="11" viewBox="0 0 12 11"><path d="M.5 1.500 C.5 1 .9 .6 1.400 .6 H4.500 L5.500 1.800 H10.800 C11.300 1.800 11.600 2.100 11.600 2.600 V9.800 C11.600 10.300 11.300 10.600 10.800 10.600 H1.400 C.9 10.600 .5 10.300 .5 9.800Z" fill="#f2b63c"/><path d="M.5 3.600 H11.600 V9.800 C11.600 10.300 11.300 10.600 10.800 10.600 H1.400 C.9 10.600 .5 10.300 .5 9.800Z" fill="#f8cf6a"/><path d="M.5 3.400 H11.600" stroke="#fbe6a8" stroke-width=".6"/></svg></div><div class="tr" style="top:311.7px"><i class="ar"></i><svg class="fd" width="12" height="11" viewBox="0 0 12 11"><path d="M.5 1.500 C.5 1 .9 .6 1.400 .6 H4.500 L5.500 1.800 H10.800 C11.300 1.800 11.600 2.100 11.600 2.600 V9.800 C11.600 10.300 11.300 10.600 10.800 10.600 H1.400 C.9 10.600 .5 10.300 .5 9.800Z" fill="#f2b63c"/><path d="M.5 3.600 H11.600 V9.800 C11.600 10.300 11.300 10.600 10.800 10.600 H1.400 C.9 10.600 .5 10.300 .5 9.800Z" fill="#f8cf6a"/><path d="M.5 3.400 H11.600" stroke="#fbe6a8" stroke-width=".6"/></svg></div><div class="tr" style="top:327.9px"><i class="ar"></i><svg class="fd" width="12" height="11" viewBox="0 0 12 11"><path d="M.5 1.500 C.5 1 .9 .6 1.400 .6 H4.500 L5.500 1.800 H10.800 C11.300 1.800 11.600 2.100 11.600 2.600 V9.800 C11.600 10.300 11.300 10.600 10.800 10.600 H1.400 C.9 10.600 .5 10.300 .5 9.800Z" fill="#f2b63c"/><path d="M.5 3.600 H11.600 V9.800 C11.600 10.300 11.300 10.600 10.800 10.600 H1.400 C.9 10.600 .5 10.300 .5 9.800Z" fill="#f8cf6a"/><path d="M.5 3.400 H11.600" stroke="#fbe6a8" stroke-width=".6"/></svg></div><div class="tr" style="top:344.2px"><i class="ar"></i><svg class="fd" width="12" height="11" viewBox="0 0 12 11"><path d="M.5 1.500 C.5 1 .9 .6 1.400 .6 H4.500 L5.500 1.800 H10.800 C11.300 1.800 11.600 2.100 11.600 2.600 V9.800 C11.600 10.300 11.300 10.600 10.800 10.600 H1.400 C.9 10.600 .5 10.300 .5 9.800Z" fill="#f2b63c"/><path d="M.5 3.600 H11.600 V9.800 C11.600 10.300 11.300 10.600 10.800 10.600 H1.400 C.9 10.600 .5 10.300 .5 9.800Z" fill="#f8cf6a"/><path d="M.5 3.400 H11.600" stroke="#fbe6a8" stroke-width=".6"/></svg></div><div class="tr" style="top:360.5px"><i class="ar"></i><svg class="fd" width="12" height="11" viewBox="0 0 12 11"><path d="M.5 1.500 C.5 1 .9 .6 1.400 .6 H4.500 L5.500 1.800 H10.800 C11.300 1.800 11.600 2.100 11.600 2.600 V9.800 C11.600 10.300 11.300 10.600 10.800 10.600 H1.400 C.9 10.600 .5 10.300 .5 9.800Z" fill="#f2b63c"/><path d="M.5 3.600 H11.600 V9.800 C11.600 10.300 11.300 10.600 10.800 10.600 H1.400 C.9 10.600 .5 10.300 .5 9.800Z" fill="#f8cf6a"/><path d="M.5 3.400 H11.600" stroke="#fbe6a8" stroke-width=".6"/></svg></div><div class="tr" style="top:376.7px"><i class="ar"></i><svg class="fd" width="12" height="11" viewBox="0 0 12 11"><path d="M.5 1.500 C.5 1 .9 .6 1.400 .6 H4.500 L5.500 1.800 H10.800 C11.300 1.800 11.600 2.100 11.600 2.600 V9.800 C11.600 10.300 11.300 10.600 10.800 10.600 H1.400 C.9 10.600 .5 10.300 .5 9.800Z" fill="#f2b63c"/><path d="M.5 3.600 H11.600 V9.800 C11.600 10.300 11.300 10.600 10.800 10.600 H1.400 C.9 10.600 .5 10.300 .5 9.800Z" fill="#f8cf6a"/><path d="M.5 3.400 H11.600" stroke="#fbe6a8" stroke-width=".6"/></svg></div><div class="tr" style="top:393.0px"><i class="ar"></i><svg class="fd" width="12" height="11" viewBox="0 0 12 11"><path d="M.5 1.500 C.5 1 .9 .6 1.400 .6 H4.500 L5.500 1.800 H10.800 C11.300 1.800 11.600 2.100 11.600 2.600 V9.800 C11.600 10.300 11.300 10.600 10.800 10.600 H1.400 C.9 10.600 .5 10.300 .5 9.800Z" fill="#f2b63c"/><path d="M.5 3.600 H11.600 V9.800 C11.600 10.300 11.300 10.600 10.800 10.600 H1.400 C.9 10.600 .5 10.300 .5 9.800Z" fill="#f8cf6a"/><path d="M.5 3.400 H11.600" stroke="#fbe6a8" stroke-width=".6"/></svg></div></div>
<div class="abs" style="left:119.500px;top:4px;width:4px;height:111px;background:#b9b9bc;border-radius:2px"></div>
</div>
<div class="main">
<div class="abs" style="left:34.500px;top:14.300px;width:50px;height:63.600px;background:#d9e7f8;border:1px solid #a9c9ee;border-radius:1px"></div>
<svg class="abs" style="left:46.600px;top:24.600px" width="26.200" height="26.200" viewBox="0 0 26 26"><rect width="26" height="26" rx="2.200" fill="#f39a26"/><path d="M5.500 8 H20.500 M5.500 13 H20.500 M5.500 18 H20.500" stroke="#fde3bd" stroke-width="1.700"/></svg>
<div class="tx" style="left:36px;top:58.600px;width:47px;text-align:center;font-size:7.400px">OrderITApp...</div>
<!-- in-window ad -->
<div class="abs" style="left:279.500px;top:23.600px;width:204px;height:169px;background:#f3f4f6;overflow:hidden">
<div class="abs" style="left:80px;top:-1px;width:220px;height:220px;border-radius:50%;background:#0a55f0"></div>
</div>
<svg class="abs" style="left:282.300px;top:26.500px" width="10" height="10" viewBox="0 0 10 10"><circle cx="5" cy="5" r="4.300" fill="#a0a0a2"/><path d="M3.300 3.300 L6.700 6.700 M6.700 3.300 L3.300 6.700" stroke="#f2f2f2" stroke-width="1"/></svg>
<svg class="abs" style="left:289px;top:30.900px" width="15.500" height="15.500" viewBox="0 0 14 14"><rect width="14" height="14" rx="2.200" fill="#14213a"/><path d="M3 3.200 V8.300 M5.700 2.700 V9 M8.300 2.700 V9 M11 3.200 V8.300" stroke="#fff" stroke-width="1"/><path d="M2.800 10.100 C5 11.900 9 11.900 11.200 10.100" stroke="#fff" stroke-width="1" fill="none"/></svg>
<div class="abs" style="left:309.200px;top:35.200px;font-size:6.900px;font-weight:bold;letter-spacing:.75px;color:#14213a;line-height:8px">INTERCOM</div>
<!-- red arrow -->
<svg class="abs" style="left:377.500px;top:-26.700px;overflow:visible" width="60" height="70" viewBox="825 138 60 70"><path d="M852.400 142.200 L871.600 169.300 L861.400 168.300 L858.500 197.200 L837.800 195.700 L839.300 167 L829.800 166.200Z" fill="#f8443f" stroke="#40262a" stroke-width="1.600" stroke-linejoin="round"/></svg>
</div>
<div class="st">
<svg class="abs" style="left:16.500px;top:4.800px" width="14" height="14" viewBox="0 0 14 14"><rect width="14" height="14" rx="1.500" fill="#f39a26"/><path d="M3 4 H11 M3 7 H11 M3 10 H11" stroke="#fde3bd" stroke-width="1.100"/></svg>
<div class="tx" style="left:61.500px;top:1.400px;color:#4a4a4a">OrderITAppLog.json</div>
<div class="tx" style="left:61.500px;top:13.600px;color:#4a4a4a">04/03/2021 19:06 <span style="margin-left:8.300px">Size:490 Bytes</span></div>
<div class="abs" style="left:568.500px;top:4.500px;width:84px;height:15px;background:#d3d6dc;border:1px solid #cdd0d6;text-align:center;line-height:13.500px;font-size:7.800px;color:#6c6f77">Atajos de teclado</div>
</div>
</div>
<style>
#dl{position:absolute;left:669px;top:206.600px;width:413px;height:298px;background:#fff;border-radius:5px;box-shadow:0 6px 24px rgba(0,0,0,.5),0 0 1px rgba(0,0,0,.5);overflow:hidden;color:#1f1f1f;font-size:7.700px}
#dl .t{position:absolute;white-space:nowrap;line-height:10px;-webkit-text-stroke:.18px currentColor}
#dl .cv{position:absolute;left:11.500px;width:6px;height:8px}
#dl .box{position:absolute;background:#fff;border:1px solid #e4e4e4;border-bottom-color:#d0d0d0;border-radius:2px}
</style>
<div id="dl">
<!-- title -->
<svg class="abs" style="left:5.500px;top:4.300px" width="11" height="11" viewBox="0 0 11 11"><circle cx="5.500" cy="5.500" r="5.200" fill="#e4412f"/><path d="M5.500 5.500 L.9 3 A5.200 5.200 0 0 0 4.500 10.600Z" fill="#2ea350"/><path d="M5.500 5.500 L4.500 10.600 A5.200 5.200 0 0 0 10.700 5Z" fill="#f7c328"/><circle cx="5.500" cy="5.500" r="2.400" fill="#fff"/><circle cx="5.500" cy="5.500" r="1.800" fill="#3d7fe8"/><circle cx="8.400" cy="2.400" r="1.800" fill="#222"/></svg>
<div class="t" style="left:19.600px;top:5px;font-size:8.200px">Abrir</div>
<svg class="abs" style="left:399px;top:6px" width="8" height="8" viewBox="0 0 8 8"><path d="M.5 .5 L7.500 7.500 M7.500 .5 L.5 7.500" stroke="#1c1c1c" stroke-width="1"/></svg>
<!-- nav -->
<svg class="abs" style="left:9px;top:35px" width="9" height="8" viewBox="0 0 9 8"><path d="M8.500 4 H1 M4 .8 L.8 4 L4 7.200" fill="none" stroke="#555" stroke-width=".9"/></svg>
<svg class="abs" style="left:33px;top:35px" width="9" height="8" viewBox="0 0 9 8"><path d="M.5 4 H8 M5 .8 L8.200 4 L5 7.200" fill="none" stroke="#b5b5b5" stroke-width=".9"/></svg>
<svg class="abs" style="left:55.500px;top:37.500px" width="5" height="4" viewBox="0 0 5 4"><path d="M.5 .8 L2.500 2.800 L4.500 .8" fill="none" stroke="#8a8a8a" stroke-width=".9"/></svg>
<svg class="abs" style="left:74px;top:34.500px" width="8" height="9" viewBox="0 0 8 9"><path d="M4 8.500 V1 M.8 4 L4 .8 L7.200 4" fill="none" stroke="#555" stroke-width=".9"/></svg>
<div class="box" style="left:92.500px;top:27px;width:167px;height:22.700px"></div>
<svg class="abs" style="left:98.500px;top:33.500px" width="10" height="10" viewBox="0 0 10 10"><rect width="10" height="10" rx="1.500" fill="#2878e0"/><circle cx="6.800" cy="3" r="1.100" fill="#fff"/><path d="M1 8.800 L4 4.800 L6 7.300 L7.200 6 L9 8.800Z" fill="#fff"/></svg>
<svg class="abs" style="left:114.300px;top:35.800px" width="4" height="6" viewBox="0 0 4 6"><path d="M.8 .6 L3.200 3 L.8 5.400" fill="none" stroke="#444" stroke-width=".9"/></svg>
<div class="t" style="left:124px;top:33.300px;font-size:8px;letter-spacing:-.2px;color:#222">Est...</div>
<svg class="abs" style="left:146.600px;top:35.800px" width="4" height="6" viewBox="0 0 4 6"><path d="M.8 .6 L3.200 3 L.8 5.400" fill="none" stroke="#444" stroke-width=".9"/></svg>
<div class="t" style="left:155.800px;top:33.300px;font-size:8px;letter-spacing:-.2px;color:#222">Im...</div>
<svg class="abs" style="left:177.300px;top:35.800px" width="4" height="6" viewBox="0 0 4 6"><path d="M.8 .6 L3.200 3 L.8 5.400" fill="none" stroke="#444" stroke-width=".9"/></svg>
<svg class="abs" style="left:217.500px;top:37px" width="7" height="5" viewBox="0 0 7 5"><path d="M.7 .8 L3.500 3.600 L6.300 .8" fill="none" stroke="#8a8a8a" stroke-width=".9"/></svg>
<svg class="abs" style="left:240.700px;top:34px" width="10" height="10" viewBox="0 0 10 10"><path d="M8.600 5 A3.700 3.700 0 1 1 6.600 1.700" fill="none" stroke="#666" stroke-width=".9"/><path d="M5.800 .3 L8.300 1.500 L6.500 3.500Z" fill="#666"/></svg>
<div class="box" style="left:267.800px;top:27px;width:137px;height:22.700px"></div>
<div class="t" style="left:274.500px;top:33.500px;font-size:7.600px;color:#6a6a6a">Buscar en Imágenes</div>
<svg class="abs" style="left:387px;top:34px" width="9" height="9" viewBox="0 0 9 9"><circle cx="5.400" cy="3.400" r="2.500" fill="none" stroke="#555" stroke-width="1"/><path d="M3.600 5.300 L.8 8.200" stroke="#555" stroke-width="1.200"/></svg>
<!-- toolbar -->
<div class="abs" style="left:0;top:57.500px;width:413px;height:21px;background:#f6f6fa"></div>
<div class="t" style="left:12px;top:63px;font-size:7.700px;color:#333">Organizar</div>
<div class="abs" style="left:49.500px;top:66.500px;border-top:3px solid #333;border-left:2.600px solid transparent;border-right:2.600px solid transparent"></div>
<div class="t" style="left:76.600px;top:63px;font-size:7.700px;color:#333">Nueva carpeta</div>
<svg class="abs" style="left:331px;top:63.500px" width="9" height="9" viewBox="0 0 9 9"><rect x=".6" y=".6" width="7.800" height="7.400" rx=".8" fill="none" stroke="#333" stroke-width="1"/><path d="M.6 6.500 H8.400" stroke="#333" stroke-width="1.600"/></svg>
<div class="abs" style="left:347.500px;top:66.800px;border-top:3px solid #222;border-left:2.600px solid transparent;border-right:2.600px solid transparent"></div>
<svg class="abs" style="left:368px;top:64px" width="11" height="8" viewBox="0 0 11 8"><rect x=".5" y=".5" width="10" height="7" fill="#fff" stroke="#7a8aa0" stroke-width=".9"/><rect x="6" y="1" width="4" height="6" fill="#3b8ad8"/></svg>
<svg class="abs" style="left:392px;top:62.800px" width="11" height="11" viewBox="0 0 11 11"><circle cx="5.500" cy="5.500" r="5.200" fill="#0f7fd6"/><text x="5.500" y="8.400" font-size="8" font-weight="bold" fill="#fff" text-anchor="middle" font-family="Liberation Sans,sans-serif">?</text></svg>
<!-- nav pane -->
<div class="abs" style="left:0;top:78.500px;width:27px;height:168.500px;background:#fff"></div>
<div class="abs" style="left:27px;top:78.500px;width:10px;height:168.500px;background:#f1f1f3"></div>
<div class="abs" style="left:1px;top:174.500px;width:25.500px;height:18px;background:#cfe3f9"></div>
<div class="abs" style="left:31.500px;top:186px;width:1.500px;height:28px;background:#777;border-radius:1px"></div>
<svg class="abs" style="left:5.500px;top:93px" width="8" height="6" viewBox="0 0 8 6"><path d="M.8 1 L4 4.200 L7.200 1" fill="none" stroke="#222" stroke-width="1.100"/></svg>
<div class="abs" style="left:20px;top:91.500px;width:6px;height:8.500px;background:#25b8d8;border-radius:.8px"></div>
<svg class="cv" style="top:113.500px" viewBox="0 0 6 8"><path d="M1.500 .8 L4.700 4 L1.500 7.200" fill="none" stroke="#777" stroke-width="1"/></svg>
<svg class="cv" style="top:135.500px" viewBox="0 0 6 8"><path d="M1.500 .8 L4.700 4 L1.500 7.200" fill="none" stroke="#777" stroke-width="1"/></svg>
<svg class="cv" style="top:157.500px" viewBox="0 0 6 8"><path d="M1.500 .8 L4.700 4 L1.500 7.200" fill="none" stroke="#777" stroke-width="1"/></svg>
<svg class="cv" style="top:179.300px" viewBox="0 0 6 8"><path d="M1.500 .8 L4.700 4 L1.500 7.200" fill="none" stroke="#666" stroke-width="1"/></svg>
<svg class="cv" style="top:201.200px" viewBox="0 0 6 8"><path d="M1.500 .8 L4.700 4 L1.500 7.200" fill="none" stroke="#777" stroke-width="1"/></svg>
<svg class="cv" style="top:223px" viewBox="0 0 6 8"><path d="M1.500 .8 L4.700 4 L1.500 7.200" fill="none" stroke="#777" stroke-width="1"/></svg>
<div class="abs" style="left:24.500px;top:160px;width:1.500px;height:5px;background:#8ec4ea"></div>
<!-- list scrollbar -->
<div class="abs" style="left:403px;top:78.500px;width:10px;height:168.500px;background:#f4f4f6"></div>
<div class="abs" style="left:406.500px;top:96px;width:1.500px;height:12.500px;background:#777;border-radius:1px"></div>
<!-- thumbs -->
<svg width="0" height="0" style="position:absolute"><defs><filter id="bl5" x="-5%" y="-5%" width="110%" height="110%"><feGaussianBlur stdDeviation="4.500"/></filter><filter id="bl" x="-10%" y="-10%" width="120%" height="120%"><feGaussianBlur stdDeviation=".9"/></filter></defs></svg>
<svg class="abs" style="left:66.900px;top:82.600px" width="68.400" height="90.600" viewBox="0 0 68.400 90.600">
<g transform="scale(.1585) translate(-38,-26)"><rect x="38" y="26" width="432" height="572" fill="#d3cbc5"/>
<g filter="url(#bl5)"><path d="M250 26 H470 V330 L400 300 L330 200 L300 100Z" fill="#ebe7e3"/><path d="M310 70 L420 60 L470 110 V200 L400 290 L350 200Z" fill="#c9c3bf"/><rect x="38" y="400" width="432" height="198" fill="#d8d2ce"/>
<path d="M38 350 L140 320 L150 420 L38 455Z" fill="#c6c4c6"/><path d="M340 320 L470 305 V420 L360 400Z" fill="#e4e4e7"/><rect x="440" y="340" width="30" height="70" fill="#1f4d8c"/>
<path d="M125 315 Q240 295 355 315 L350 480 H125Z" fill="#e4e4e7"/><path d="M125 330 L175 320 L170 470 H125Z" fill="#c6c4c6" opacity=".55"/>
<path d="M38 598 V540 Q90 480 130 492 H350 Q420 500 470 560 V598Z" fill="#16305e"/><rect x="118" y="458" width="240" height="42" rx="12" fill="#f2f1f0"/>
<path d="M85 160 C85 120 130 110 150 130 C180 90 230 75 270 85 C310 95 330 110 345 135 C375 125 395 160 385 200 C380 240 360 280 330 300 C280 322 200 318 150 295 C110 270 85 220 85 160Z" fill="#1f4d8c"/>
<ellipse cx="235" cy="235" rx="105" ry="62" fill="#2559a4" opacity=".65"/><path d="M150 135 C190 100 260 90 320 120 C280 130 200 150 150 135Z" fill="#183a70" opacity=".7"/>
<ellipse cx="305" cy="158" rx="22" ry="15" fill="#9a4a3c"/></g></g></svg>
<svg class="abs" style="left:183.500px;top:82.600px" width="68.400" height="90.600" viewBox="0 0 68.400 90.600">
<g transform="scale(.1585) translate(-38,-26)"><rect x="38" y="26" width="432" height="572" fill="#cbc3d8"/>
<g filter="url(#bl5)"><path d="M250 26 H470 V330 L400 300 L330 200 L300 100Z" fill="#e4deec"/><path d="M310 70 L420 60 L470 110 V200 L400 290 L350 200Z" fill="#bfb7ce"/><rect x="38" y="400" width="432" height="198" fill="#b7afc6"/>
<path d="M38 350 L140 320 L150 420 L38 455Z" fill="#a9a6b6"/><path d="M340 320 L470 305 V420 L360 400Z" fill="#dadbe8"/><rect x="440" y="340" width="30" height="70" fill="#22468c"/>
<path d="M125 315 Q240 295 355 315 L350 480 H125Z" fill="#dadbe8"/><path d="M125 330 L175 320 L170 470 H125Z" fill="#a9a6b6" opacity=".55"/>
<path d="M38 598 V540 Q90 480 130 492 H350 Q420 500 470 560 V598Z" fill="#182a5a"/><rect x="118" y="458" width="240" height="42" rx="12" fill="#e9e9f1"/>
<path d="M85 160 C85 120 130 110 150 130 C180 90 230 75 270 85 C310 95 330 110 345 135 C375 125 395 160 385 200 C380 240 360 280 330 300 C280 322 200 318 150 295 C110 270 85 220 85 160Z" fill="#22468c"/>
<ellipse cx="235" cy="235" rx="105" ry="62" fill="#2c58a6" opacity=".65"/><path d="M150 135 C190 100 260 90 320 120 C280 130 200 150 150 135Z" fill="#1a3670" opacity=".7"/>
<ellipse cx="305" cy="158" rx="22" ry="15" fill="#84485a"/></g></g></svg>
<svg class="abs" style="left:303.500px;top:86px" width="65" height="86" viewBox="0 0 65 86"><path d="M.5 .5 H46.500 L64.500 18.500 V85.500 H.5Z" fill="#f5f5f5" stroke="#7d7d7d" stroke-width="1"/><path d="M46.500 .5 V18.500 H64.500" fill="#fafafa" stroke="#7d7d7d" stroke-width="1"/></svg>
<div class="t" style="left:66.500px;top:179.600px;width:69px;text-align:center;font-size:7.900px;letter-spacing:-.2px">SOLVETICO2.jpg</div>
<div class="t" style="left:173.500px;top:179.600px;width:88px;text-align:center;font-size:7.900px;letter-spacing:-.2px">solvetico-color.jpg</div>
<div class="t" style="left:303.500px;top:179.600px;width:65px;text-align:center;font-size:7.900px;letter-spacing:-.2px">trucos.psx</div>
<!-- row 2 -->
<div class="abs" style="left:0;top:195.500px;width:403px;height:51.500px;overflow:hidden">
<svg class="abs" style="left:56.500px;top:0" width="91" height="91" viewBox="0 0 91 91"><defs><filter id="b2" x="-5%" y="-5%" width="110%" height="110%"><feGaussianBlur stdDeviation=".45"/></filter></defs><rect width="91" height="91" fill="#fff"/><rect x="89.500" width="1.500" height="91" fill="#c8c8c8"/><clipPath id="c4"><circle cx="45" cy="45.500" r="43.700"/></clipPath><g clip-path="url(#c4)"><g filter="url(#b2)"><rect width="91" height="91" fill="#c3c5d0"/><rect width="91" height="9.500" fill="#c7a687"/><rect x="34.700" y="0" width="9.700" height="8" fill="#25252b"/><path d="M11 11.500 Q45 5 79 11.500 L73 34 L91 40 V91 H0 V40 L17 34Z" fill="#202127"/><path d="M14.500 13.500 Q45 8 75.500 13.500 L69.500 31 Q45 35.500 20.500 31Z" fill="#e4e5ee"/><circle cx="8" cy="28" r="4.500" fill="#d9dbe4" stroke="#9fa2ae" stroke-width=".8"/><circle cx="82" cy="28" r="4.500" fill="#d9dbe4" stroke="#9fa2ae" stroke-width=".8"/><path d="M39 35 L46 36 L47 41 L41 40Z" fill="#d0242a"/><circle cx="24" cy="48" r="8" fill="#121317"/><circle cx="65" cy="48" r="8" fill="#121317"/><circle cx="24" cy="48" r="5" fill="#2c2d34"/><circle cx="65" cy="48" r="5" fill="#2c2d34"/></g></g></svg>
<svg class="abs" style="left:172px;top:0" width="92" height="91" viewBox="0 0 92 91"><rect width="92" height="91" fill="#fff"/><rect x="90.500" width="1.500" height="91" fill="#c8c8c8"/><clipPath id="c5"><circle cx="46" cy="46" r="44"/></clipPath><g clip-path="url(#c5)"><rect width="92" height="91" fill="#8f8f96"/><rect x="30" width="62" height="91" fill="#1d2530"/><rect x="30" width="3" height="91" fill="#d9d9de"/><rect x="62" width="10" height="91" fill="#f2f2f4" transform="skewX(8)"/><path d="M76 20 L92 10 V60 L80 50Z" fill="#2458b0"/><rect x="72" y="0" width="5" height="91" fill="#b8c4d8" transform="skewX(8)"/><path d="M40 50 L48 44 L56 50 V60 H40Z" fill="#e8d8b0"/></g></svg>
<div class="abs" style="left:289.500px;top:39.500px;width:90px;height:20px;background:#1b5fc6"></div>
<div class="abs" style="left:326px;top:40px;width:46.500px;height:46.500px;border-radius:50%;background:#fff;border:1.500px solid #14243c"></div>
<div class="abs" style="left:357.500px;top:48.500px;border-right:5.500px solid #e23a30;border-top:3px solid transparent;border-bottom:2px solid transparent"></div>
<div class="t" style="left:299.500px;top:43.200px;font-size:4.700px;line-height:5.600px;font-weight:bold;color:#fff;letter-spacing:.1px">CÓMO<br>RESETEAR</div>
</div>
<!-- bottom -->
<div class="abs" style="left:0;top:247px;width:413px;height:51px;background:#f3f3f3"></div>
<div class="t" style="left:88px;top:256.600px;font-size:8.100px;letter-spacing:-.15px">Nombre:</div>
<div class="abs" style="left:123.400px;top:253.500px;width:142.500px;height:15.800px;background:#fff;border:1px solid #8c8c8c;border-radius:1.500px"></div>
<svg class="abs" style="left:256px;top:259.500px" width="7" height="5" viewBox="0 0 7 5"><path d="M.7 .8 L3.500 3.600 L6.300 .8" fill="none" stroke="#666" stroke-width=".9"/></svg>
<div class="abs" style="left:274.500px;top:253.500px;width:126.700px;height:15.800px;background:#fdfdfd;border:1px solid #e0e0e0;border-bottom-color:#c4c4c4;border-radius:1.500px"></div>
<div class="t" style="left:277.500px;top:256.200px;font-size:7.800px">All Files (*.*)</div>
<svg class="abs" style="left:392px;top:259.500px" width="7" height="5" viewBox="0 0 7 5"><path d="M.7 .8 L3.500 3.600 L6.300 .8" fill="none" stroke="#666" stroke-width=".9"/></svg>
<div class="abs" style="left:274.500px;top:274px;width:58.300px;height:16px;background:#fdfdfd;border:1.200px solid #2f7fd0;border-radius:2px;text-align:center;line-height:13.500px;font-size:7.700px">Abrir</div>
<div class="abs" style="left:342.600px;top:274px;width:58.500px;height:16px;background:#fdfdfd;border:1px solid #dcdcdc;border-bottom-color:#c4c4c4;border-radius:2px;text-align:center;line-height:14px;font-size:7.700px">Cancelar</div>
<svg class="abs" style="left:405px;top:290px" width="6" height="6" viewBox="0 0 6 6"><path d="M5 1 V2 M5 3.500 V4.500 M2.500 3.500 V4.500 M0 4 H1" stroke="#aaa" stroke-width="1"/></svg>
</div>
<style>
#ad{position:absolute;left:1078.400px;top:25.700px;width:204px;height:169px;background:#f0f0f1;border-radius:3px;overflow:hidden;color:#14213a}
#ad .t{position:absolute;white-space:nowrap}
#tbx .l{position:absolute;top:46px;font-size:8.100px;line-height:10px;color:#fff;white-space:nowrap;text-shadow:0 0 .4px #fff;transform:translateX(-50%)}
</style>
<div id="ad">
<div class="abs" style="left:119.500px;top:-2.500px;width:172px;height:172px;border-radius:50%;background:#1f63f2;overflow:hidden"><div class="abs" style="left:10px;top:-62px;width:130px;height:130px;border-radius:50%;background:#5a95f8;opacity:.75"></div></div>
<div class="abs" style="left:136.500px;top:37px;width:80px;height:128.500px;background:#fff;border-radius:2px 0 0 2px;box-shadow:-1px 1px 5px rgba(10,30,90,.35)"></div>
<div class="abs" style="left:136.500px;top:37px;width:10px;height:128.500px;background:#f1f2f4;border-radius:2px 0 0 2px"></div>
<div class="abs" style="left:139.200px;top:41.5px;width:4.600px;height:5.2px;background:#1b2233;border-radius:1px"></div>
<div class="abs" style="left:139.200px;top:54px;width:4.600px;height:3.6px;background:#2a3142;border-radius:1px"></div>
<div class="abs" style="left:139.200px;top:66.3px;width:4.600px;height:3.6px;background:#7fae9b;border-radius:1px"></div>
<div class="abs" style="left:139.200px;top:78.6px;width:4.600px;height:3.6px;background:#8d8f98;border-radius:1px"></div>
<div class="abs" style="left:139.200px;top:91px;width:4.600px;height:3.6px;background:#a9adb4;border-radius:1px"></div>
<div class="abs" style="left:139.200px;top:103.3px;width:4.600px;height:3.6px;background:#9a9da6;border-radius:1px"></div>
<div class="abs" style="left:139.200px;top:115.5px;width:4.600px;height:4.6px;background:#1b2233;border-radius:1px"></div>
<div class="abs" style="left:152.500px;top:46.300px;width:4.500px;height:.8px;background:#555;box-shadow:0 1.500px 0 #555,0 3px 0 #555"></div>
<div class="t" style="left:161.500px;top:44.300px;font-size:5.300px;font-weight:bold;line-height:7px;color:#1b2233">Inbox</div>
<div class="t" style="left:151px;top:59.300px;font-size:2.900px;font-weight:bold;line-height:4px;color:#333">Open <span style="color:#999;font-weight:normal">101 ▾</span></div>
<div class="t" style="left:199.500px;top:59.300px;font-size:2.900px;line-height:4px;color:#555">▾</div>
<div class="abs" style="left:146.500px;top:65.500px;width:58px;height:24px;background:#e6effc"></div>
<div class="abs" style="left:146.500px;top:65.500px;width:1.400px;height:24px;background:#6f8fe0"></div>
<div class="abs" style="left:150.300px;top:69.3px;width:7.400px;height:7.400px;border-radius:50%;background:#e9b87a"></div>
<div class="abs" style="left:152.300px;top:70.6px;width:3.400px;height:4px;border-radius:50%;background:#6a3f24"></div>
<div class="t" style="left:161px;top:70.6px;font-size:3.200px;font-weight:bold;line-height:4.500px;color:#333">Christine Moretty</div>
<div class="t" style="left:195.500px;top:70.9px;font-size:2.600px;line-height:4px;color:#999">3min</div>
<div class="abs" style="left:151.500px;top:80.5px;width:38px;height:1.200px;background:#c3cbd9"></div>
<div class="abs" style="left:151.500px;top:84.0px;width:19px;height:1.200px;background:#c3cbd9"></div>
<div class="abs" style="left:150.300px;top:94px;width:7.400px;height:7.400px;border-radius:50%;background:#2f6fe8"></div>
<div class="t" style="left:161px;top:95.3px;font-size:3.200px;font-weight:bold;line-height:4.500px;color:#333">Natalia Sullivan</div>
<div class="t" style="left:195.500px;top:95.6px;font-size:2.600px;line-height:4px;color:#999">5min</div>
<div class="abs" style="left:151.500px;top:105.2px;width:34px;height:1.200px;background:#d8dbe1"></div>
<div class="abs" style="left:151.500px;top:108.7px;width:12px;height:1.200px;background:#d8dbe1"></div>
<div class="abs" style="left:150.300px;top:119.4px;width:7.400px;height:7.400px;border-radius:50%;background:#2a2d36"></div>
<div class="abs" style="left:152.300px;top:120.7px;width:3.400px;height:3.400px;border-radius:50%;background:#d8d8dc"></div>
<div class="t" style="left:161px;top:120.7px;font-size:3.200px;font-weight:bold;line-height:4.500px;color:#333">Bill Cluome</div>
<div class="t" style="left:195.500px;top:121.0px;font-size:2.600px;line-height:4px;color:#999">8min</div>
<div class="abs" style="left:151.500px;top:130.6px;width:34px;height:1.200px;background:#d8dbe1"></div>
<div class="abs" style="left:151.500px;top:134.1px;width:12px;height:1.200px;background:#d8dbe1"></div>
<div class="abs" style="left:150.300px;top:144.3px;width:7.400px;height:7.400px;border-radius:50%;background:#a48ae0"></div>
<div class="t" style="left:161px;top:145.6px;font-size:3.200px;font-weight:bold;line-height:4.500px;color:#333">Gabriel Lee</div>
<div class="t" style="left:195.500px;top:145.9px;font-size:2.600px;line-height:4px;color:#999">9min</div>
<div class="abs" style="left:151.500px;top:155.5px;width:34px;height:1.200px;background:#d8dbe1"></div>
<div class="abs" style="left:151.500px;top:159.0px;width:12px;height:1.200px;background:#d8dbe1"></div>
<!-- left -->
<svg class="abs" style="left:9.400px;top:7.300px" width="15.500" height="15.500" viewBox="0 0 14 14"><rect width="14" height="14" rx="2.200" fill="#14213a"/><path d="M3 3.200 V8.300 M5.700 2.700 V9 M8.300 2.700 V9 M11 3.200 V8.300" stroke="#fff" stroke-width="1"/><path d="M2.800 10.100 C5 11.900 9 11.900 11.200 10.100" stroke="#fff" stroke-width="1" fill="none"/></svg>
<svg class="abs" style="left:1.500px;top:1.500px" width="10" height="10" viewBox="0 0 10 10"><circle cx="5" cy="5" r="4.300" fill="#a2a2a4"/><path d="M3.300 3.300 L6.700 6.700 M6.700 3.300 L3.300 6.700" stroke="#f4f4f4" stroke-width="1"/></svg>
<div class="t" style="left:29.500px;top:11.500px;font-size:7.100px;line-height:8px;font-weight:bold;letter-spacing:.8px">INTERCOM</div>
<div class="t" style="left:9.500px;top:48.300px;font-size:10.900px;line-height:12px;font-weight:bold;letter-spacing:-.2px">With a <span style="font-size:20px;color:#1b55e8;letter-spacing:-.5px;line-height:12px">37%</span><br>lower resolution<br>time, our Messenger<br>wins over traditional<br>support channels</div>
<div class="abs" style="left:9.500px;top:130.700px;width:81px;height:25.300px;border-radius:13px;background:#10203c"></div>
<div class="t" style="left:22.500px;top:138.500px;font-size:8px;line-height:10px;font-weight:bold;color:#fff">View demo</div>
<svg class="abs" style="left:70.500px;top:140.500px" width="8" height="7" viewBox="0 0 8 7"><path d="M.5 3.500 H7 M4.300 .8 L7 3.500 L4.300 6.200" fill="none" stroke="#fff" stroke-width="1.200"/></svg>
</div>
<!-- toolbox -->
<div id="tbx" class="abs" style="left:1083px;top:213px;width:200px;height:165px">
<div class="abs" style="left:7px;top:0;width:72.700px;height:13.500px;background:#3bb4f1"></div>
<div class="abs" style="left:16px;top:1.800px;font-size:8.500px;line-height:10px;color:#fff;text-shadow:0 0 .5px #fff">Toolbox</div>
<div class="abs" style="left:-1px;top:13.400px;width:200px;height:49.400px;background:rgba(48,50,76,.93);border-radius:0 2px 2px 0"></div>
<div class="abs" style="left:9.500px;top:16.500px;width:34.500px;height:43px;background:#2b2c44;border-radius:2px"></div>
<!-- phone -->
<svg class="abs" style="left:20px;top:23.500px" width="13" height="18" viewBox="0 0 13 18"><rect x=".8" y=".8" width="11.400" height="16.400" rx="1.800" fill="#2b2c44" stroke="#fff" stroke-width="1.600"/><path d="M1.500 14 H11.500" stroke="#fff" stroke-width="1.800"/></svg>
<!-- file -->
<svg class="abs" style="left:56px;top:23.500px" width="13" height="17" viewBox="0 0 13 17"><path d="M.5 1.500 C.5 1 1 .5 1.500 .5 H8 L12.500 5 V15.500 C12.500 16 12 16.500 11.500 16.500 H1.500 C1 16.500 .5 16 .5 15.500Z" fill="#fff"/><path d="M8 .5 V5 H12.500" fill="#c8cad6"/><path d="M3 8 H10 M3 10.500 H10 M3 13 H7.500" stroke="#3a3c58" stroke-width="1"/></svg>
<!-- url globe -->
<svg class="abs" style="left:88.500px;top:22.500px" width="19" height="19" viewBox="0 0 19 19"><circle cx="8.500" cy="8.500" r="7.800" fill="#fff"/><path d="M3 5 C5 3 7 4 8 6 C9 8 6 9 5 11 C4 12 2 10 1.500 8Z M10 2 C12 2 14 3 15 5 C13 6 12 4 10 4Z M9 11 C11 10 13 11 13 13 C12 15 10 16 8.500 15.500Z" fill="#34364f"/><path d="M11.500 12.500 L16.500 9 L18 11 L13 14.500Z" fill="#fff" stroke="#34364f" stroke-width=".8"/><path d="M10.500 14 L13.500 12 L15 14 L12 16Z" fill="#fff" stroke="#34364f" stroke-width=".8"/></svg>
<!-- clipboard -->
<svg class="abs" style="left:125px;top:22.500px" width="14" height="19" viewBox="0 0 14 19"><rect x=".8" y="2.500" width="12.400" height="15.700" rx="1.200" fill="none" stroke="#9b9dae" stroke-width="1.500"/><rect x="4" y=".5" width="6" height="3.500" rx=".8" fill="#9b9dae"/><path d="M3.500 8 H10.500 M3.500 11 H10.500 M3.500 14 H8" stroke="#9b9dae" stroke-width="1.200"/></svg>
<!-- apps box -->
<svg class="abs" style="left:160px;top:24.500px" width="17" height="16" viewBox="0 0 17 16"><path d="M2.500 .5 H7.800 V6 H.5 V2.500 C.5 1.300 1.300 .5 2.500 .5Z M9.200 .5 H14.500 C15.700 .5 16.500 1.300 16.500 2.500 V6 H9.200Z M.5 7.500 H16.500 V13.500 C16.500 14.700 15.700 15.500 14.500 15.500 H2.500 C1.300 15.500 .5 14.700 .5 13.500Z" fill="#fff"/></svg>
<div class="l" style="left:26.500px">Resumen</div>
<div class="l" style="left:62.300px">Archivo</div>
<div class="l" style="left:97.500px">URL</div>
<div class="l" style="left:132px;color:#8f91a3;text-shadow:none">Portap...</div>
<div class="l" style="left:168px">Aplicac...</div>
<div class="abs" style="left:20.500px;top:67px;border-bottom:6.500px solid rgba(48,50,76,.95);border-left:5.500px solid transparent;border-right:5.500px solid transparent"></div>
<div class="abs" style="left:-1px;top:73.300px;width:200px;height:89px;background:rgba(48,50,76,.93);border-radius:0 0 2px 0"></div>
<div class="abs" style="left:9px;top:82px;font-size:13.800px;line-height:16px;color:#fff;letter-spacing:-.05px">SM-G991B</div>
<svg class="abs" style="left:147.500px;top:84px" width="11" height="12" viewBox="0 0 11 12"><path d="M9 6.200 A3.800 3.800 0 1 1 5.200 2.600" fill="none" stroke="#fff" stroke-width="1.400"/><path d="M4.800 .2 L8 2.600 L4.800 5Z" fill="#fff"/></svg>
<svg class="abs" style="left:174.500px;top:84.500px" width="11" height="11" viewBox="0 0 11 11"><circle cx="5.500" cy="5.500" r="4.500" fill="none" stroke="#fff" stroke-width="1.300"/><path d="M5.500 3 V6" stroke="#fff" stroke-width="1.400"/><circle cx="5.500" cy="5.800" r="1.200" fill="#fff"/></svg>
<svg class="abs" style="left:10.500px;top:117px" width="7" height="10" viewBox="0 0 7 10"><rect x=".6" y=".6" width="5.800" height="8.800" rx="1" fill="none" stroke="#fff" stroke-width="1.100"/><path d="M2.500 8 H4.500" stroke="#fff" stroke-width=".8"/></svg>
<div class="abs" style="left:22.700px;top:117.500px;font-size:8.100px;line-height:10px;color:#fff;font-weight:bold;letter-spacing:.02px">205.57 GB / 225.40 GB</div>
<div class="abs" style="left:9px;top:128.500px;width:176.300px;height:2.800px;background:#20212f;border-radius:1.500px"></div>
<div class="abs" style="left:9px;top:128.500px;width:127.800px;height:2.800px;background:#4ccf7f;border-radius:1.500px"></div>
</div>
<!-- notification -->
<div class="abs" style="left:1083.300px;top:551.200px;width:203.700px;height:50px;background:rgba(24,25,38,.94);border-radius:3px"></div>
<svg class="abs" style="left:1092.500px;top:565px" width="27" height="24" viewBox="0 0 27 24"><path d="M13.500 1 C14.300 1 14.800 1.400 15.200 2.100 L26 21 C26.600 22.200 26 23.300 24.600 23.300 H2.400 C1 23.300 .4 22.200 1 21 L11.800 2.100 C12.200 1.400 12.700 1 13.500 1Z" fill="#fcc419"/><path d="M13.500 7.500 V16" stroke="#fff" stroke-width="2.200" stroke-linecap="round"/><circle cx="13.500" cy="19.500" r="1.300" fill="#fff"/></svg>
<!-- watermark -->
<svg class="abs" style="left:1225px;top:560px" width="70" height="71" viewBox="0 0 622 631"><circle cx="297.500" cy="317" r="223" fill="#a9a9c0" opacity=".86"/><path d="M300 400 C270 370 230 360 200 340 C160 310 145 260 150 215 C160 160 220 120 290 122 C360 124 410 160 410 215 C410 260 385 300 372 340 C365 365 358 385 362 402 C340 405 310 425 305 447 C300 465 340 455 365 445 C395 432 420 430 410 455 C400 480 370 495 345 502" fill="none" stroke="#1c4278" stroke-width="13" stroke-linecap="round" stroke-linejoin="round"/></svg>
<div class="abs" style="left:1130.400px;top:560px;font-size:9.450px;line-height:12.100px;color:#fff;white-space:nowrap;-webkit-text-stroke:.2px #fff">Nivel de batería bajo: <span style="font-size:13px;color:#f2843a;line-height:10px;-webkit-text-stroke:.25px #f2843a">18%</span> o<br>menos disponible(s).<br>Conecte el cargador por favor</div>
<svg class="abs" style="left:1276.500px;top:554.500px" width="6" height="6" viewBox="0 0 6 6"><path d="M.6 .6 L5.400 5.400 M5.400 .6 L.6 5.400" stroke="#fff" stroke-width="1.500"/></svg>
<!-- taskbar -->
<div class="abs" style="left:0;top:607.500px;width:105px;height:23.500px;background:linear-gradient(to right,rgba(120,125,150,.25),rgba(150,155,175,.5) 65%,rgba(120,125,150,.08) 100%)"></div>
<div class="abs" style="left:104.500px;top:609px;width:1px;height:22px;background:rgba(90,95,120,.55)"></div>
<svg class="abs" style="left:6.800px;top:610.700px" width="19" height="19" viewBox="0 0 38 38"><path d="M19 0 C5.500 0 0 5.500 0 19 S5.500 38 19 38 S38 32.500 38 19 S32.500 0 19 0Z" fill="#f0a236"/><path d="M8.500 11.500 C8.500 10.700 9 10.200 9.800 10.200 H16.500 L18.500 12.500 H28.200 C29 12.500 29.500 13 29.500 13.800 V26.500 C29.500 27.300 29 27.800 28.200 27.800 H9.800 C9 27.800 8.500 27.300 8.500 26.500Z" fill="#fff"/></svg>
<div class="abs" style="left:32.300px;top:614.200px;font-size:9.400px;line-height:12px;font-weight:bold;color:#fff;text-shadow:0 1px 1px rgba(0,0,0,.5)">Archivos</div>
<!-- status icons -->
<svg class="abs" style="left:1180px;top:615.500px" width="17" height="12" viewBox="0 0 17 12"><path d="M4.200 11.500 C1.800 11.500 .5 10 .5 8.200 C.5 6.500 1.700 5.300 3.200 5.100 C3.400 2.500 5.300 .5 8 .5 C10.200 .5 11.900 1.800 12.500 3.800 C14.800 3.900 16.500 5.500 16.500 7.700 C16.500 9.900 14.800 11.500 12.700 11.500Z" fill="#fff"/><path d="M6.500 8.500 L8 7 M9 6 L10.500 4.500" stroke="#1c1e30" stroke-width="2.600" stroke-linecap="round"/><path d="M7 8 L10 5" stroke="#fff" stroke-width=".9"/><path d="M7.300 7.700 L9.700 5.300" stroke="#1c1e30" stroke-width="1.100"/></svg>
<svg class="abs" style="left:1208.500px;top:617px" width="14" height="11" viewBox="0 0 14 11"><path d="M1 3.800 C4.500 .6 9.500 .6 13 3.800 M3.200 6.200 C5.500 4.200 8.500 4.200 10.800 6.200" fill="none" stroke="#fff" stroke-width="1.700" stroke-linecap="round"/><circle cx="7" cy="8.800" r="1.500" fill="#fff"/></svg>
<div class="abs" style="left:1258.800px;top:617px;width:5.600px;height:10.700px;background:#c8242e;border-radius:.8px"></div>
<div class="abs" style="left:1260.300px;top:615.600px;width:2.600px;height:1.600px;background:#c8242e"></div>
<div class="abs" style="left:1267.300px;top:615.300px;font-size:8.700px;line-height:12px;font-weight:bold;color:#fff;letter-spacing:-.1px">18%</div>
</body>
</html>
